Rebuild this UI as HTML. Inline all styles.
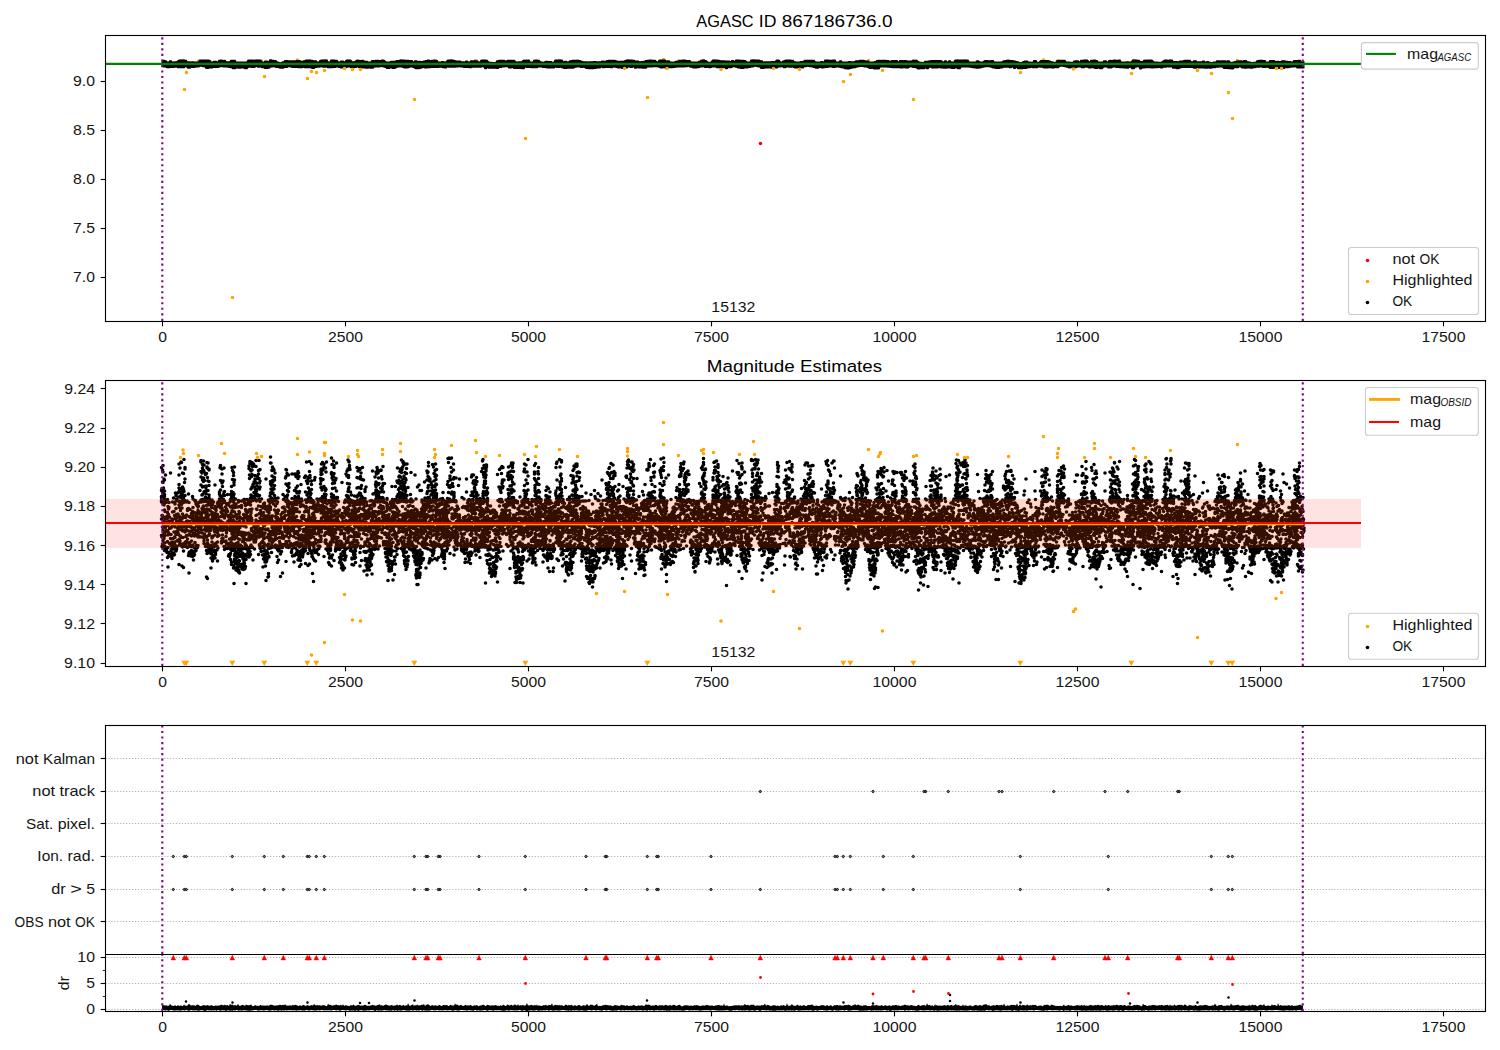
<!DOCTYPE html><html><head><meta charset="utf-8"><style>html,body{margin:0;padding:0;background:#fff;width:1500px;height:1050px;overflow:hidden}svg text{font-family:"Liberation Sans", sans-serif;fill:#151515}svg text.t{fill:#000}</style></head><body><svg width="1500" height="1050" viewBox="0 0 1500 1050" style="position:absolute;left:0;top:0">
<rect width="1500" height="1050" fill="#fff"/>
<defs>
<clipPath id="c1"><rect x="105.5" y="35.5" width="1380" height="286"/></clipPath>
<clipPath id="c2"><rect x="105.5" y="380.5" width="1380" height="286"/></clipPath>
<clipPath id="c3"><rect x="105.5" y="725.5" width="1380" height="229"/></clipPath>
<clipPath id="c4"><rect x="105.5" y="954.5" width="1380" height="57"/></clipPath>
<clipPath id="c34"><rect x="105.5" y="725.5" width="1380" height="286"/></clipPath>
</defs>
<g clip-path="url(#c1)">
<path transform="scale(0.5)" d="M366 121h0m1 1h0m-6 0h0m36 0h0m46-1h0m6 1h0m64 0h0m2 0h0m8 0h0m72-2h0m0 2h0m24 0h0m30-1h0m2 0h0m-2 1h0m0 0h0m48 0h0m18 0h0m0 0h0m2 0h0m48-1h0m0 1h0m36-1h0m0 1h0m68-1h0m2 1h0m-2 0h0m34-1h0m48 0h0m2 1h0m18 0h0m28 0h0m50 0h0m24-1h0m-2 1h0m48-1h0m36 1h0m100-1h0m0 1h0m0 0h0m72-3h0m0 2h0m30 1h0m46 0h0m4-1h0m0 1h0m20 0h0m52 0h0m28-1h0m2 1h0m228-1h0m24 1h0m-4 0h0m3 0h0m67 0h0m6 0h0m82 0h0m14 0h0m6 0h0m82 0h0m70-2h0m30 1h0m-2 1h0m0 0h0m54 0h0m20-1h0m0 0h0m32 1h0m46-1h0m4 1h0m20 0h0m50 0h0m134-1h0" stroke="#ffa500" stroke-width="7.2" stroke-linecap="round" fill="none"/>
<polygon points="161.5,59.76 162.5,59.76 163.5,59.76 164.5,59.76 165.5,60.25 166.5,60.25 167.5,61.47 168.5,61.47 169.5,60.13 170.5,60.13 171.5,60.13 172.5,61.4 173.5,61.4 174.5,61.15 175.5,61.15 176.5,61.13 177.5,60.23 178.5,59.69 179.5,59.58 180.5,59.58 181.5,59.58 182.5,59.45 183.5,59.45 184.5,59.45 185.5,59.86 186.5,59.86 187.5,61.18 188.5,61.18 189.5,61.18 190.5,61.61 191.5,61.31 192.5,61.31 193.5,61.31 194.5,61.45 195.5,61.51 196.5,61.51 197.5,61.61 198.5,61.01 199.5,59.57 200.5,59.51 201.5,59.51 202.5,59.51 203.5,59.54 204.5,59.54 205.5,59.62 206.5,59.62 207.5,59.62 208.5,59.62 209.5,59.64 210.5,59.93 211.5,61.49 212.5,61.49 213.5,60.74 214.5,60.74 215.5,60.74 216.5,60.74 217.5,61.6 218.5,59.85 219.5,59.76 220.5,59.76 221.5,59.76 222.5,59.9 223.5,59.9 224.5,59.9 225.5,59.9 226.5,61.2 227.5,61.2 228.5,61.2 229.5,61.2 230.5,59.87 231.5,59.87 232.5,59.87 233.5,59.85 234.5,59.85 235.5,59.85 236.5,61.44 237.5,61.52 238.5,61.52 239.5,61.52 240.5,61.53 241.5,61.53 242.5,61.46 243.5,61.46 244.5,61.46 245.5,61.46 246.5,61.47 247.5,59.78 248.5,59.57 249.5,59.57 250.5,59.57 251.5,59.57 252.5,59.62 253.5,59.62 254.5,59.7 255.5,59.51 256.5,59.51 257.5,59.51 258.5,59.52 259.5,59.52 260.5,59.52 261.5,59.95 262.5,61.43 263.5,61.65 264.5,60.44 265.5,60.44 266.5,60.44 267.5,60.44 268.5,61.3 269.5,59.35 270.5,59.35 271.5,59.35 272.5,59.64 273.5,59.84 274.5,59.94 275.5,59.99 276.5,60.14 277.5,61.38 278.5,61.38 279.5,61.99 280.5,62.22 281.5,61.87 282.5,61.21 283.5,61.21 284.5,59.97 285.5,59.97 286.5,59.97 287.5,59.97 288.5,60.17 289.5,60.23 290.5,60.18 291.5,60.18 292.5,60.18 293.5,60.19 294.5,60.19 295.5,60.19 296.5,60.07 297.5,60.07 298.5,60.07 299.5,60.07 300.5,60.31 301.5,60.71 302.5,60.71 303.5,60.36 304.5,60.29 305.5,59.58 306.5,59.58 307.5,59.58 308.5,59.55 309.5,59.55 310.5,59.55 311.5,59.68 312.5,59.68 313.5,60.37 314.5,60.37 315.5,60.37 316.5,60.37 317.5,61.45 318.5,61.43 319.5,59.96 320.5,59.69 321.5,59.62 322.5,59.62 323.5,59.62 324.5,59.68 325.5,59.59 326.5,59.59 327.5,59.59 328.5,61.5 329.5,61.5 330.5,59.39 331.5,59.39 332.5,59.39 333.5,59.54 334.5,59.54 335.5,59.64 336.5,59.64 337.5,59.64 338.5,61.36 339.5,61.57 340.5,60.62 341.5,60.62 342.5,60.62 343.5,60.62 344.5,61.48 345.5,60.05 346.5,59.49 347.5,59.49 348.5,59.49 349.5,59.49 350.5,59.59 351.5,59.97 352.5,61.25 353.5,61.28 354.5,61.28 355.5,60.36 356.5,59.87 357.5,59.87 358.5,59.87 359.5,59.92 360.5,59.92 361.5,59.86 362.5,59.86 363.5,59.86 364.5,60.49 365.5,60.83 366.5,60.83 367.5,60.83 368.5,61.53 369.5,61.53 370.5,61.5 371.5,60.04 372.5,60.04 373.5,60.04 374.5,60.08 375.5,59.87 376.5,59.87 377.5,59.87 378.5,59.87 379.5,59.99 380.5,59.99 381.5,59.82 382.5,59.82 383.5,59.82 384.5,59.82 385.5,60.67 386.5,61.41 387.5,61.41 388.5,61.41 389.5,61.59 390.5,60.82 391.5,60.82 392.5,60.82 393.5,60.82 394.5,60.8 395.5,60.54 396.5,59.9 397.5,59.9 398.5,59.9 399.5,59.93 400.5,59.49 401.5,59.49 402.5,59.49 403.5,59.57 404.5,59.57 405.5,59.64 406.5,59.69 407.5,59.69 408.5,59.69 409.5,60.12 410.5,60.12 411.5,60.12 412.5,60.12 413.5,61.54 414.5,60.23 415.5,60.23 416.5,60.23 417.5,60.74 418.5,60.74 419.5,60.74 420.5,61 421.5,61 422.5,61.02 423.5,60.6 424.5,60.6 425.5,60.03 426.5,60.03 427.5,59.62 428.5,59.62 429.5,59.62 430.5,60.36 431.5,59.72 432.5,59.72 433.5,59.72 434.5,59.68 435.5,59.68 436.5,59.68 437.5,59.97 438.5,61.48 439.5,61.44 440.5,61.44 441.5,61.12 442.5,61.12 443.5,61.12 444.5,61.5 445.5,61.5 446.5,60.55 447.5,59.39 448.5,59.39 449.5,59.39 450.5,59.39 451.5,59.39 452.5,59.39 453.5,59.7 454.5,59.7 455.5,60.37 456.5,60.39 457.5,60.39 458.5,60.43 459.5,60.43 460.5,60.43 461.5,61.37 462.5,61.37 463.5,61.37 464.5,61.44 465.5,60.44 466.5,60.44 467.5,60.44 468.5,61.46 469.5,61.46 470.5,60.33 471.5,60.24 472.5,60.24 473.5,60.24 474.5,60.25 475.5,60.36 476.5,60.36 477.5,60.36 478.5,61.24 479.5,61.42 480.5,60.07 481.5,59.47 482.5,59.47 483.5,59.47 484.5,59.47 485.5,59.73 486.5,59.73 487.5,59.73 488.5,60.88 489.5,61.78 490.5,61.78 491.5,61.78 492.5,61.99 493.5,61.99 494.5,61.99 495.5,62 496.5,60.22 497.5,60.22 498.5,59.96 499.5,59.88 500.5,59.82 501.5,59.82 502.5,59.82 503.5,59.82 504.5,59.87 505.5,60.49 506.5,60.15 507.5,59.85 508.5,59.85 509.5,59.77 510.5,59.65 511.5,59.65 512.5,59.64 513.5,59.64 514.5,59.64 515.5,60.69 516.5,61.52 517.5,61.55 518.5,61.34 519.5,61.34 520.5,61.34 521.5,61.34 522.5,60.07 523.5,59.68 524.5,59.68 525.5,59.68 526.5,59.45 527.5,59.45 528.5,59.45 529.5,59.45 530.5,61.46 531.5,61.46 532.5,61.46 533.5,59.75 534.5,59.66 535.5,59.66 536.5,59.66 537.5,59.87 538.5,59.87 539.5,59.87 540.5,61.08 541.5,61.47 542.5,61.47 543.5,61.71 544.5,61.25 545.5,60.84 546.5,60.84 547.5,60.84 548.5,60.92 549.5,60.92 550.5,61.09 551.5,61.09 552.5,61.64 553.5,61.66 554.5,59.86 555.5,59.58 556.5,59.58 557.5,59.58 558.5,59.46 559.5,59.46 560.5,59.46 561.5,59.51 562.5,59.51 563.5,61.3 564.5,60.86 565.5,60.86 566.5,60.86 567.5,61.47 568.5,61.33 569.5,60.25 570.5,60.25 571.5,60.02 572.5,59.78 573.5,59.78 574.5,59.78 575.5,59.68 576.5,59.68 577.5,59.68 578.5,59.7 579.5,60.08 580.5,60.1 581.5,60.79 582.5,60.79 583.5,61.32 584.5,61.13 585.5,61.13 586.5,61.13 587.5,61.13 588.5,61.52 589.5,61.22 590.5,61.22 591.5,61.22 592.5,61.22 593.5,61.02 594.5,61.02 595.5,61.02 596.5,61.18 597.5,61.18 598.5,61.18 599.5,61.18 600.5,61.28 601.5,60.5 602.5,60.5 603.5,60.5 604.5,60.67 605.5,60.67 606.5,60.12 607.5,59.91 608.5,59.86 609.5,59.66 610.5,59.66 611.5,59.66 612.5,59.66 613.5,59.74 614.5,59.74 615.5,60.07 616.5,60.13 617.5,60.72 618.5,60.72 619.5,60.72 620.5,60.72 621.5,60.82 622.5,60.82 623.5,60.82 624.5,60.31 625.5,59.89 626.5,59.56 627.5,59.49 628.5,59.49 629.5,59.49 630.5,59.59 631.5,59.59 632.5,59.59 633.5,59.72 634.5,59.72 635.5,60.42 636.5,60.42 637.5,60.42 638.5,60.42 639.5,61.33 640.5,61.33 641.5,61.06 642.5,61.06 643.5,60.72 644.5,60.72 645.5,59.96 646.5,59.96 647.5,59.66 648.5,59.66 649.5,59.46 650.5,59.46 651.5,59.46 652.5,59.77 653.5,59.69 654.5,59.69 655.5,59.69 656.5,60.81 657.5,61.54 658.5,60.02 659.5,59.44 660.5,59.44 661.5,59.44 662.5,59.39 663.5,59.39 664.5,59.39 665.5,59.62 666.5,60.38 667.5,60.24 668.5,60.24 669.5,60.24 670.5,61.46 671.5,61.46 672.5,61.46 673.5,61.85 674.5,61.37 675.5,60.85 676.5,60.85 677.5,60.85 678.5,60.23 679.5,59.85 680.5,59.65 681.5,59.65 682.5,59.59 683.5,59.59 684.5,59.59 685.5,59.59 686.5,60.03 687.5,60.03 688.5,60.03 689.5,60.03 690.5,60.22 691.5,61.5 692.5,61.5 693.5,61.51 694.5,61.51 695.5,61.53 696.5,61.57 697.5,61.57 698.5,60.68 699.5,60.68 700.5,59.88 701.5,59.82 702.5,59.4 703.5,59.4 704.5,59.4 705.5,59.94 706.5,59.94 707.5,60.89 708.5,61.71 709.5,61.71 710.5,61.71 711.5,60.5 712.5,59.61 713.5,59.59 714.5,59.59 715.5,59.54 716.5,59.54 717.5,59.54 718.5,59.7 719.5,59.7 720.5,60.26 721.5,60.32 722.5,60.32 723.5,60.32 724.5,60.32 725.5,60.62 726.5,60.4 727.5,60.4 728.5,60.4 729.5,60.4 730.5,61.09 731.5,60.03 732.5,60.03 733.5,60.03 734.5,61.06 735.5,59.52 736.5,59.52 737.5,59.52 738.5,59.52 739.5,59.66 740.5,59.63 741.5,59.63 742.5,59.63 743.5,59.63 744.5,60.09 745.5,60.09 746.5,60.63 747.5,61.51 748.5,61.51 749.5,61.56 750.5,59.46 751.5,59.46 752.5,59.46 753.5,59.51 754.5,59.47 755.5,59.47 756.5,59.47 757.5,59.48 758.5,59.48 759.5,59.48 760.5,60.16 761.5,60.16 762.5,60.16 763.5,61.41 764.5,61.31 765.5,61.31 766.5,61.31 767.5,61.16 768.5,61.16 769.5,61.16 770.5,61.16 771.5,61.12 772.5,61.12 773.5,61.12 774.5,61.33 775.5,60.3 776.5,59.61 777.5,59.61 778.5,59.61 779.5,59.78 780.5,60.92 781.5,61.66 782.5,60.62 783.5,60.48 784.5,59.98 785.5,59.61 786.5,59.61 787.5,59.61 788.5,59.57 789.5,59.57 790.5,59.57 791.5,59.72 792.5,59.72 793.5,59.72 794.5,61.34 795.5,61.34 796.5,61.53 797.5,61.53 798.5,61.53 799.5,61.44 800.5,60.91 801.5,60.91 802.5,60.91 803.5,60.51 804.5,59.63 805.5,59.63 806.5,59.63 807.5,59.63 808.5,59.63 809.5,59.78 810.5,59.78 811.5,59.76 812.5,59.76 813.5,59.76 814.5,59.77 815.5,61.14 816.5,61.48 817.5,61.48 818.5,61.48 819.5,61.75 820.5,60.94 821.5,60.94 822.5,60.94 823.5,61.5 824.5,59.57 825.5,59.57 826.5,59.51 827.5,59.51 828.5,59.51 829.5,59.77 830.5,59.64 831.5,59.64 832.5,59.53 833.5,59.53 834.5,59.53 835.5,59.54 836.5,61.53 837.5,61.58 838.5,61.58 839.5,60.28 840.5,60.28 841.5,60.28 842.5,61.44 843.5,61.44 844.5,61.38 845.5,61.38 846.5,61.38 847.5,61.44 848.5,61.12 849.5,61.12 850.5,61.12 851.5,61.37 852.5,61.37 853.5,61.37 854.5,60.89 855.5,60.15 856.5,60.15 857.5,60.15 858.5,60.15 859.5,59.86 860.5,59.85 861.5,59.76 862.5,59.76 863.5,59.76 864.5,60.09 865.5,60.18 866.5,60.38 867.5,60.38 868.5,60.49 869.5,61.51 870.5,61.53 871.5,61.53 872.5,61.61 873.5,61.61 874.5,60.88 875.5,60.88 876.5,60.05 877.5,60.05 878.5,60.05 879.5,60.05 880.5,59.92 881.5,59.92 882.5,59.86 883.5,59.86 884.5,59.86 885.5,59.86 886.5,60.01 887.5,60.01 888.5,60.01 889.5,60.54 890.5,60.69 891.5,60.05 892.5,60.05 893.5,60.05 894.5,60.05 895.5,60.08 896.5,60.08 897.5,60.1 898.5,61.53 899.5,60.12 900.5,60.11 901.5,60.11 902.5,60.11 903.5,60.24 904.5,60.05 905.5,60.05 906.5,60.05 907.5,60.38 908.5,60.54 909.5,60.54 910.5,60.54 911.5,60.54 912.5,59.79 913.5,59.69 914.5,59.69 915.5,59.69 916.5,59.69 917.5,60.32 918.5,60.91 919.5,61.45 920.5,61.69 921.5,61.77 922.5,61.95 923.5,61.93 924.5,60.82 925.5,60.82 926.5,60.82 927.5,60.82 928.5,60.52 929.5,60.26 930.5,60.26 931.5,59.9 932.5,59.9 933.5,59.9 934.5,59.9 935.5,60.03 936.5,60.03 937.5,60.03 938.5,59.94 939.5,59.94 940.5,59.94 941.5,59.94 942.5,60.89 943.5,61.42 944.5,60.3 945.5,60.3 946.5,60.3 947.5,61.84 948.5,60.25 949.5,60.25 950.5,60.25 951.5,61.58 952.5,61.44 953.5,61.44 954.5,59.66 955.5,59.49 956.5,59.49 957.5,59.49 958.5,59.52 959.5,59.52 960.5,59.62 961.5,59.61 962.5,59.61 963.5,59.49 964.5,59.49 965.5,59.49 966.5,59.49 967.5,59.63 968.5,59.77 969.5,61.49 970.5,61.49 971.5,61.49 972.5,61.53 973.5,61.53 974.5,61.53 975.5,61.53 976.5,60.21 977.5,60.21 978.5,60.21 979.5,61.07 980.5,61.41 981.5,61.41 982.5,61.44 983.5,60.73 984.5,60.02 985.5,60.02 986.5,60.02 987.5,60.02 988.5,60.26 989.5,60.21 990.5,60.21 991.5,60.07 992.5,60.07 993.5,60.07 994.5,61.52 995.5,61.46 996.5,61.46 997.5,61.46 998.5,61.46 999.5,61.59 1000.5,61.59 1001.5,61.49 1002.5,60.78 1003.5,60.28 1004.5,60.18 1005.5,60.07 1006.5,59.8 1007.5,59.8 1008.5,59.8 1009.5,59.8 1010.5,60 1011.5,60 1012.5,60 1013.5,60.27 1014.5,60.43 1015.5,60.43 1016.5,61.11 1017.5,61.13 1018.5,61.13 1019.5,62.01 1020.5,62.02 1021.5,62.02 1022.5,61.23 1023.5,61.04 1024.5,60.45 1025.5,60.45 1026.5,60.45 1027.5,60.45 1028.5,61.5 1029.5,61.5 1030.5,61.5 1031.5,61.68 1032.5,61.84 1033.5,60.05 1034.5,60.05 1035.5,60.05 1036.5,60.05 1037.5,61.85 1038.5,61.91 1039.5,61.04 1040.5,59.99 1041.5,59.99 1042.5,59.99 1043.5,59.99 1044.5,59.91 1045.5,59.91 1046.5,59.91 1047.5,59.91 1048.5,59.95 1049.5,60.48 1050.5,60.48 1051.5,61.33 1052.5,61.33 1053.5,61.53 1054.5,61.88 1055.5,61.64 1056.5,60.29 1057.5,60.02 1058.5,60.02 1059.5,60.02 1060.5,59.86 1061.5,59.86 1062.5,59.78 1063.5,59.78 1064.5,59.78 1065.5,59.94 1066.5,61.53 1067.5,61.45 1068.5,61.45 1069.5,61.45 1070.5,61.68 1071.5,61.68 1072.5,62.11 1073.5,60.56 1074.5,60.56 1075.5,60.25 1076.5,60.23 1077.5,60.23 1078.5,60.23 1079.5,61.51 1080.5,59.82 1081.5,59.82 1082.5,59.82 1083.5,59.82 1084.5,59.55 1085.5,59.55 1086.5,59.55 1087.5,59.55 1088.5,60.36 1089.5,61.56 1090.5,59.86 1091.5,59.86 1092.5,59.71 1093.5,59.71 1094.5,59.71 1095.5,59.71 1096.5,60.04 1097.5,60.04 1098.5,61.51 1099.5,61.51 1100.5,61.51 1101.5,61.53 1102.5,61.53 1103.5,60.13 1104.5,60.13 1105.5,60.13 1106.5,60.13 1107.5,61.8 1108.5,60.08 1109.5,60.08 1110.5,60.08 1111.5,59.89 1112.5,59.89 1113.5,59.62 1114.5,59.62 1115.5,59.62 1116.5,59.84 1117.5,59.84 1118.5,59.56 1119.5,59.56 1120.5,59.56 1121.5,61.45 1122.5,61.45 1123.5,61.47 1124.5,61.47 1125.5,61.47 1126.5,61.28 1127.5,61.28 1128.5,61.28 1129.5,61.53 1130.5,61.53 1131.5,60.68 1132.5,59.79 1133.5,59.45 1134.5,59.45 1135.5,59.45 1136.5,59.5 1137.5,59.82 1138.5,59.82 1139.5,59.82 1140.5,60.97 1141.5,60.97 1142.5,60.97 1143.5,59.75 1144.5,59.7 1145.5,59.7 1146.5,59.7 1147.5,59.57 1148.5,59.57 1149.5,59.57 1150.5,59.57 1151.5,59.61 1152.5,59.69 1153.5,60.84 1154.5,61.53 1155.5,61.53 1156.5,61.53 1157.5,61.53 1158.5,61.83 1159.5,61.85 1160.5,61.85 1161.5,61.45 1162.5,60.82 1163.5,60 1164.5,59.44 1165.5,59.41 1166.5,59.41 1167.5,59.41 1168.5,59.69 1169.5,59.42 1170.5,59.42 1171.5,59.42 1172.5,59.42 1173.5,60.98 1174.5,60.98 1175.5,60.98 1176.5,60.98 1177.5,61.32 1178.5,61.32 1179.5,60.54 1180.5,60.54 1181.5,60.54 1182.5,60.54 1183.5,59.88 1184.5,59.64 1185.5,59.64 1186.5,59.64 1187.5,59.65 1188.5,59.65 1189.5,59.67 1190.5,59.77 1191.5,61.3 1192.5,61.22 1193.5,60.29 1194.5,60.29 1195.5,60.29 1196.5,60.29 1197.5,61.42 1198.5,61.3 1199.5,61.3 1200.5,61.3 1201.5,61.15 1202.5,60.62 1203.5,60.62 1204.5,60.62 1205.5,61.68 1206.5,61.03 1207.5,61.03 1208.5,61.03 1209.5,61.79 1210.5,61.79 1211.5,61.9 1212.5,61.9 1213.5,61.57 1214.5,61.47 1215.5,61.44 1216.5,60.23 1217.5,60.23 1218.5,60.23 1219.5,60.23 1220.5,60.45 1221.5,60.27 1222.5,60.2 1223.5,60.2 1224.5,60.2 1225.5,60.2 1226.5,60.86 1227.5,60.36 1228.5,60.36 1229.5,60.36 1230.5,61.64 1231.5,61.64 1232.5,61.64 1233.5,61.51 1234.5,60.99 1235.5,60.95 1236.5,60.62 1237.5,60.62 1238.5,60.62 1239.5,60.13 1240.5,60.13 1241.5,60.13 1242.5,60.68 1243.5,60.03 1244.5,60.03 1245.5,60.03 1246.5,60.03 1247.5,61.2 1248.5,61.2 1249.5,61.53 1250.5,61.53 1251.5,61.89 1252.5,61.98 1253.5,61.65 1254.5,61.65 1255.5,61.65 1256.5,60.17 1257.5,60.17 1258.5,59.66 1259.5,59.66 1260.5,59.66 1261.5,59.66 1262.5,59.76 1263.5,59.96 1264.5,59.96 1265.5,59.96 1266.5,61.69 1267.5,61.44 1268.5,61.44 1269.5,59.99 1270.5,59.99 1271.5,59.99 1272.5,60.01 1273.5,60.05 1274.5,60.05 1275.5,60.96 1276.5,60.75 1277.5,60.75 1278.5,60.75 1279.5,61.04 1280.5,61.04 1281.5,60.18 1282.5,60.18 1283.5,60.18 1284.5,60.18 1285.5,60.61 1286.5,60.68 1287.5,60.68 1288.5,60.88 1289.5,60.88 1290.5,60.88 1291.5,61.57 1292.5,61.5 1293.5,59.99 1294.5,59.99 1295.5,59.99 1296.5,59.96 1297.5,59.95 1298.5,59.63 1299.5,59.63 1300.5,59.63 1301.5,61.32 1302.5,61.36 1303.5,61.36 1304.5,61.36 1304.5,68.48 1303.5,68.59 1302.5,68.59 1301.5,68.59 1300.5,68.41 1299.5,68.55 1298.5,68.55 1297.5,68.55 1296.5,68.26 1295.5,67.35 1294.5,67.38 1293.5,67.38 1292.5,67.38 1291.5,67.69 1290.5,67.74 1289.5,67.97 1288.5,68.25 1287.5,68.25 1286.5,68.25 1285.5,68.35 1284.5,68.98 1283.5,68.98 1282.5,68.98 1281.5,68.79 1280.5,68.79 1279.5,69.08 1278.5,69.08 1277.5,69.08 1276.5,69.08 1275.5,68.79 1274.5,68.64 1273.5,69.08 1272.5,69.08 1271.5,69.08 1270.5,69.08 1269.5,69.01 1268.5,68.05 1267.5,67.84 1266.5,67.84 1265.5,67.97 1264.5,67.97 1263.5,67.97 1262.5,67.97 1261.5,67.44 1260.5,67.52 1259.5,67.63 1258.5,67.63 1257.5,67.65 1256.5,67.65 1255.5,68.19 1254.5,68.19 1253.5,68.23 1252.5,68.67 1251.5,68.67 1250.5,68.67 1249.5,68.62 1248.5,68.62 1247.5,68.62 1246.5,68.82 1245.5,68.82 1244.5,68.82 1243.5,68.4 1242.5,68.4 1241.5,68.4 1240.5,67.57 1239.5,67.27 1238.5,68.14 1237.5,68.14 1236.5,68.14 1235.5,68.14 1234.5,68.31 1233.5,69.43 1232.5,69.43 1231.5,69.43 1230.5,69.27 1229.5,69.27 1228.5,69.27 1227.5,68.98 1226.5,69 1225.5,69 1224.5,69 1223.5,69 1222.5,67.73 1221.5,67.6 1220.5,67.6 1219.5,67.43 1218.5,67.63 1217.5,67.63 1216.5,67.63 1215.5,68.22 1214.5,68.22 1213.5,68.32 1212.5,68.32 1211.5,68.8 1210.5,68.8 1209.5,68.8 1208.5,68.58 1207.5,68.64 1206.5,68.64 1205.5,68.64 1204.5,68.64 1203.5,68.54 1202.5,68.54 1201.5,68.54 1200.5,68.54 1199.5,68.45 1198.5,68.45 1197.5,68.08 1196.5,68.71 1195.5,68.71 1194.5,68.71 1193.5,68.71 1192.5,68.04 1191.5,68.04 1190.5,67.89 1189.5,67.89 1188.5,67.89 1187.5,67.88 1186.5,67.88 1185.5,67.99 1184.5,67.99 1183.5,67.99 1182.5,68.08 1181.5,68.29 1180.5,68.31 1179.5,68.91 1178.5,69.18 1177.5,69.18 1176.5,69.18 1175.5,68.72 1174.5,68.81 1173.5,68.81 1172.5,68.81 1171.5,67.34 1170.5,67.52 1169.5,67.52 1168.5,67.52 1167.5,67.35 1166.5,67.87 1165.5,67.87 1164.5,67.87 1163.5,67.73 1162.5,68.57 1161.5,68.57 1160.5,68.57 1159.5,67.93 1158.5,68.04 1157.5,68.27 1156.5,68.27 1155.5,68.27 1154.5,68.22 1153.5,68.41 1152.5,68.41 1151.5,68.41 1150.5,68.2 1149.5,68.2 1148.5,68.2 1147.5,68.19 1146.5,68.19 1145.5,68.14 1144.5,68.46 1143.5,68.46 1142.5,68.46 1141.5,69.41 1140.5,69.41 1139.5,69.41 1138.5,67.33 1137.5,67.33 1136.5,67.84 1135.5,67.84 1134.5,69.22 1133.5,69.22 1132.5,69.22 1131.5,69.22 1130.5,67.87 1129.5,68.02 1128.5,68.81 1127.5,68.81 1126.5,68.81 1125.5,68.57 1124.5,68.45 1123.5,68.45 1122.5,68.22 1121.5,68.22 1120.5,68.22 1119.5,68.2 1118.5,68.05 1117.5,68.03 1116.5,67.91 1115.5,67.75 1114.5,67.54 1113.5,67.48 1112.5,67.96 1111.5,68.39 1110.5,68.41 1109.5,68.41 1108.5,68.41 1107.5,68.27 1106.5,67.56 1105.5,67.6 1104.5,67.6 1103.5,67.91 1102.5,69.34 1101.5,69.34 1100.5,69.34 1099.5,69.34 1098.5,68.44 1097.5,68.93 1096.5,68.93 1095.5,68.93 1094.5,68.93 1093.5,68.34 1092.5,68.33 1091.5,68.33 1090.5,68.4 1089.5,68.4 1088.5,68.4 1087.5,67.77 1086.5,67.77 1085.5,67.43 1084.5,68.33 1083.5,68.33 1082.5,68.33 1081.5,68.33 1080.5,67.4 1079.5,67.4 1078.5,67.49 1077.5,67.63 1076.5,68.2 1075.5,68.2 1074.5,68.2 1073.5,68.14 1072.5,68.14 1071.5,68.12 1070.5,68.44 1069.5,68.44 1068.5,68.44 1067.5,67.67 1066.5,67.67 1065.5,67.24 1064.5,67.24 1063.5,67.09 1062.5,66.79 1061.5,66.75 1060.5,66.84 1059.5,67.3 1058.5,68.37 1057.5,68.37 1056.5,68.37 1055.5,67.93 1054.5,68.56 1053.5,68.56 1052.5,68.56 1051.5,68.56 1050.5,68.33 1049.5,68.31 1048.5,68.31 1047.5,68.38 1046.5,68.38 1045.5,68.45 1044.5,68.45 1043.5,68.45 1042.5,67.83 1041.5,67.83 1040.5,67.83 1039.5,67.6 1038.5,67.6 1037.5,68.21 1036.5,68.21 1035.5,68.21 1034.5,68.27 1033.5,68.27 1032.5,68.27 1031.5,67.79 1030.5,68.26 1029.5,68.26 1028.5,68.26 1027.5,68.42 1026.5,68.88 1025.5,68.99 1024.5,68.99 1023.5,68.99 1022.5,69.16 1021.5,69.16 1020.5,69.16 1019.5,69.16 1018.5,69.14 1017.5,69.14 1016.5,67.77 1015.5,69.07 1014.5,69.07 1013.5,69.07 1012.5,67.35 1011.5,68.31 1010.5,68.31 1009.5,68.31 1008.5,67.63 1007.5,67.63 1006.5,67.63 1005.5,67.63 1004.5,67.82 1003.5,67.82 1002.5,68.4 1001.5,68.4 1000.5,68.4 999.5,68.96 998.5,68.96 997.5,68.97 996.5,68.97 995.5,68.97 994.5,68.47 993.5,68.47 992.5,68.47 991.5,67.83 990.5,67.83 989.5,67.28 988.5,67.26 987.5,67.32 986.5,67.32 985.5,67.35 984.5,67.52 983.5,67.83 982.5,67.83 981.5,68.31 980.5,68.44 979.5,68.48 978.5,68.63 977.5,68.63 976.5,68.63 975.5,68.55 974.5,68.53 973.5,68.35 972.5,68.35 971.5,68.06 970.5,67.86 969.5,67.86 968.5,67.51 967.5,67.43 966.5,67.4 965.5,67.4 964.5,67.52 963.5,67.52 962.5,67.52 961.5,67.38 960.5,69.13 959.5,69.13 958.5,69.13 957.5,69.13 956.5,68.26 955.5,68.42 954.5,68.95 953.5,68.95 952.5,68.95 951.5,68.95 950.5,68.62 949.5,68.62 948.5,68.62 947.5,68.42 946.5,68.64 945.5,68.64 944.5,68.64 943.5,68.64 942.5,68.51 941.5,68.51 940.5,68.51 939.5,68.1 938.5,68.2 937.5,68.46 936.5,68.46 935.5,68.48 934.5,68.48 933.5,68.48 932.5,68.48 931.5,68.38 930.5,67.59 929.5,67.92 928.5,69.33 927.5,69.33 926.5,69.33 925.5,68.59 924.5,69.24 923.5,69.24 922.5,69.24 921.5,69.14 920.5,69.14 919.5,69.49 918.5,69.49 917.5,69.49 916.5,68.51 915.5,68.19 914.5,68.07 913.5,68.07 912.5,68.07 911.5,67.42 910.5,67.33 909.5,67.85 908.5,68.53 907.5,68.6 906.5,68.6 905.5,68.6 904.5,68.24 903.5,68.24 902.5,68.5 901.5,68.5 900.5,68.5 899.5,68.24 898.5,68.21 897.5,68.33 896.5,68.33 895.5,68.33 894.5,68.23 893.5,68.23 892.5,68.23 891.5,68.11 890.5,67.95 889.5,67.85 888.5,67.82 887.5,67.73 886.5,67.43 885.5,67.42 884.5,67.42 883.5,67.52 882.5,67.52 881.5,67.52 880.5,67.52 879.5,69.38 878.5,69.38 877.5,69.38 876.5,69.38 875.5,69.43 874.5,69.43 873.5,69.43 872.5,68.73 871.5,68.96 870.5,68.96 869.5,68.96 868.5,68.5 867.5,68.02 866.5,67.58 865.5,67.48 864.5,67.46 863.5,67.16 862.5,66.99 861.5,66.98 860.5,66.98 859.5,67.33 858.5,67.33 857.5,67.42 856.5,67.86 855.5,68.21 854.5,68.34 853.5,68.34 852.5,68.65 851.5,68.8 850.5,68.99 849.5,69.43 848.5,69.43 847.5,69.43 846.5,69.43 845.5,69.15 844.5,69.15 843.5,68.42 842.5,68.42 841.5,68.17 840.5,68.03 839.5,67.63 838.5,67.63 837.5,67.24 836.5,67.75 835.5,67.75 834.5,67.96 833.5,67.96 832.5,67.96 831.5,67.59 830.5,67.59 829.5,67.47 828.5,67.75 827.5,67.89 826.5,67.89 825.5,67.89 824.5,68.26 823.5,68.51 822.5,68.51 821.5,68.51 820.5,67.99 819.5,67.93 818.5,68.7 817.5,68.7 816.5,68.7 815.5,68.69 814.5,67.89 813.5,67.89 812.5,67.47 811.5,67.38 810.5,67.23 809.5,67.23 808.5,67.03 807.5,66.85 806.5,67.13 805.5,67.13 804.5,67.29 803.5,68.45 802.5,68.45 801.5,68.45 800.5,67.69 799.5,67.69 798.5,68.28 797.5,68.44 796.5,68.44 795.5,68.44 794.5,68.44 793.5,67.92 792.5,67.51 791.5,67.84 790.5,67.84 789.5,67.84 788.5,67.83 787.5,67.28 786.5,67.8 785.5,68.24 784.5,68.24 783.5,68.24 782.5,67.16 781.5,67.21 780.5,67.38 779.5,67.38 778.5,67.54 777.5,68.47 776.5,68.47 775.5,68.47 774.5,67.7 773.5,68.64 772.5,68.64 771.5,68.64 770.5,68.64 769.5,68.3 768.5,68.38 767.5,68.38 766.5,68.38 765.5,68.38 764.5,68.63 763.5,69 762.5,69 761.5,69 760.5,69 759.5,67.48 758.5,67.48 757.5,67.15 756.5,66.91 755.5,66.74 754.5,66.74 753.5,67.47 752.5,67.47 751.5,67.47 750.5,68.02 749.5,68.02 748.5,68.17 747.5,68.55 746.5,68.55 745.5,68.55 744.5,68.41 743.5,68.92 742.5,68.92 741.5,68.92 740.5,68.92 739.5,68.57 738.5,68.57 737.5,68.57 736.5,67.77 735.5,67.77 734.5,67.27 733.5,67.27 732.5,67.75 731.5,68.25 730.5,68.25 729.5,68.25 728.5,68.12 727.5,69.27 726.5,69.27 725.5,69.27 724.5,68.03 723.5,68.18 722.5,68.18 721.5,68.18 720.5,68.18 719.5,68.18 718.5,68.18 717.5,68.18 716.5,68.18 715.5,67.58 714.5,67.58 713.5,67.58 712.5,67.54 711.5,68.05 710.5,68.14 709.5,68.14 708.5,68.14 707.5,67.81 706.5,68.07 705.5,68.07 704.5,68.07 703.5,67.34 702.5,67.43 701.5,67.56 700.5,67.56 699.5,68 698.5,68.17 697.5,68.3 696.5,68.6 695.5,68.6 694.5,68.6 693.5,68.57 692.5,68.36 691.5,67.75 690.5,67.75 689.5,67.59 688.5,66.69 687.5,67.29 686.5,67.29 685.5,67.29 684.5,67.43 683.5,67.43 682.5,67.43 681.5,67.46 680.5,67.49 679.5,67.49 678.5,67.49 677.5,67.59 676.5,67.82 675.5,67.82 674.5,68.12 673.5,68.12 672.5,68.13 671.5,68.22 670.5,68.22 669.5,68.22 668.5,68.2 667.5,69.07 666.5,69.07 665.5,69.07 664.5,68.34 663.5,68.34 662.5,68.45 661.5,68.45 660.5,68.45 659.5,67.91 658.5,67.45 657.5,67.42 656.5,67.37 655.5,67.37 654.5,67.33 653.5,67.3 652.5,67.5 651.5,67.5 650.5,67.5 649.5,67.53 648.5,67.58 647.5,67.58 646.5,68.75 645.5,68.76 644.5,68.76 643.5,68.76 642.5,68.76 641.5,68.41 640.5,68.45 639.5,68.45 638.5,68.45 637.5,68.19 636.5,68.67 635.5,68.67 634.5,68.67 633.5,67.2 632.5,68.05 631.5,68.05 630.5,68.05 629.5,67.74 628.5,67.28 627.5,68.45 626.5,68.45 625.5,68.45 624.5,68.45 623.5,68.92 622.5,68.92 621.5,68.92 620.5,68.33 619.5,68.41 618.5,68.41 617.5,68.41 616.5,68.08 615.5,67.78 614.5,67.78 613.5,67.52 612.5,68.2 611.5,68.2 610.5,68.2 609.5,67.99 608.5,67.94 607.5,68.07 606.5,68.07 605.5,68.12 604.5,68.13 603.5,68.13 602.5,68.13 601.5,67.5 600.5,68.4 599.5,68.4 598.5,68.4 597.5,68.4 596.5,68.81 595.5,68.92 594.5,69.09 593.5,69.33 592.5,69.33 591.5,69.33 590.5,69.18 589.5,69.18 588.5,69.18 587.5,69.11 586.5,68.92 585.5,68.82 584.5,67.94 583.5,67.81 582.5,68.05 581.5,68.05 580.5,68.05 579.5,67.38 578.5,67.38 577.5,67.37 576.5,67.65 575.5,67.65 574.5,68.13 573.5,68.66 572.5,68.66 571.5,68.66 570.5,68.66 569.5,68.74 568.5,68.74 567.5,68.74 566.5,69.04 565.5,69.04 564.5,69.04 563.5,69.04 562.5,68.29 561.5,68.29 560.5,67.74 559.5,68.02 558.5,68.02 557.5,68.02 556.5,67.94 555.5,67.47 554.5,68.58 553.5,68.58 552.5,68.58 551.5,68.58 550.5,68.56 549.5,68.56 548.5,68.56 547.5,68.39 546.5,68.39 545.5,67.95 544.5,68.1 543.5,68.1 542.5,68.1 541.5,67.53 540.5,67.42 539.5,67.42 538.5,67.53 537.5,68.25 536.5,68.25 535.5,68.25 534.5,68.25 533.5,68.13 532.5,68.13 531.5,68.13 530.5,67.95 529.5,67.95 528.5,68.04 527.5,68.04 526.5,68.04 525.5,67.49 524.5,69.14 523.5,69.14 522.5,69.14 521.5,69.14 520.5,69.12 519.5,69.12 518.5,69.12 517.5,69.11 516.5,69.11 515.5,69.11 514.5,69.11 513.5,69.11 512.5,67.93 511.5,68.43 510.5,68.43 509.5,68.43 508.5,68.43 507.5,67.32 506.5,67.32 505.5,67.21 504.5,67.53 503.5,67.53 502.5,67.53 501.5,67.93 500.5,67.93 499.5,67.93 498.5,69.09 497.5,69.09 496.5,69.09 495.5,68.79 494.5,68.79 493.5,68.79 492.5,68.82 491.5,68.82 490.5,68.82 489.5,68.63 488.5,68.63 487.5,68.25 486.5,69.13 485.5,69.13 484.5,69.13 483.5,67.35 482.5,67.34 481.5,67.87 480.5,67.87 479.5,67.87 478.5,67.87 477.5,67.74 476.5,67.74 475.5,67.74 474.5,67.74 473.5,67.63 472.5,67.77 471.5,68.16 470.5,68.16 469.5,68.16 468.5,68.09 467.5,68.09 466.5,68.11 465.5,68.11 464.5,68.11 463.5,68.11 462.5,67.61 461.5,67.55 460.5,67.55 459.5,67.24 458.5,67.43 457.5,67.43 456.5,67.49 455.5,67.75 454.5,67.75 453.5,67.75 452.5,67.75 451.5,67.66 450.5,67.66 449.5,67.66 448.5,67.66 447.5,67.54 446.5,68.42 445.5,68.42 444.5,68.42 443.5,68.13 442.5,68.13 441.5,67.87 440.5,67.83 439.5,67.87 438.5,67.98 437.5,67.98 436.5,67.98 435.5,67.98 434.5,67.91 433.5,67.91 432.5,67.98 431.5,68 430.5,68.13 429.5,68.13 428.5,68.13 427.5,68.38 426.5,68.38 425.5,68.38 424.5,68.38 423.5,68.03 422.5,68.16 421.5,68.74 420.5,68.87 419.5,69.23 418.5,69.23 417.5,69.23 416.5,69.23 415.5,69.21 414.5,68.76 413.5,68.09 412.5,67.79 411.5,67.5 410.5,67.5 409.5,68.05 408.5,68.34 407.5,68.46 406.5,68.46 405.5,68.46 404.5,68.46 403.5,68.16 402.5,67.77 401.5,67.54 400.5,67.42 399.5,67.42 398.5,67.42 397.5,67.71 396.5,68.18 395.5,68.72 394.5,68.98 393.5,68.98 392.5,68.98 391.5,68.54 390.5,68.54 389.5,69.03 388.5,69.03 387.5,69.03 386.5,69.03 385.5,68.09 384.5,67.84 383.5,67.41 382.5,67.24 381.5,66.89 380.5,67.29 379.5,67.45 378.5,67.45 377.5,67.45 376.5,67.45 375.5,67.47 374.5,67.47 373.5,68.68 372.5,68.68 371.5,68.68 370.5,68.68 369.5,68.5 368.5,68.74 367.5,68.74 366.5,68.74 365.5,68.74 364.5,68.55 363.5,68.55 362.5,68.55 361.5,68.29 360.5,68.29 359.5,68.29 358.5,68.29 357.5,67.35 356.5,68.12 355.5,68.12 354.5,68.23 353.5,68.23 352.5,68.23 351.5,68.23 350.5,68.23 349.5,67.52 348.5,67.4 347.5,67.78 346.5,67.98 345.5,68.39 344.5,68.39 343.5,68.5 342.5,68.5 341.5,68.5 340.5,68.38 339.5,68.12 338.5,68.12 337.5,67.46 336.5,67.55 335.5,68.02 334.5,68.02 333.5,68.02 332.5,68.28 331.5,68.28 330.5,68.28 329.5,68.23 328.5,68.23 327.5,68.14 326.5,67.51 325.5,67.81 324.5,67.81 323.5,67.81 322.5,67.81 321.5,67.32 320.5,67.41 319.5,67.72 318.5,67.72 317.5,67.72 316.5,68.04 315.5,68.04 314.5,69.07 313.5,69.07 312.5,69.07 311.5,68.67 310.5,68.18 309.5,68.27 308.5,68.27 307.5,68.27 306.5,68.27 305.5,68.16 304.5,68.16 303.5,67.84 302.5,68.22 301.5,68.22 300.5,68.33 299.5,68.33 298.5,68.33 297.5,67.98 296.5,67.98 295.5,68.1 294.5,68.1 293.5,68.1 292.5,68.1 291.5,67.79 290.5,67.62 289.5,67.37 288.5,67.37 287.5,68.06 286.5,68.06 285.5,68.06 284.5,68.06 283.5,68.64 282.5,68.64 281.5,68.81 280.5,68.81 279.5,68.81 278.5,68.11 277.5,68.11 276.5,68.11 275.5,67.82 274.5,67.38 273.5,67.35 272.5,67.62 271.5,67.62 270.5,67.83 269.5,68.85 268.5,68.85 267.5,69.03 266.5,69.03 265.5,69.03 264.5,69.03 263.5,68.34 262.5,68.34 261.5,68.34 260.5,67.57 259.5,67.72 258.5,67.72 257.5,67.72 256.5,67.09 255.5,67.43 254.5,67.99 253.5,67.99 252.5,67.99 251.5,67.99 250.5,67.84 249.5,67.84 248.5,67.84 247.5,69.16 246.5,69.16 245.5,69.16 244.5,69.16 243.5,68.47 242.5,68.47 241.5,68.45 240.5,68.63 239.5,68.63 238.5,68.63 237.5,68.6 236.5,68.53 235.5,69.18 234.5,69.18 233.5,69.18 232.5,69.18 231.5,68.21 230.5,68.21 229.5,67.95 228.5,67.81 227.5,67.8 226.5,67.41 225.5,67.47 224.5,67.47 223.5,67.47 222.5,67.33 221.5,67.14 220.5,67.14 219.5,67.39 218.5,68.05 217.5,68.05 216.5,68.05 215.5,67.9 214.5,67.9 213.5,68.03 212.5,68.4 211.5,68.4 210.5,68.4 209.5,68.4 208.5,68.91 207.5,68.91 206.5,68.91 205.5,68.84 204.5,67.31 203.5,67.17 202.5,67.17 201.5,66.84 200.5,66.85 199.5,67.25 198.5,67.38 197.5,67.51 196.5,67.54 195.5,67.76 194.5,67.99 193.5,67.99 192.5,67.99 191.5,67.81 190.5,68.65 189.5,68.65 188.5,68.65 187.5,68.65 186.5,67.38 185.5,67.31 184.5,68.37 183.5,68.37 182.5,68.37 181.5,68.3 180.5,68.3 179.5,68.21 178.5,68.21 177.5,68.21 176.5,67.55 175.5,67.73 174.5,67.73 173.5,67.91 172.5,67.91 171.5,67.91 170.5,67.91 169.5,68.33 168.5,68.33 167.5,68.33 166.5,68.33 165.5,67.53 164.5,67.53 163.5,67.52 162.5,67.33 161.5,67.33" fill="#000"/>
<path transform="scale(0.5)" d="M369 179h0m4-34h0m92 450h0m64-442h0m86 4h0m8-14h0m10 2h0m16-4h0m56-2h0m16 0h0m108 60h0m-140-62h0m362 140h0m244-82h0m392-32h0m14-14h0m64-8h0m62 58h0m-578-62h0m193 2h0m157 0h0m-52-2h0m-213 0h0m707 8h0m106-7h0m116 9h0m132-6h0m28 6h0m34 38h0m8 52h0m88-100h0m10 0h0" stroke="#ffa500" stroke-width="7.2" stroke-linecap="round" fill="none"/>
<path transform="scale(0.5)" d="M1521 287h0" stroke="#ff0000" stroke-width="7.2" stroke-linecap="round" fill="none"/>
<line x1="105.5" y1="63.9" x2="1361" y2="63.9" stroke="#008000" stroke-width="2.08"/>
<line x1="162.3" y1="320.9" x2="162.3" y2="35.5" stroke="#800080" stroke-width="2.08" stroke-dasharray="2.08 3.44"/>
<line x1="1302.77" y1="320.9" x2="1302.77" y2="35.5" stroke="#800080" stroke-width="2.08" stroke-dasharray="2.08 3.44"/>
</g>
<text x="711.38" y="311.9" font-size="14.3" textLength="44" lengthAdjust="spacingAndGlyphs">15132</text>
<rect x="105.5" y="35.5" width="1380" height="286" fill="none" stroke="#000" stroke-width="1.11"/>
<line x1="162.5" y1="321.5" x2="162.5" y2="326.36" stroke="#000" stroke-width="1.11"/>
<text x="162.5" y="342" font-size="14.3" text-anchor="middle" textLength="8.75" lengthAdjust="spacingAndGlyphs">0</text>
<line x1="345.5" y1="321.5" x2="345.5" y2="326.36" stroke="#000" stroke-width="1.11"/>
<text x="345.5" y="342" font-size="14.3" text-anchor="middle" textLength="35" lengthAdjust="spacingAndGlyphs">2500</text>
<line x1="528.5" y1="321.5" x2="528.5" y2="326.36" stroke="#000" stroke-width="1.11"/>
<text x="528.5" y="342" font-size="14.3" text-anchor="middle" textLength="35" lengthAdjust="spacingAndGlyphs">5000</text>
<line x1="711.5" y1="321.5" x2="711.5" y2="326.36" stroke="#000" stroke-width="1.11"/>
<text x="711.5" y="342" font-size="14.3" text-anchor="middle" textLength="35" lengthAdjust="spacingAndGlyphs">7500</text>
<line x1="894.5" y1="321.5" x2="894.5" y2="326.36" stroke="#000" stroke-width="1.11"/>
<text x="894.5" y="342" font-size="14.3" text-anchor="middle" textLength="43.88" lengthAdjust="spacingAndGlyphs">10000</text>
<line x1="1077.5" y1="321.5" x2="1077.5" y2="326.36" stroke="#000" stroke-width="1.11"/>
<text x="1077.5" y="342" font-size="14.3" text-anchor="middle" textLength="43.88" lengthAdjust="spacingAndGlyphs">12500</text>
<line x1="1260.5" y1="321.5" x2="1260.5" y2="326.36" stroke="#000" stroke-width="1.11"/>
<text x="1260.5" y="342" font-size="14.3" text-anchor="middle" textLength="43.88" lengthAdjust="spacingAndGlyphs">15000</text>
<line x1="1443.5" y1="321.5" x2="1443.5" y2="326.36" stroke="#000" stroke-width="1.11"/>
<text x="1443.5" y="342" font-size="14.3" text-anchor="middle" textLength="43.88" lengthAdjust="spacingAndGlyphs">17500</text>
<line x1="100.64" y1="81.5" x2="105.5" y2="81.5" stroke="#000" stroke-width="1.11"/>
<text x="95" y="86" font-size="14.3" text-anchor="end" textLength="22" lengthAdjust="spacingAndGlyphs">9.0</text>
<line x1="100.64" y1="130.5" x2="105.5" y2="130.5" stroke="#000" stroke-width="1.11"/>
<text x="95" y="135" font-size="14.3" text-anchor="end" textLength="22" lengthAdjust="spacingAndGlyphs">8.5</text>
<line x1="100.64" y1="179.5" x2="105.5" y2="179.5" stroke="#000" stroke-width="1.11"/>
<text x="95" y="184" font-size="14.3" text-anchor="end" textLength="22" lengthAdjust="spacingAndGlyphs">8.0</text>
<line x1="100.64" y1="228.5" x2="105.5" y2="228.5" stroke="#000" stroke-width="1.11"/>
<text x="95" y="233" font-size="14.3" text-anchor="end" textLength="21.88" lengthAdjust="spacingAndGlyphs">7.5</text>
<line x1="100.64" y1="277.5" x2="105.5" y2="277.5" stroke="#000" stroke-width="1.11"/>
<text x="95" y="282" font-size="14.3" text-anchor="end" textLength="21.88" lengthAdjust="spacingAndGlyphs">7.0</text>
<text x="696.34" y="27" font-size="17.1" textLength="57.29" lengthAdjust="spacingAndGlyphs" class="t">AGASC</text>
<text x="758.89" y="27" font-size="17.1" textLength="17.64" lengthAdjust="spacingAndGlyphs" class="t">ID</text>
<text x="781.8" y="27" font-size="17.1" textLength="110.66" lengthAdjust="spacingAndGlyphs" class="t">867186736.0</text>
<rect x="1361.4" y="42.65" width="116.9" height="26.45" rx="2.8" fill="#fff" fill-opacity="0.8" stroke="#cccccc" stroke-width="1.11"/>
<line x1="1366" y1="53.9" x2="1395.9" y2="53.9" stroke="#008000" stroke-width="2.08"/>
<text x="1407" y="58.8" font-size="14.3" textLength="31" lengthAdjust="spacingAndGlyphs">mag</text>
<text x="1437.4" y="60.7" font-size="10" textLength="33.75" lengthAdjust="spacingAndGlyphs" font-style="italic">AGASC</text>
<rect x="1348.5" y="247.5" width="130" height="67" rx="2.8" fill="#fff" fill-opacity="0.8" stroke="#cccccc" stroke-width="1.11"/>
<path transform="scale(0.5)" d="M2735 521h0" stroke="#ff0000" stroke-width="7.2" stroke-linecap="round" fill="none"/>
<path transform="scale(0.5)" d="M2735 563h0" stroke="#ffa500" stroke-width="7.2" stroke-linecap="round" fill="none"/>
<path transform="scale(0.5)" d="M2735 605h0" stroke="#000" stroke-width="7.2" stroke-linecap="round" fill="none"/>
<text x="1392.4" y="264" font-size="14.3" textLength="22.65" lengthAdjust="spacingAndGlyphs">not</text>
<text x="1419.45" y="264" font-size="14.3" textLength="19.95" lengthAdjust="spacingAndGlyphs">OK</text>
<text x="1392.4" y="285" font-size="14.3" textLength="80.12" lengthAdjust="spacingAndGlyphs">Highlighted</text>
<text x="1392.4" y="306" font-size="14.3" textLength="19.88" lengthAdjust="spacingAndGlyphs">OK</text>
<g clip-path="url(#c2)">
<path transform="scale(0.5)" d="M323 1038h0m0-34h0m0 67h0m0-78h0m0-58h0m0 46h0m0 15h0m0 5h0m0-5h0m1 97h0m0-19h0m0-43h0m0-54h0m1 18h0m0 36h0m0-91h0m0 24h0m0 28h0m0 62h0m0-55h0m0-14h0m0 103h0m1-28h0m0-26h0m0 47h0m0-10h0m0 23h0m0-90h0m0 3h0m0-76h0m0 0h0m0 13h0m0 21h0m0 19h0m0 2h0m0 15h0m1-25h0m0 8h0m0 25h0m0 38h0m0 46h0m0-94h0m1-16h0m0 94h0m0-67h0m0 57h0m0-109h0m0 84h0m0 32h0m0-65h0m0 27h0m1-16h0m0-27h0m0 93h0m0-104h0m0 88h0m0-4h0m0-73h0m0-33h0m0 141h0m0-112h0m0 46h0m0 58h0m0-94h0m1 47h0m0-8h0m0 63h0m0-30h0m0-48h0m0 72h0m0-2h0m0-41h0m1-49h0m0-53h0m0 105h0m1 47h0m0-40h0m0-57h0m1 94h0m0-38h0m0-24h0m1 26h0m0-31h0m0 52h0m0-36h0m0-4h0m0 61h0m1-1h0m0 11h0m0-53h0m0 21h0m0-58h0m0-26h0m1 35h0m0 36h0m0-19h0m0 54h0m0-40h0m0 30h0m0 39h0m0-121h0m1 34h0m0 65h0m0-83h0m0 76h0m0-87h0m0 17h0m0 30h0m1-50h0m0 27h0m0-37h0m1 52h0m0 52h0m0-22h0m0-53h0m1 9h0m0 44h0m0 25h0m1-67h0m0 32h0m0-131h0m1 123h0m0 32h0m0-10h0m0-35h0m1 36h0m0-38h0m0 45h0m0-14h0m1-47h0m0 68h0m0 6h0m0-28h0m0 5h0m0 28h0m0-24h0m0 16h0m1-85h0m0 0h0m0 28h0m0 43h0m0-54h0m0-37h0m1 73h0m0 19h0m1 2h0m0-102h0m0 110h0m1-42h0m0 29h0m0 2h0m0-72h0m0 87h0m1-36h0m0-43h0m0 58h0m0-2h0m0-3h0m0 25h0m1-59h0m0-42h0m0 46h0m0-17h0m0-33h0m0 27h0m0 44h0m1-89h0m1 83h0m0-31h0m0 64h0m0-66h0m0-45h0m0 26h0m1 82h0m0-101h0m0 45h0m0 20h0m0 33h0m0-67h0m0 1h0m0 62h0m1-91h0m0 92h0m0-11h0m0-39h0m0 50h0m1-12h0m0-95h0m0 70h0m1-22h0m0 22h0m0-28h0m0 37h0m1-17h0m0 5h0m0 16h0m0-10h0m1 11h0m0-94h0m0 18h0m0-44h0m0 60h0m0 119h0m0-146h0m0 49h0m0-30h0m0 40h0m0-73h0m0 34h0m0-75h0m1 75h0m0 82h0m0-107h0m0 100h0m0-63h0m0 33h0m0 42h0m1-48h0m0-1h0m0-7h0m0 3h0m0-101h0m0 106h0m0 40h0m0-40h0m0-48h0m0 44h0m0-30h0m0 41h0m1-28h0m0 67h0m0-16h0m0-79h0m1 10h0m0 45h0m0-56h0m0 62h0m0-67h0m0-63h0m0 71h0m0 8h0m0 72h0m1-97h0m0 31h0m0 83h0m0-167h0m0 135h0m1-44h0m0 116h0m0-139h0m0-9h0m0 1h0m0 53h0m0-35h0m0-18h0m0 69h0m0 1h0m0-68h0m1 49h0m0 52h0m0-26h0m0-71h0m0 37h0m0-54h0m0 26h0m0 4h0m0 41h0m0 49h0m0-148h0m1 30h0m0 99h0m0-91h0m0 18h0m0 91h0m1-61h0m0 103h0m0-188h0m0 50h0m0 38h0m0 67h0m0-119h0m0-3h0m0 16h0m0-17h0m0 25h0m0-3h0m0 4h0m1-1h0m0-85h0m0 64h0m0 79h0m0 30h0m0-89h0m0 49h0m1-51h0m0 59h0m0 0h0m0-95h0m1 26h0m0 94h0m0-147h0m0 20h0m0-23h0m0 118h0m0 11h0m1-19h0m0 43h0m0-53h0m0 58h0m1-44h0m0 24h0m0-13h0m0-2h0m0 25h0m1-28h0m0-12h0m0-13h0m0 41h0m0-67h0m1 57h0m0-19h0m0-40h0m0 82h0m1-6h0m0-25h0m0-11h0m0-24h0m0 76h0m0 1h0m0-74h0m1 73h0m0-45h0m0 0h0m1 13h0m0-45h0m0 53h0m0 41h0m0-123h0m1 118h0m0-101h0m0 141h0m0-113h0m0 19h0m0 36h0m1 23h0m0-68h0m0 26h0m0 35h0m0-14h0m0-41h0m1 58h0m0-22h0m0-66h0m0 90h0m1-46h0m0 28h0m0-56h0m0 19h0m0 39h0m1-61h0m0 80h0m0-41h0m0-18h0m0-6h0m1 25h0m0-39h0m0-6h0m0 55h0m0 11h0m0 8h0m1-31h0m0-10h0m1-37h0m0 6h0m0 26h0m0-15h0m0-6h0m0 59h0m0-61h0m0-39h0m0 120h0m1-9h0m0-14h0m0 17h0m0-109h0m0 35h0m0 5h0m0 65h0m0-88h0m1 105h0m0-54h0m0-21h0m1 66h0m0-52h0m1-13h0m0 50h0m0-58h0m0 28h0m0-26h0m0 69h0m0-37h0m0-47h0m0 31h0m0 47h0m1-32h0m0-4h0m0 18h0m0-83h0m0 37h0m1-36h0m0-2h0m0 101h0m0-60h0m0 5h0m1-16h0m0 70h0m0-30h0m0 29h0m0-92h0m1 34h0m0 10h0m0 39h0m0-57h0m0 2h0m0 25h0m1 30h0m0-80h0m0 15h0m0 4h0m1 16h0m0 47h0m0-24h0m0-28h0m0 0h0m0 2h0m0 19h0m0 33h0m1-89h0m0 68h0m0-37h0m0-16h0m0 70h0m0-77h0m1 21h0m0-23h0m0 45h0m0-14h0m0 2h0m0-4h0m0-1h0m1 11h0m0-46h0m0 40h0m0 27h0m0-14h0m0 7h0m0-15h0m0 7h0m1 17h0m0-30h0m0-20h0m0 0h0m1 3h0m0-46h0m0 22h0m1 26h0m0-25h0m0 46h0m1 9h0m0-135h0m0 46h0m0-47h0m0 31h0m0 94h0m0-8h0m0-11h0m0 25h0m0-54h0m0-57h0m0 131h0m0-153h0m1 108h0m0 31h0m0-60h0m0 4h0m0 0h0m0 30h0m0 1h0m0-31h0m1 13h0m0-71h0m0 99h0m0 21h0m0-65h0m0-11h0m1-49h0m0 79h0m0-84h0m0 24h0m0 14h0m0 25h0m0-10h0m0 54h0m0-114h0m0 96h0m1 13h0m0-24h0m0-14h0m0 22h0m1-66h0m0 7h0m0 86h0m0-37h0m0 29h0m0 7h0m0-107h0m0-19h0m0 127h0m0-46h0m1 69h0m0-88h0m0 66h0m0 32h0m0 5h0m0-114h0m0 104h0m0-59h0m0-75h0m0-13h0m0 90h0m1-37h0m0-22h0m0 107h0m0-70h0m0-12h0m0 57h0m0-19h0m0 12h0m0 24h0m1-12h0m0 10h0m0-33h0m0-22h0m1 51h0m0-52h0m0-8h0m0-45h0m0 144h0m1-106h0m0-12h0m0 61h0m0-55h0m0 17h0m0-26h0m0 57h0m0-27h0m1 30h0m0 41h0m0-11h0m0-51h0m0-64h0m0 207h0m0-152h0m0 1h0m0 71h0m0 27h0m1-76h0m0 3h0m0 61h0m0-164h0m0 77h0m0-68h0m0 159h0m0-36h0m0-121h0m0 115h0m0 56h0m0-55h0m0-34h0m0 24h0m0-12h0m1-10h0m0-19h0m0-46h0m0 90h0m0-6h0m0 3h0m0 38h0m0-82h0m0 93h0m0-4h0m0-1h0m0 17h0m0 54h0m1-122h0m0-73h0m0 130h0m0-95h0m0 12h0m0 37h0m0-5h0m0-115h0m0 78h0m0-23h0m1 90h0m0-52h0m0 32h0m0 42h0m0-31h0m0 37h0m0-58h0m1-103h0m0 25h0m0 40h0m0-6h0m0 5h0m0 28h0m0-59h0m0 85h0m0 34h0m0-100h0m0 56h0m0 47h0m0-98h0m0-55h0m0 70h0m1 58h0m0-28h0m1 66h0m0-102h0m0 93h0m0-5h0m0 11h0m1-94h0m0 33h0m0 14h0m0-2h0m0 50h0m0-43h0m0-39h0m1 94h0m0-25h0m0 45h0m1-85h0m0 46h0m0-58h0m0-24h0m0 93h0m0-61h0m1 29h0m0-29h0m0 26h0m0 32h0m0-65h0m0-40h0m0 94h0m0-66h0m0 56h0m0-10h0m1-64h0m0 24h0m0 59h0m0-63h0m0 92h0m0-71h0m0-43h0m0 65h0m0 46h0m0-73h0m0-21h0m1 29h0m0 47h0m0-56h0m0 27h0m0 1h0m0 40h0m0-11h0m0-67h0m1-31h0m0 45h0m1 40h0m0 22h0m0-78h0m0 61h0m0 22h0m0-57h0m0-4h0m1-1h0m0 47h0m0-84h0m0 99h0m0-23h0m0-30h0m1 7h0m0-40h0m0 22h0m0 18h0m0 22h0m0-44h0m0-78h0m0 64h0m0 6h0m0 50h0m0-27h0m0 53h0m1-7h0m0-96h0m0 74h0m0-60h0m0 79h0m1-88h0m0 38h0m0 1h0m0 29h0m0-65h0m0 13h0m1 21h0m0-27h0m0 18h0m0 0h0m0-18h0m1 72h0m0-60h0m0 20h0m0 32h0m0 0h0m1-85h0m0 77h0m0 38h0m0-49h0m0-44h0m0 36h0m1-61h0m0 92h0m0-51h0m0-1h0m1 27h0m0-31h0m0-27h0m0 0h0m1 35h0m0 23h0m0-64h0m0 63h0m0-36h0m0 11h0m1-47h0m0 59h0m0-54h0m0-15h0m0-4h0m1 7h0m0 13h0m0-69h0m0 67h0m0 9h0m0 34h0m0 15h0m0-7h0m1-51h0m0-2h0m0-39h0m0 99h0m0-124h0m0 76h0m0-32h0m0-49h0m0 85h0m0-36h0m1 62h0m0 3h0m0-49h0m0 64h0m0-64h0m0 16h0m0 21h0m0 12h0m0-21h0m0 29h0m1 30h0m0-24h0m0 27h0m0-35h0m0-42h0m0 46h0m1-58h0m0 59h0m0 21h0m0-111h0m0-18h0m0 68h0m0-78h0m0 115h0m0 1h0m0-61h0m0 34h0m1 43h0m0-68h0m0 77h0m0-18h0m0 17h0m0-21h0m0 3h0m0-40h0m0 38h0m0-94h0m0 91h0m0-10h0m0-72h0m1 104h0m0-56h0m0 12h0m0-71h0m1 95h0m0-53h0m0 17h0m0 25h0m0-47h0m0-10h0m0 58h0m0-42h0m1-21h0m0 109h0m0-10h0m0-147h0m0 117h0m1-70h0m0 53h0m0-45h0m0 60h0m0-21h0m0 69h0m0-77h0m0-20h0m1 47h0m0-2h0m0 47h0m1-64h0m0 30h0m0-46h0m0 38h0m1 9h0m0 12h0m0-20h0m0-29h0m0 58h0m1-74h0m0 22h0m0-12h0m0 70h0m0-27h0m0-10h0m0-5h0m0 20h0m1-11h0m0-48h0m0 40h0m1 50h0m0-49h0m0 39h0m0-64h0m0-34h0m0 67h0m0-34h0m1 20h0m1 70h0m0-78h0m0 22h0m0-25h0m0 56h0m0 6h0m0-83h0m1 99h0m0-13h0m0 15h0m1-65h0m0 67h0m0-82h0m0 59h0m0-12h0m0 31h0m1-48h0m0-57h0m0 35h0m0 71h0m0-19h0m0 0h0m1-89h0m0 48h0m0 69h0m0-12h0m0-93h0m0-25h0m0 61h0m0-51h0m0 48h0m0 14h0m1-34h0m0 73h0m0-16h0m0-41h0m0 1h0m0 10h0m0-14h0m0-5h0m0 55h0m0 3h0m1-36h0m0-63h0m0 62h0m0-83h0m0 72h0m0-62h0m0 146h0m0-37h0m0 32h0m1-130h0m0 29h0m0 22h0m0 56h0m0-166h0m0 77h0m0 63h0m0-11h0m0-66h0m0 66h0m0-43h0m0 47h0m1 29h0m0-19h0m0-137h0m0 150h0m0 4h0m0-80h0m0-56h0m1 63h0m0 50h0m0 23h0m0-49h0m0 48h0m0-32h0m0 26h0m0-56h0m0 17h0m0-64h0m1 82h0m0-26h0m0 11h0m0-48h0m0-8h0m0 38h0m0-43h0m0 99h0m0 46h0m0-135h0m0 99h0m0-38h0m0-20h0m0-97h0m0 6h0m1 59h0m0 122h0m0-144h0m0 68h0m0 111h0m0-112h0m0-22h0m0-33h0m0-30h0m0-5h0m0 158h0m1-22h0m0-47h0m0-120h0m0 163h0m0-137h0m0 118h0m0 33h0m0-10h0m0 17h0m0-94h0m0 28h0m1 55h0m0-96h0m0 98h0m0-94h0m0 77h0m0 35h0m0-129h0m0 138h0m0-78h0m0 60h0m1-44h0m0-1h0m0-75h0m0 74h0m0 50h0m0-111h0m0 63h0m0-14h0m1-29h0m0 23h0m0-10h0m0 60h0m0 11h0m0-107h0m0 101h0m0-80h0m0 111h0m0 0h0m0-53h0m1-73h0m0 108h0m0-93h0m0 46h0m0 64h0m0-90h0m0 45h0m0-30h0m0 44h0m0-35h0m0 49h0m1-7h0m0-20h0m0-37h0m0 83h0m0-74h0m0-19h0m0-11h0m1 89h0m0-59h0m0-21h0m0 45h0m0 38h0m0 6h0m0-81h0m0-6h0m0-3h0m0 90h0m1-9h0m0-91h0m0 97h0m0-118h0m0 86h0m0-56h0m0 87h0m0-37h0m0-31h0m0 4h0m0 18h0m0 3h0m1 34h0m0 18h0m0-18h0m0-118h0m0 140h0m0-66h0m0-77h0m0 106h0m0-29h0m0 15h0m0-34h0m1 84h0m0-74h0m0-34h0m0 10h0m0-17h0m0-5h0m0 98h0m0 12h0m0-88h0m0 68h0m1-60h0m0-28h0m0 121h0m0-92h0m0 25h0m0-12h0m0-25h0m0-29h0m0 88h0m0 21h0m1-67h0m0 42h0m0-47h0m0-15h0m0 66h0m0 8h0m0 24h0m0-4h0m0-95h0m0 77h0m1 20h0m0-29h0m0-12h0m0 0h0m1 42h0m0 2h0m0-70h0m0 28h0m0-23h0m0 23h0m0 39h0m0-80h0m1 62h0m0-19h0m0-45h0m0-34h0m0-13h0m0 65h0m0-52h0m0-4h0m0 3h0m1 32h0m0 26h0m0 21h0m0 45h0m0-25h0m0-76h0m0 73h0m1-12h0m0 34h0m0-84h0m0 80h0m0-45h0m0 23h0m1 12h0m0-45h0m0 63h0m0-87h0m0 28h0m0 30h0m0 27h0m1-105h0m0 41h0m0-29h0m0 41h0m0-13h0m0-17h0m0 87h0m0-74h0m1-21h0m0 71h0m0 22h0m0-62h0m0-76h0m0 131h0m0-56h0m0 49h0m0-75h0m0 49h0m1 14h0m0-105h0m0-7h0m0 128h0m0-122h0m0 30h0m0 103h0m1-19h0m0-32h0m0-35h0m0 85h0m1-118h0m0-8h0m0 81h0m0 41h0m0-122h0m0 55h0m1 53h0m0-24h0m0-1h0m0-4h0m0 19h0m0-74h0m0-12h0m0 144h0m0-113h0m0 25h0m0 14h0m0-24h0m1-38h0m0-2h0m0 5h0m0 58h0m1 3h0m0 4h0m0-61h0m0-29h0m0-10h0m0 81h0m1 28h0m0-13h0m0-54h0m0 72h0m0-80h0m0 62h0m0-70h0m0-18h0m1 72h0m0 27h0m0-3h0m0-67h0m0-31h0m1 92h0m0 8h0m0-39h0m0-26h0m0 28h0m1-34h0m0-102h0m0 88h0m0-20h0m0 95h0m0-158h0m0 177h0m0-40h0m0 23h0m1-17h0m0-130h0m0 158h0m0-32h0m0-119h0m0 116h0m0 40h0m0-77h0m1 6h0m0 26h0m0-145h0m0 76h0m0 20h0m0-80h0m0 157h0m0-171h0m0 2h0m0 106h0m0 62h0m0 8h0m0-94h0m0 59h0m1 25h0m0-97h0m0 113h0m0-64h0m0-41h0m0 27h0m0-21h0m1 83h0m0-91h0m0-12h0m0 51h0m0 49h0m0-92h0m0 95h0m0-151h0m0 81h0m0 3h0m0-48h0m1 15h0m0-40h0m0 104h0m0-13h0m0-8h0m0 25h0m1 13h0m0-149h0m0 121h0m0-72h0m0 44h0m0 75h0m0-153h0m0 100h0m0-64h0m0-48h0m0 21h0m1-16h0m0 138h0m0 7h0m0 17h0m0-48h0m1-54h0m0 8h0m0 76h0m0-108h0m0 151h0m0-120h0m1-1h0m0 65h0m0-65h0m0-71h0m1 156h0m0-21h0m0 3h0m0-81h0m0 68h0m0-59h0m0 71h0m0-101h0m1 100h0m0 7h0m0-97h0m0 73h0m0 51h0m0-166h0m0 131h0m1-97h0m0 95h0m0-99h0m0 84h0m0 34h0m0-89h0m0 73h0m0-106h0m0 99h0m0-106h0m0 47h0m1-9h0m0 65h0m0 19h0m0-94h0m0 98h0m0 7h0m0-4h0m0-80h0m1 31h0m0 9h0m0 39h0m0-95h0m0 69h0m0 7h0m0-127h0m0 58h0m0 40h0m0-110h0m1 137h0m0 8h0m0-84h0m0 68h0m0-3h0m0-45h0m0-36h0m0 23h0m0 29h0m0 38h0m0 0h0m0 10h0m0 8h0m1-44h0m0 28h0m0-58h0m0 56h0m0 9h0m0-93h0m0 47h0m1-67h0m0 5h0m0 32h0m0 3h0m1 60h0m0-3h0m0 23h0m0-95h0m1 88h0m0 9h0m0-13h0m0-18h0m0-102h0m0 168h0m0-46h0m0-51h0m0-64h0m0 99h0m1-90h0m0 104h0m0-17h0m0 2h0m0-125h0m1 125h0m0-68h0m0 20h0m0-58h0m0 51h0m0 83h0m0 15h0m0-29h0m0-94h0m0 125h0m0-64h0m1-24h0m0-64h0m0 35h0m0 97h0m0-70h0m0 87h0m0-52h0m0 60h0m0-134h0m0 41h0m1 94h0m0-40h0m0 4h0m0-40h0m1 46h0m0-8h0m0-46h0m0 26h0m0 56h0m0 8h0m1-72h0m0-33h0m0 43h0m0 44h0m0 9h0m0-96h0m0 74h0m0-46h0m1 69h0m0-1h0m0-67h0m0 2h0m0 35h0m1 46h0m0-71h0m0 44h0m0-26h0m0-12h0m0 21h0m1 68h0m0-42h0m0-76h0m0 42h0m1 20h0m0 24h0m0-77h0m0-17h0m0 43h0m0-43h0m0 110h0m1-83h0m0 51h0m0-72h0m0 81h0m0-59h0m0 11h0m0-4h0m0-28h0m0 94h0m0-39h0m0-39h0m0 78h0m0-34h0m1-69h0m0 39h0m0 6h0m0 62h0m0-75h0m0-29h0m0 110h0m1-43h0m0-10h0m0 58h0m1 8h0m0-17h0m0-102h0m0 77h0m0 29h0m0-60h0m0-41h0m0 83h0m0-43h0m1-10h0m0 113h0m0-102h0m0-27h0m0 92h0m0-11h0m0-6h0m0-92h0m0-57h0m1 165h0m0-4h0m1 0h0m0-79h0m0-8h0m0 2h0m0-13h0m0 24h0m0 58h0m1-80h0m0 51h0m0-55h0m1 16h0m0 58h0m0 61h0m0-79h0m0-17h0m0 2h0m0 47h0m1-95h0m0 57h0m0 78h0m0-145h0m0 95h0m0-97h0m0 88h0m0-12h0m0-44h0m0 121h0m1-134h0m0 7h0m0-2h0m0 18h0m0 72h0m0-1h0m1-32h0m0-10h0m0-33h0m0 57h0m0-58h0m0-25h0m0 4h0m1 24h0m0 39h0m0-39h0m0 24h0m0-72h0m0 14h0m0 66h0m1-72h0m0 96h0m0-82h0m0-28h0m0-23h0m0 5h0m0-54h0m0 88h0m0-3h0m0 43h0m0-23h0m0-93h0m1 122h0m0-70h0m0 90h0m0 8h0m0-13h0m0-65h0m0-13h0m0 18h0m0-77h0m1 45h0m0 120h0m0 14h0m0-109h0m0 41h0m0 58h0m0-94h0m0 31h0m1 23h0m0-14h0m0-100h0m0 152h0m0-153h0m0 62h0m0 90h0m0-127h0m0-13h0m0 116h0m0 17h0m0-117h0m0 94h0m0-98h0m0 122h0m0-87h0m0-19h0m1 62h0m0 27h0m0-65h0m0-17h0m0 16h0m0 41h0m0-110h0m0 27h0m0 88h0m1-46h0m0 80h0m0-120h0m0 69h0m0-46h0m0 70h0m0-118h0m0 141h0m0-23h0m0 11h0m1-59h0m0-54h0m0 96h0m0-52h0m0 10h0m0 51h0m0-121h0m0 39h0m1 117h0m0-42h0m0-112h0m0 141h0m0-103h0m0 74h0m1-54h0m0-43h0m0 115h0m0-79h0m0-31h0m0 11h0m0 49h0m1 24h0m0-98h0m0 119h0m0 27h0m0-40h0m0 4h0m0-12h0m1-32h0m0 78h0m0-27h0m0 11h0m0 5h0m0-7h0m1-75h0m0 5h0m0 67h0m0 26h0m0-59h0m0-3h0m0 44h0m0-13h0m0-38h0m1 1h0m0 65h0m0-25h0m0-6h0m0 30h0m1 22h0m0-91h0m0 34h0m0-15h0m0-34h0m0 70h0m1 20h0m0-60h0m0 0h0m0 0h0m0 88h0m0-73h0m0-17h0m0-8h0m0 72h0m0-95h0m1-8h0m0 26h0m0 27h0m0-29h0m1 1h0m0 29h0m0 52h0m0-2h0m0 20h0m1-53h0m0-6h0m0 32h0m0 3h0m0-46h0m1 42h0m0-32h0m0 15h0m0 26h0m0-50h0m0 32h0m0-30h0m1 34h0m0-1h0m0 3h0m0-47h0m0 3h0m1 63h0m0-52h0m0-18h0m0 115h0m1-124h0m0 47h0m0 18h0m1-49h0m0-3h0m0 61h0m0-53h0m0-15h0m0 29h0m1 26h0m0 4h0m0-27h0m0-21h0m0 49h0m1-69h0m0 120h0m0-77h0m0 2h0m0 22h0m0-78h0m0 80h0m0-70h0m1 12h0m0 12h0m0 40h0m0-100h0m1 10h0m0 0h0m0 76h0m0-50h0m0 52h0m1-62h0m0 35h0m0-36h0m0 36h0m1-17h0m0 22h0m0-31h0m0 66h0m0-53h0m1 23h0m0-13h0m0-54h0m0 70h0m0-63h0m0 19h0m0 35h0m1 34h0m0-16h0m0-116h0m0 75h0m0 41h0m0-21h0m1 32h0m0-115h0m0-29h0m0 64h0m0 61h0m0-13h0m0 72h0m0-170h0m1 98h0m0 34h0m0-82h0m0 91h0m0-154h0m0 132h0m0-25h0m1 12h0m0 6h0m0-118h0m0 52h0m0 58h0m0-15h0m0-49h0m0 51h0m1 46h0m0-109h0m0 85h0m0-76h0m0 18h0m0 40h0m0-7h0m0-70h0m0 121h0m0-33h0m0-110h0m0 64h0m1 44h0m0-6h0m0-49h0m0 21h0m1-73h0m0 99h0m0 45h0m0 1h0m0-5h0m0-107h0m0 55h0m0-28h0m0 19h0m0 26h0m0 38h0m0-120h0m0 57h0m0-27h0m0 44h0m1 35h0m0-34h0m0-9h0m0 7h0m0-31h0m0 25h0m0-65h0m0 100h0m0-108h0m0 59h0m0 40h0m0-2h0m1-20h0m0 4h0m0 19h0m0 26h0m0-59h0m1-14h0m0-15h0m0 0h0m1 32h0m0 34h0m0-26h0m1-37h0m0 37h0m0 42h0m0-25h0m0-3h0m0-23h0m0-17h0m1 84h0m0-48h0m0 50h0m0-99h0m0 22h0m1-80h0m0 59h0m0 83h0m0-93h0m0 101h0m0-73h0m0 2h0m1 85h0m0-61h0m0-1h0m0-10h0m0-27h0m0 7h0m0 21h0m0 50h0m0-57h0m0 12h0m0 10h0m1-25h0m0-22h0m0 22h0m0 13h0m0-3h0m1-5h0m0 59h0m0-37h0m0 3h0m0 12h0m0-45h0m0 28h0m1-39h0m0 37h0m0 70h0m0-33h0m0-87h0m0 43h0m0 16h0m0-38h0m1-21h0m0 106h0m0-162h0m0 98h0m0-37h0m0 10h0m0 68h0m0-106h0m0 130h0m0-44h0m1-74h0m0 8h0m0 38h0m0 10h0m0-14h0m0-37h0m0 6h0m1-56h0m0 119h0m0 19h0m0-69h0m0 0h0m0 48h0m0-23h0m0 54h0m0-76h0m1-44h0m0 24h0m0-4h0m0-43h0m0 123h0m0-76h0m0 64h0m0-111h0m0 97h0m1-1h0m0 57h0m0-43h0m0-30h0m0-34h0m0 90h0m0-85h0m0-21h0m1 40h0m0 62h0m0 24h0m0-100h0m0 43h0m0-34h0m0 82h0m0-114h0m0 19h0m1 36h0m0 5h0m0-74h0m0 27h0m0-49h0m0 154h0m0-36h0m1 42h0m0-19h0m0-22h0m0 41h0m0 10h0m0-33h0m0-141h0m0 59h0m0 99h0m0-161h0m0 14h0m0 106h0m1-15h0m0-1h0m0-54h0m0 51h0m0-98h0m0 58h0m0-2h0m0 50h0m0 24h0m1-21h0m0 24h0m0-37h0m0 29h0m0 38h0m0-156h0m0 163h0m0 4h0m0-134h0m1 14h0m0 57h0m0-33h0m0 79h0m0-103h0m0 133h0m0-150h0m0 15h0m0 96h0m0-21h0m0 7h0m0-20h0m0-59h0m1 57h0m0 57h0m1-5h0m0-106h0m0 117h0m0-110h0m0 80h0m0-48h0m0-30h0m0 34h0m0-42h0m0 82h0m1 25h0m0-35h0m0-73h0m0 99h0m0-93h0m0 33h0m0-74h0m0 160h0m1-59h0m0 34h0m0-106h0m0 110h0m0-74h0m0 71h0m0 6h0m0-60h0m0 50h0m0-57h0m0 2h0m0 34h0m1 10h0m0-53h0m0-35h0m0 86h0m1 26h0m0-34h0m0 32h0m0-76h0m0-5h0m0 45h0m0-4h0m1-39h0m0 60h0m0 16h0m0-12h0m0-87h0m1 63h0m0 3h0m0-64h0m0 70h0m0-5h0m0 15h0m0-29h0m0 38h0m0-66h0m0 14h0m0-16h0m0 30h0m0-4h0m1 45h0m0-72h0m0 64h0m1-17h0m0-124h0m0 93h0m0 28h0m0-52h0m1 15h0m0-26h0m0 57h0m0-12h0m0-10h0m1 37h0m0 16h0m0-101h0m0 22h0m0-70h0m0 175h0m0-143h0m0 92h0m1-60h0m0 78h0m0 1h0m0-26h0m0 19h0m0-24h0m0-51h0m0 63h0m0-61h0m1 37h0m0-90h0m0 78h0m0-25h0m0 28h0m0-38h0m0 51h0m0-15h0m0-117h0m1 136h0m0-14h0m0 13h0m0-36h0m0-33h0m0 90h0m1-113h0m0 99h0m1-3h0m0 44h0m0 24h0m0-174h0m0 119h0m0-10h0m0-103h0m0 109h0m0-73h0m0-1h0m1 43h0m0-56h0m0 40h0m0 60h0m0-24h0m0-11h0m0 17h0m0-1h0m0-69h0m0 6h0m0 0h0m0 18h0m0-18h0m0-27h0m0-22h0m0 83h0m0-40h0m1 5h0m0 38h0m0-6h0m0-3h0m0 14h0m0-50h0m0 81h0m0 7h0m0 7h0m1 2h0m0-110h0m0-39h0m0 117h0m0 36h0m0-20h0m0-26h0m0-127h0m0 131h0m0 74h0m0-140h0m0 11h0m0 67h0m0 31h0m1-61h0m0 53h0m0-85h0m0 97h0m0-86h0m0-33h0m0 61h0m0-88h0m0 26h0m0-30h0m0 112h0m0 22h0m1-9h0m0 0h0m0-79h0m0-8h0m0 74h0m0-67h0m0 6h0m1 63h0m0-78h0m0 82h0m0-28h0m0-79h0m1 144h0m0-106h0m0-21h0m0 61h0m0 10h0m0-88h0m0 110h0m0-73h0m0-30h0m0 133h0m0-174h0m0 126h0m1 13h0m0-51h0m0 97h0m0-4h0m0-104h0m0 56h0m1 53h0m0-63h0m0-6h0m0-11h0m0 15h0m0-1h0m0 6h0m0-7h0m0-46h0m0 146h0m0-101h0m0 20h0m0-38h0m1 38h0m0 25h0m0-78h0m0 47h0m0-59h0m0 85h0m1 32h0m0-63h0m0-23h0m0 42h0m0 89h0m0-112h0m0-25h0m0 65h0m1-47h0m0-35h0m0 22h0m0 36h0m0-2h0m0-21h0m0-40h0m0 94h0m0-85h0m0 82h0m0-52h0m0-25h0m0 24h0m1 9h0m0-42h0m0 112h0m0-62h0m0 43h0m0-17h0m0-125h0m0 80h0m0 24h0m1 41h0m0-150h0m0 81h0m0 13h0m0-2h0m0 58h0m0-17h0m1-2h0m0-63h0m0 99h0m0-72h0m0 29h0m1-61h0m0 26h0m0 7h0m0 35h0m0-68h0m0 29h0m0 55h0m1-56h0m0-31h0m0 90h0m0-3h0m0-34h0m0-12h0m0-11h0m0 4h0m1-39h0m0 42h0m0-54h0m0 14h0m0 0h0m0 0h0m1 34h0m0-3h0m0 12h0m0-32h0m0 76h0m1-93h0m0-5h0m0 54h0m0-3h0m0 40h0m1 17h0m0-42h0m0 17h0m0-3h0m0-18h0m0-5h0m0-4h0m1-36h0m0 79h0m1-33h0m0-65h0m0 93h0m0-81h0m0 32h0m0 1h0m0 10h0m1-34h0m0 52h0m0-74h0m0 95h0m1-125h0m0-11h0m0 97h0m0-55h0m1 84h0m0-31h0m0 20h0m0-110h0m0 115h0m0-128h0m0 129h0m0-134h0m0 57h0m0-62h0m0 36h0m0 87h0m0-2h0m0-37h0m0-8h0m0 11h0m1-98h0m0 108h0m0 22h0m0-57h0m0 38h0m0-81h0m0-20h0m0 126h0m1-65h0m0-19h0m0-32h0m0 55h0m0 43h0m0-50h0m1-20h0m0 34h0m0-17h0m0 26h0m0 29h0m0-49h0m0-74h0m1 128h0m0-19h0m0-94h0m0 63h0m0-29h0m0 72h0m0 2h0m0-49h0m0-40h0m0 84h0m0-25h0m1-4h0m0-17h0m0 46h0m0-27h0m0 11h0m0-26h0m0 0h0m0 31h0m0-19h0m1-40h0m0 140h0m0-92h0m0-8h0m0-8h0m0 9h0m0-86h0m0 6h0m1 137h0m0-83h0m0 15h0m0-3h0m0 28h0m1 41h0m0-12h0m0 27h0m1-46h0m0-102h0m0 90h0m0-28h0m0-6h0m0 39h0m0 49h0m0-29h0m0 15h0m0 18h0m0-92h0m0 64h0m0-79h0m0 4h0m0 56h0m0 17h0m1 1h0m0 10h0m0-76h0m0 26h0m0 39h0m0 44h0m0-11h0m0-59h0m0-49h0m0 101h0m0-136h0m0 82h0m0-24h0m1 42h0m0-2h0m0 6h0m0-47h0m0-77h0m0 141h0m0-40h0m0 62h0m1-44h0m0-7h0m0-19h0m0 17h0m0 0h0m0 7h0m0-33h0m1 26h0m0 54h0m0-56h0m0 69h0m0-69h0m0-7h0m0 42h0m1-21h0m0 48h0m0-59h0m0 57h0m0-72h0m0 39h0m0-33h0m0 13h0m1 18h0m0-31h0m0 12h0m0 62h0m0-45h0m0-30h0m0 74h0m0-66h0m0 74h0m0-48h0m0 66h0m1-25h0m0-99h0m0 107h0m0-59h0m0 10h0m0 5h0m0 62h0m1-106h0m0 3h0m0-4h0m0 97h0m0 13h0m0-31h0m0-93h0m0 64h0m0-14h0m0 38h0m1-51h0m0 49h0m0-47h0m0 50h0m0-35h0m0 5h0m0 24h0m0 25h0m0-75h0m0 29h0m1 17h0m0-50h0m0 12h0m0-4h0m0 57h0m0-78h0m0 26h0m0 50h0m0-49h0m0-4h0m0 57h0m1-75h0m0-15h0m0 9h0m0 70h0m0 25h0m0-96h0m1-71h0m0 81h0m0 87h0m0-109h0m0 64h0m0-19h0m0-64h0m0 67h0m0-139h0m0 216h0m0-93h0m0-45h0m0 73h0m0-121h0m0-1h0m0 73h0m0 11h0m1 1h0m0-8h0m0 11h0m0-31h0m0 77h0m0-70h0m0 73h0m0-133h0m0 51h0m0-71h0m0 128h0m0-101h0m0 118h0m0-31h0m0-40h0m1 59h0m0-32h0m0 23h0m0-124h0m0 48h0m0 82h0m0-3h0m0-10h0m0 64h0m0-28h0m0-115h0m0 32h0m0 41h0m0 24h0m0-110h0m1 48h0m0 82h0m0-85h0m0 64h0m0-23h0m0 3h0m0-40h0m0 65h0m0-64h0m0 67h0m0-24h0m0 30h0m0-117h0m0 34h0m1 2h0m0 54h0m0-59h0m0-38h0m0 116h0m0 4h0m0-4h0m0-57h0m0 46h0m0 8h0m0-144h0m0 153h0m1 3h0m0-77h0m0 72h0m0-142h0m0 4h0m0 80h0m0-68h0m0 85h0m0 89h0m0-76h0m1 17h0m0-58h0m0-4h0m0 24h0m0 38h0m0-15h0m0-81h0m0 83h0m1-18h0m0-26h0m0 54h0m0-9h0m0-74h0m1 75h0m0 15h0m0-106h0m0 118h0m0-34h0m0 58h0m0-28h0m0-52h0m0 77h0m1-52h0m0 38h0m0-58h0m0-2h0m0 24h0m0-11h0m0-15h0m0 37h0m0 36h0m0-86h0m0-53h0m0 137h0m0-52h0m0 7h0m1 50h0m0-103h0m0-70h0m0 69h0m0 46h0m0-1h0m0-1h0m0 51h0m0-47h0m0-61h0m0 18h0m0 79h0m0-42h0m0 38h0m0-35h0m1 15h0m0-30h0m0-26h0m0 46h0m1 50h0m0-61h0m0 5h0m0-44h0m1 47h0m0-20h0m0 11h0m0-10h0m0 4h0m0 48h0m0 8h0m1-40h0m0-40h0m0 48h0m0 7h0m0 31h0m1-67h0m0 34h0m0 1h0m0 1h0m0 33h0m1 34h0m0-26h0m0-3h0m0-14h0m0 15h0m0-77h0m0 95h0m1-62h0m0 71h0m1-6h0m0-86h0m0 88h0m0-52h0m0 27h0m1-41h0m0 54h0m0 10h0m0-4h0m0-83h0m0 32h0m0 47h0m0-64h0m0 37h0m1 12h0m0 35h0m0-69h0m0 5h0m0 24h0m0 36h0m0 10h0m0-48h0m0-1h0m0 8h0m0-34h0m1-15h0m0-13h0m0 53h0m0-50h0m0-9h0m0 84h0m0-146h0m1 67h0m0 62h0m0 36h0m0-76h0m1 86h0m0-98h0m0 25h0m0 36h0m0 29h0m0-80h0m1-17h0m0-20h0m0 79h0m0-4h0m0-44h0m0 45h0m1-44h0m0 44h0m0-56h0m0 84h0m0-26h0m1 43h0m0-79h0m0 34h0m0-14h0m0-10h0m0-62h0m0 67h0m0 34h0m0-80h0m0 78h0m1 9h0m0-64h0m0-1h0m0-26h0m0 76h0m0 13h0m0 9h0m0-62h0m0 18h0m0-74h0m1 16h0m0 26h0m0 71h0m0-115h0m0 3h0m0 96h0m1-58h0m0-22h0m0 41h0m0 26h0m0 12h0m0-68h0m0-3h0m0 69h0m0 0h0m0 16h0m0-164h0m1 53h0m0 81h0m0-36h0m0 13h0m0-3h0m0-65h0m1 1h0m0-40h0m0-1h0m0 65h0m0-15h0m0-59h0m0 113h0m1-51h0m0 0h0m0 92h0m0-34h0m0 0h0m0-33h0m0 53h0m0-28h0m0-102h0m0 63h0m0-48h0m0 27h0m1-11h0m0 9h0m0 67h0m0-34h0m0-21h0m0 0h0m0-66h0m0-18h0m0 160h0m0-14h0m1-111h0m0-4h0m0 80h0m0 22h0m0 12h0m0-7h0m0-55h0m0-25h0m0 20h0m0-3h0m0 80h0m0-57h0m0 67h0m1-162h0m0 123h0m0-122h0m0 105h0m0-9h0m0-18h0m0 44h0m0-71h0m0 67h0m0-37h0m1 36h0m0 32h0m0-62h0m0-80h0m0 70h0m0 33h0m0-30h0m0 82h0m0-151h0m0 111h0m0-78h0m1 88h0m0-117h0m0 60h0m0 94h0m0-2h0m1-107h0m0 117h0m0-5h0m0-36h0m0-13h0m0 25h0m0-15h0m0-8h0m1-13h0m0-30h0m0 22h0m0 71h0m0-4h0m0-38h0m1-10h0m0-46h0m0-11h0m0 50h0m0-6h0m0-7h0m0 67h0m0-21h0m1 45h0m0-85h0m0-8h0m0 91h0m0 13h0m0-67h0m1-39h0m0 9h0m0 30h0m0-37h0m0-1h0m0 63h0m0 16h0m0-83h0m0 64h0m1-20h0m0-58h0m0-4h0m0 33h0m0-3h0m0 27h0m0-18h0m0-29h0m1 118h0m0-37h0m0 16h0m0-78h0m0 62h0m1-57h0m0 37h0m0-70h0m0 76h0m0-55h0m0 34h0m0-11h0m0-7h0m0 53h0m0-84h0m0 2h0m1 33h0m0 24h0m0-17h0m0-28h0m0 94h0m0-92h0m0-4h0m0 14h0m0 79h0m0-65h0m0-26h0m0 84h0m0-63h0m0-16h0m0-36h0m1 48h0m0 4h0m0 57h0m0-78h0m0 60h0m0-18h0m0-58h0m0 102h0m0-42h0m0-51h0m0-13h0m0 97h0m0-1h0m1 3h0m0-71h0m0 7h0m0 15h0m0 37h0m0 35h0m0-10h0m0-83h0m0 60h0m0-52h0m0 11h0m0-23h0m1 4h0m0 1h0m0 32h0m0 28h0m1-48h0m0 49h0m0-21h0m0-41h0m0-12h0m1-65h0m0 39h0m0 43h0m0-61h0m0 27h0m0 78h0m0-72h0m0 23h0m0 11h0m0-108h0m1 66h0m0 2h0m0 20h0m0 31h0m0 14h0m0 23h0m0-69h0m0-30h0m1 74h0m0-19h0m0-57h0m0 96h0m0-130h0m0-14h0m0 92h0m0-33h0m0 55h0m1 16h0m0-50h0m0-31h0m0-16h0m0 82h0m0-55h0m1-62h0m0 119h0m0 14h0m0-56h0m0 19h0m1-32h0m0 39h0m0 17h0m0-72h0m0-2h0m0 82h0m0-37h0m0 17h0m0-14h0m1-30h0m0 54h0m0 74h0m0-27h0m0-60h0m0-69h0m0 34h0m0 42h0m0-113h0m0 97h0m0-19h0m0-11h0m0-69h0m0 94h0m1-44h0m0 16h0m0 1h0m0-46h0m0 44h0m0-12h0m0 102h0m0-139h0m0 106h0m0-61h0m0 98h0m1-150h0m0 85h0m0 15h0m0-4h0m0-13h0m0 3h0m0-55h0m1 15h0m0 86h0m0 43h0m0-118h0m0 2h0m0 42h0m0-76h0m1 89h0m0-3h0m0-58h0m0-40h0m1 36h0m0 55h0m0-3h0m0-5h0m0 8h0m0-115h0m1 69h0m0 15h0m1-59h0m0 73h0m0 60h0m0-77h0m0 13h0m0-20h0m0 58h0m0-23h0m1 59h0m0-53h0m0 92h0m0-104h0m0-2h0m0-16h0m1-20h0m0 104h0m0-105h0m0 62h0m0-5h0m1-28h0m0 19h0m0-24h0m0-44h0m0 107h0m0 35h0m0-124h0m0-14h0m0 101h0m0 5h0m0-77h0m0-14h0m1 105h0m0-99h0m0 86h0m0-21h0m0 48h0m0-63h0m0-3h0m1 54h0m0-57h0m0-11h0m0 85h0m0 0h0m0-62h0m0-38h0m0-48h0m0 70h0m0 86h0m1 0h0m0-84h0m0-14h0m0-28h0m1 130h0m0-110h0m0 116h0m0-129h0m0 46h0m0 13h0m0 80h0m0-140h0m0 27h0m0 85h0m1-99h0m0 33h0m0 68h0m0 14h0m0-60h0m0 3h0m0-46h0m0 57h0m0 26h0m0-57h0m0 70h0m1-47h0m0-28h0m0-23h0m0 28h0m0 76h0m0-35h0m1-9h0m0-57h0m0 27h0m0-35h0m0 3h0m0 28h0m0-29h0m0 2h0m1-13h0m0 97h0m0 7h0m0-30h0m0-40h0m0 41h0m0-71h0m1 33h0m0-25h0m0 102h0m0 7h0m0-16h0m0-37h0m0-40h0m1 44h0m0 33h0m0-10h0m0-100h0m0 96h0m0-32h0m0 21h0m0 27h0m0 6h0m0-83h0m0-47h0m0 120h0m0 3h0m0-67h0m0 60h0m1-107h0m0 66h0m0-16h0m0-31h0m0 73h0m0-74h0m0 70h0m1 0h0m0 2h0m0-52h0m0 64h0m0-81h0m0 96h0m0-38h0m0-62h0m0 40h0m0 63h0m0-85h0m1 71h0m0-12h0m0-73h0m0 98h0m0-129h0m0 71h0m0-55h0m0 24h0m1 14h0m0 53h0m0 5h0m0 35h0m0-39h0m0-83h0m1 10h0m0-94h0m0 109h0m0-5h0m1 63h0m0-38h0m0-61h0m0 24h0m0-11h0m0 54h0m0-36h0m0-15h0m0-19h0m0-19h0m0 58h0m0 48h0m1-38h0m0-26h0m0 34h0m0 32h0m1 2h0m0-50h0m0-18h0m0 47h0m0-48h0m0-17h0m1-9h0m0 67h0m0 21h0m0-82h0m0 90h0m0-112h0m0 24h0m0 32h0m0 39h0m0-2h0m0-27h0m0 45h0m1 0h0m0-30h0m0-67h0m0-47h0m0 69h0m1 11h0m0 35h0m0-100h0m0 16h0m0 57h0m1 51h0m0-149h0m0 88h0m0-29h0m0-14h0m0-25h0m0 16h0m0 63h0m0 42h0m0-87h0m0 3h0m0 46h0m0-74h0m0 7h0m1 108h0m0-96h0m0 82h0m0-103h0m0-23h0m0 116h0m0-19h0m0-6h0m0-59h0m0 102h0m0-25h0m0-10h0m0-44h0m0 21h0m0 35h0m1-73h0m0 71h0m0-74h0m0-48h0m0 119h0m0 18h0m0 2h0m0-11h0m0-13h0m1 26h0m0-32h0m0-58h0m0 66h0m0-113h0m0 122h0m0 4h0m0-10h0m0-51h0m1 37h0m0 32h0m0-90h0m0 78h0m0-60h0m0 39h0m0-94h0m0 103h0m0-66h0m0 115h0m1-108h0m0-34h0m0 72h0m0-59h0m0-26h0m0 116h0m0-67h0m1 6h0m0 25h0m0-27h0m0 7h0m0 12h0m0 35h0m0-83h0m0 70h0m0-37h0m0 75h0m0-33h0m1-39h0m0 50h0m0-2h0m0-6h0m0-41h0m0 21h0m0 67h0m1-33h0m0-64h0m1-19h0m0 27h0m0-19h0m0 91h0m0-64h0m1 15h0m0-23h0m0-2h0m0 41h0m0-101h0m0-1h0m0 108h0m1 11h0m0-106h0m0 72h0m0 51h0m0-29h0m0-30h0m0 1h0m1 47h0m0-88h0m0-19h0m0 66h0m0-26h0m0-19h0m1 65h0m0 1h0m0-29h0m0 43h0m0-25h0m0 16h0m0-78h0m0 23h0m1 61h0m0-52h0m0-8h0m0 35h0m0-18h0m0-80h0m0 70h0m0-36h0m1 119h0m0-3h0m0 7h0m0-35h0m0-71h0m0 45h0m0-29h0m0 17h0m0 21h0m0-22h0m1 30h0m0-12h0m0 0h0m1-10h0m0 23h0m0 21h0m0-23h0m0 38h0m0-116h0m1 73h0m0 29h0m0-3h0m0 31h0m0-50h0m0 0h0m0-42h0m1 100h0m0-39h0m0 24h0m0-24h0m0 41h0m1-76h0m0 59h0m0-35h0m0 59h0m0-74h0m1-18h0m0 66h0m0-82h0m0 31h0m0 86h0m0-25h0m0-15h0m0-52h0m0 22h0m1-43h0m0-11h0m0 71h0m0 5h0m0 49h0m0-18h0m0-109h0m0 16h0m0 28h0m1 74h0m0-81h0m0 62h0m0-87h0m0 80h0m0-32h0m0-40h0m0 24h0m0 13h0m1 77h0m0 30h0m0-121h0m0 69h0m0-3h0m0 14h0m0-17h0m0-89h0m0 25h0m1 91h0m0-38h0m0-1h0m0-38h0m0 44h0m0 27h0m0-32h0m1-48h0m0 76h0m0-91h0m0 113h0m0-107h0m0 34h0m0-3h0m0 72h0m0-44h0m0-4h0m1 12h0m0-15h0m0-12h0m0 12h0m0 36h0m0 12h0m0-9h0m0 1h0m0-43h0m0-4h0m1 16h0m0-78h0m0 79h0m0 45h0m0-38h0m0-44h0m0-40h0m1 81h0m0-97h0m0 75h0m0-72h0m0 79h0m1 22h0m0-46h0m0 44h0m0-100h0m0 42h0m0 63h0m0-98h0m0 82h0m0 3h0m0-60h0m0 52h0m1 51h0m0-18h0m0-70h0m0 81h0m0-42h0m0-51h0m0 37h0m0-67h0m0 29h0m0 10h0m0 7h0m0 79h0m1-163h0m0 83h0m0-2h0m0 72h0m1-117h0m0-6h0m0 21h0m0 19h0m0 27h0m0 59h0m0-96h0m0-34h0m0 103h0m0 24h0m0-127h0m1 86h0m0-70h0m0 87h0m0-52h0m0 9h0m0 101h0m1-102h0m0-34h0m0 15h0m0 5h0m0 25h0m0-29h0m0-11h0m1-17h0m0 36h0m0-40h0m1 39h0m0 16h0m0 58h0m0-119h0m0 112h0m0 35h0m0-99h0m1 64h0m0-75h0m0-25h0m0 32h0m0 29h0m0-41h0m0 18h0m0-53h0m1 129h0m0-155h0m0 121h0m0-81h0m0 12h0m0 5h0m1 72h0m0-53h0m0 21h0m0-41h0m0 5h0m0 44h0m0-26h0m1 38h0m0-88h0m0-3h0m0 68h0m0-51h0m1 93h0m0-147h0m0 111h0m0-21h0m0 38h0m0-97h0m0 36h0m0-28h0m0 1h0m1-1h0m0 18h0m0-54h0m0 65h0m0-3h0m0-91h0m0 67h0m0 40h0m0 54h0m0-49h0m0-44h0m0 1h0m0 28h0m0 50h0m0-2h0m1-35h0m0-57h0m0 13h0m0 40h0m0-38h0m0 80h0m1-19h0m0-61h0m0-38h0m0 122h0m0-109h0m1 44h0m0 38h0m0-4h0m0-18h0m0-85h0m0 47h0m0-12h0m0-36h0m0 8h0m0 100h0m1-85h0m0 28h0m0-52h0m0 33h0m0 4h0m0-22h0m0 32h0m1 53h0m0-58h0m0 46h0m0-97h0m0 87h0m0-28h0m1-64h0m0 63h0m0-15h0m0 65h0m0-54h0m0 6h0m0 78h0m0-104h0m0 69h0m0-46h0m0-13h0m0-33h0m0 109h0m1-14h0m0 14h0m0-77h0m0 111h0m0-42h0m0-83h0m0 1h0m0 90h0m0-64h0m0-5h0m0 83h0m1-112h0m0 23h0m0-68h0m0 25h0m0 109h0m1-15h0m0-100h0m0 146h0m0-36h0m0-87h0m0 87h0m0-77h0m0 68h0m0 11h0m1-20h0m0 43h0m0-140h0m0 153h0m0-100h0m0 26h0m0 44h0m1-80h0m0 65h0m0 0h0m0 51h0m0-135h0m0 70h0m0-26h0m0 46h0m0 54h0m0-179h0m0 169h0m0 8h0m0-98h0m0 35h0m0 11h0m0-12h0m0-56h0m0-2h0m0 55h0m0-108h0m1 112h0m0 3h0m0-49h0m0 63h0m0 10h0m0 47h0m0-184h0m0 71h0m0 34h0m0 73h0m0-102h0m1 59h0m0-94h0m0 75h0m0-117h0m0 26h0m0 88h0m0 42h0m0-152h0m0 112h0m0 45h0m1-114h0m0 56h0m0-32h0m0 48h0m0 76h0m0-125h0m0 0h0m0 80h0m0-29h0m0 50h0m0 16h0m0 14h0m0-66h0m0-59h0m0 120h0m0-91h0m0 27h0m1 46h0m0-139h0m0-20h0m0 91h0m0-33h0m0 59h0m0-73h0m0 102h0m0-114h0m1 67h0m0 0h0m0-61h0m0 67h0m0-1h0m0-22h0m0-9h0m0-25h0m0 58h0m0 54h0m0-105h0m0 34h0m0 9h0m0-86h0m0 23h0m0 152h0m0-138h0m1 10h0m0 29h0m0 10h0m0 3h0m0 93h0m0-108h0m0 88h0m0-120h0m0-9h0m0-30h0m0 68h0m0 35h0m0 57h0m0-70h0m0 20h0m0-33h0m0-4h0m0-36h0m0 96h0m0-103h0m1 77h0m0 25h0m0-3h0m0-142h0m0 157h0m0 18h0m0-56h0m0-129h0m0 125h0m1-71h0m0 12h0m0 131h0m0-16h0m0-85h0m0-105h0m0 76h0m1 54h0m0-13h0m0 84h0m0-37h0m1 21h0m0-101h0m0 71h0m0 11h0m0-17h0m0 10h0m0-54h0m0-11h0m0 1h0m0 67h0m0-115h0m0 147h0m0-1h0m0-65h0m1-43h0m0 100h0m0-111h0m0 26h0m1 19h0m0 35h0m0-11h0m0-21h0m0-24h0m0 7h0m0 10h0m0 50h0m0-60h0m0 1h0m1 55h0m0-1h0m0-47h0m0 35h0m0-52h0m0 24h0m0-5h0m0 17h0m0-36h0m0 70h0m0 4h0m0-45h0m1 29h0m0-10h0m0-39h0m0-2h0m0 0h0m0 55h0m0-75h0m0 81h0m1-92h0m0 4h0m0 68h0m0-83h0m0 86h0m0-41h0m0 32h0m0-4h0m0 14h0m0-28h0m1-19h0m0 25h0m0 37h0m0-25h0m0-16h0m0-105h0m0 55h0m0 36h0m0 1h0m0-10h0m0 28h0m0-3h0m0-54h0m0 52h0m1 4h0m0 11h0m0-21h0m0 46h0m0-90h0m0 100h0m0-35h0m0-44h0m0 28h0m0 40h0m1-5h0m0 14h0m0-12h0m0-32h0m0 35h0m0-57h0m0 18h0m0-46h0m0 64h0m0-31h0m1-1h0m0-9h0m0 19h0m0 45h0m0-66h0m0 19h0m1-18h0m0 64h0m0-88h0m0 90h0m0-79h0m0 30h0m1 57h0m0-43h0m0 55h0m0-7h0m0-53h0m0-21h0m0 13h0m1 31h0m0-54h0m0 71h0m0-59h0m0 61h0m0-48h0m0 0h0m0 59h0m1-60h0m0-6h0m0 64h0m0-24h0m0-35h0m0 8h0m0 14h0m0-39h0m0 88h0m1-59h0m0-37h0m0 102h0m0 3h0m0-50h0m0 26h0m0 2h0m0-152h0m0 121h0m1-29h0m0-24h0m0 34h0m1 30h0m0 26h0m0-68h0m0 111h0m0-153h0m0 50h0m0 12h0m0-25h0m0 114h0m0-38h0m0-17h0m0-61h0m0 117h0m0-21h0m1-9h0m0-43h0m0 16h0m0 63h0m0-13h0m0-78h0m0 48h0m0 1h0m0 12h0m0 13h0m0-97h0m0-8h0m1-8h0m0 14h0m0 71h0m0 58h0m0-67h0m0-55h0m0-27h0m0 32h0m0 16h0m0-41h0m0 42h0m1 60h0m0-2h0m0 24h0m0-44h0m0-63h0m0 36h0m0-106h0m0 149h0m0-73h0m0 20h0m0 75h0m0-78h0m0 76h0m0-84h0m0-35h0m1 116h0m0 29h0m0-138h0m0 39h0m0 60h0m0-100h0m1 17h0m0 79h0m0 12h0m0-36h0m0 46h0m0-120h0m0 48h0m0 10h0m1-116h0m0 146h0m0-65h0m0 25h0m0 45h0m1-93h0m0 12h0m0 115h0m0-91h0m0-2h0m0 49h0m0 18h0m0-54h0m1-41h0m0-53h0m0 165h0m0-103h0m0 76h0m0-19h0m0 8h0m0 42h0m1-90h0m0-35h0m0 24h0m0 77h0m0 9h0m1-77h0m0 30h0m0-46h0m0 31h0m0-9h0m0-38h0m0 28h0m0 73h0m0-12h0m0-59h0m0 3h0m0 2h0m1-80h0m0 37h0m0 37h0m0 14h0m0-15h0m1-54h0m0 68h0m0 37h0m0-84h0m0 101h0m0-78h0m0-4h0m0 24h0m0-33h0m0 78h0m0-105h0m0 103h0m1-15h0m0 26h0m0-76h0m0-25h0m0 67h0m0-51h0m0-7h0m0 62h0m0-42h0m1 74h0m0-66h0m0-2h0m0 24h0m0-62h0m1 53h0m0-5h0m0 27h0m0-64h0m0 62h0m0-59h0m0-19h0m0 4h0m0 104h0m0-75h0m1 12h0m0 27h0m0-42h0m0 56h0m0-75h0m0 72h0m0-63h0m1 1h0m0-7h0m0 12h0m0-4h0m0-22h0m0 38h0m0 12h0m0-95h0m0 51h0m0-13h0m1 34h0m0-40h0m1 47h0m0 37h0m0-47h0m0 53h0m0 10h0m0-59h0m0-27h0m0 32h0m0 48h0m0-61h0m0 58h0m0-58h0m1-12h0m0 60h0m0-58h0m0-7h0m0 51h0m0 73h0m1-100h0m0 20h0m0 16h0m0-59h0m0 64h0m0 10h0m0-87h0m0 53h0m1-111h0m0 62h0m0-7h0m0 57h0m0-67h0m0 15h0m0 27h0m0-69h0m0 87h0m1 4h0m0 46h0m0-8h0m0-143h0m0 68h0m0-31h0m0 86h0m1 29h0m0-145h0m0 120h0m0-26h0m0-103h0m0 124h0m0-73h0m0-20h0m0 123h0m0-46h0m1-45h0m0-36h0m0 29h0m0-75h0m0 57h0m0 27h0m0-77h0m0 100h0m1 94h0m0-69h0m0-6h0m0-96h0m0 41h0m0-38h0m0 86h0m0-31h0m0 10h0m0-28h0m1 129h0m0-102h0m0-24h0m0 57h0m0 9h0m0-49h0m0-53h0m0 160h0m1-90h0m0 85h0m0-105h0m0 108h0m0-117h0m0 62h0m0-31h0m0-31h0m0-4h0m0 42h0m0-83h0m1 59h0m0 23h0m0 43h0m0-25h0m0-57h0m0 32h0m0 31h0m0 36h0m0-24h0m0 14h0m1-52h0m0-74h0m0 53h0m0 51h0m0-78h0m0 15h0m0-4h0m0 52h0m0 10h0m1 38h0m0-119h0m0 108h0m0-101h0m0-20h0m0 69h0m0 49h0m0-86h0m0 20h0m1 14h0m0 85h0m0-139h0m0-6h0m0 128h0m0-103h0m1 111h0m0-182h0m0 122h0m0 49h0m0-62h0m0 33h0m0 21h0m1-80h0m0-8h0m0 48h0m0-71h0m0 5h0m0 74h0m0-30h0m0 78h0m0-86h0m0-20h0m1 92h0m0-99h0m0 109h0m0 3h0m0-173h0m0 128h0m1 32h0m0-10h0m0 17h0m0-154h0m0 108h0m0-56h0m0 5h0m0 16h0m0-47h0m0-1h0m0-10h0m1 128h0m0-48h0m0-50h0m0 77h0m0 26h0m0-113h0m0 112h0m1-24h0m0-97h0m0 114h0m0 30h0m0-76h0m0-93h0m0 144h0m0-139h0m0 41h0m0 100h0m0-153h0m1 121h0m0-60h0m0-8h0m0 62h0m0-25h0m0-103h0m0 52h0m0 54h0m0 59h0m0-7h0m0 7h0m0-31h0m0-109h0m1 15h0m0 47h0m0 54h0m0-71h0m0 9h0m0-18h0m0 8h0m0 4h0m0-42h0m0-7h0m1-1h0m0 126h0m0-83h0m0-25h0m0 62h0m0-30h0m0 37h0m0-99h0m0 87h0m0-10h0m0 31h0m0-57h0m0-3h0m0 35h0m0-1h0m0 9h0m0-1h0m1-20h0m0 11h0m0 54h0m0-9h0m0 6h0m0 4h0m0 13h0m0 32h0m0-77h0m0-29h0m1 39h0m0-1h0m0 5h0m0-13h0m0 16h0m0-21h0m0 10h0m0-9h0m0-26h0m0 55h0m0-19h0m1 7h0m0 7h0m0-1h0m0-63h0m0 21h0m0 45h0m1-22h0m0 71h0m0-23h0m0-50h0m0 27h0m0-26h0m0-15h0m1-16h0m0 69h0m0-36h0m0 47h0m0-53h0m0-39h0m0 88h0m0-28h0m0-38h0m1 68h0m0-49h0m0-11h0m0-23h0m0 86h0m0-63h0m1 22h0m0 1h0m0-32h0m0 14h0m0 24h0m0-9h0m0-10h0m0-14h0m0 21h0m0 2h0m1-5h0m0 32h0m0 2h0m0-80h0m1 51h0m0-4h0m0 5h0m0 6h0m1 12h0m0 27h0m0-86h0m0 17h0m0 35h0m0 50h0m0 1h0m0-64h0m0-40h0m0 15h0m0 69h0m1-68h0m0 25h0m0-2h0m0 66h0m0-92h0m0 86h0m0-70h0m0-33h0m0 55h0m0 14h0m0 26h0m1-102h0m0 22h0m0 35h0m0 55h0m0-69h0m0 25h0m0 25h0m0 13h0m1-118h0m0 83h0m0 0h0m0-37h0m0 84h0m0-75h0m0 31h0m0 18h0m0-19h0m0-16h0m1-19h0m0 23h0m0 16h0m0-51h0m0 80h0m0 14h0m0-66h0m0-18h0m0 29h0m1 28h0m0-61h0m0 63h0m0-38h0m0-23h0m0-30h0m0 52h0m0 72h0m0-99h0m1 50h0m0-22h0m0-2h0m0-37h0m0 11h0m0-17h0m0 104h0m0-61h0m0-4h0m0 70h0m0-98h0m0 82h0m0-50h0m0 14h0m0-26h0m0 68h0m1-23h0m0-39h0m0 12h0m0-39h0m0 25h0m0 93h0m1-78h0m0 42h0m0-88h0m0 25h0m0-7h0m0 4h0m0-29h0m0 43h0m0-12h0m0 35h0m0 0h0m0-55h0m0-7h0m0 23h0m1 27h0m0-34h0m1 44h0m0-39h0m0-28h0m0 99h0m0-42h0m0-26h0m0-26h0m0-4h0m0 46h0m0-9h0m1-14h0m0 33h0m0-54h0m0 14h0m0 72h0m0-6h0m0-11h0m0-37h0m0 43h0m0-41h0m1 57h0m0-46h0m0-39h0m0 31h0m0 8h0m0 39h0m0-121h0m0 70h0m0 29h0m0-2h0m0-69h0m1-34h0m0 93h0m0-14h0m0-125h0m1 85h0m0 45h0m0 6h0m0-128h0m0 145h0m0-58h0m0-27h0m0 40h0m0 30h0m1 27h0m0-27h0m0 28h0m0-167h0m0 174h0m0-27h0m0-89h0m1 24h0m0-25h0m0 31h0m0-2h0m0 67h0m0-1h0m1 7h0m0-118h0m0 44h0m0 106h0m0-106h0m0 18h0m0-44h0m0 69h0m0-92h0m1-35h0m0 161h0m0-30h0m0-76h0m0 46h0m0-58h0m0 11h0m0 109h0m1-77h0m0-68h0m0 68h0m0 0h0m1 0h0m0-59h0m0 132h0m0-160h0m0 85h0m0-13h0m0 15h0m0 54h0m0-55h0m0 69h0m0-4h0m1-33h0m0 32h0m0-38h0m0 9h0m0-21h0m0-32h0m1-17h0m1 95h0m0 13h0m0-102h0m0 65h0m1 10h0m0-48h0m0 72h0m0-114h0m0 75h0m0 21h0m0-126h0m0 120h0m0-108h0m0 59h0m0 35h0m1 30h0m0-61h0m0-9h0m0 100h0m0-109h0m0 17h0m0 1h0m0-11h0m0-37h0m0 155h0m0-122h0m1 15h0m0 68h0m0-5h0m0-31h0m0-15h0m1 61h0m0-48h0m0-7h0m0 74h0m0-52h0m0 15h0m1-62h0m0 31h0m0 54h0m0-10h0m0-30h0m0-16h0m1-28h0m0 18h0m0-16h0m0 15h0m0 41h0m0-104h0m1 72h0m0 15h0m0 0h0m0-22h0m0 31h0m0 32h0m0 5h0m0-34h0m1 1h0m0 21h0m0-34h0m0 22h0m0 2h0m0 31h0m0-86h0m0 71h0m1 7h0m0-76h0m0 77h0m0-22h0m0 1h0m0 6h0m0-21h0m1 18h0m0-39h0m0 3h0m1 19h0m0 2h0m0-87h0m0 47h0m0 69h0m1-32h0m0 34h0m0-47h0m0-12h0m0 27h0m0-24h0m1-75h0m0 100h0m0-28h0m0 28h0m0-23h0m0 10h0m0 0h0m0 45h0m0-30h0m1-10h0m0 10h0m1-14h0m1-5h0m0 10h0m0 9h0m0-4h0m0 11h0m0 20h0m0-34h0m0-1h0m1 48h0m0-47h0m0 27h0m0 13h0m0-11h0m0 14h0m0-48h0m1 26h0m0-5h0m0 33h0m0-107h0m1 106h0m0-57h0m0-29h0m0 30h0m0 2h0m1 45h0m0-44h0m1-35h0m0 23h0m0-1h0m0 41h0m0-24h0m0 31h0m1-39h0m0 24h0m0-10h0m0-7h0m0 54h0m0-107h0m0 47h0m0-47h0m0 37h0m1 32h0m0 40h0m0-39h0m0 30h0m0-9h0m0-49h0m1 17h0m0 68h0m0-67h0m0 41h0m1-5h0m0-78h0m0 17h0m0 85h0m1-58h0m0 28h0m0-45h0m0-30h0m1 86h0m0-115h0m0 106h0m0-49h0m0-83h0m0 94h0m0 54h0m0-66h0m1 54h0m0-12h0m0-20h0m0 22h0m0-5h0m1 9h0m0 2h0m0-74h0m0 37h0m0-33h0m0 40h0m0 1h0m0-55h0m0 48h0m0-1h0m0 4h0m0 35h0m0 14h0m1 18h0m0-72h0m0-51h0m0 106h0m0-57h0m0 62h0m1-74h0m0-17h0m0 34h0m0-25h0m0 62h0m0-41h0m0 9h0m1 52h0m0-102h0m0 104h0m0-93h0m0 92h0m0-76h0m0 6h0m0-44h0m1 2h0m0 39h0m0 79h0m0-10h0m0-4h0m1-14h0m0-79h0m0 57h0m1-57h0m0 98h0m0-2h0m0-53h0m0 31h0m0 41h0m1-111h0m0 3h0m0-12h0m0 0h0m0 97h0m0 7h0m0-40h0m0-38h0m0-42h0m0 46h0m0-29h0m1 81h0m0-39h0m0-96h0m0 127h0m0-45h0m0-36h0m0 23h0m0 41h0m0-28h0m0 24h0m0-26h0m0 73h0m1-53h0m0-34h0m0 48h0m0-68h0m0 106h0m0-13h0m0-36h0m0-12h0m0-61h0m0-34h0m1 39h0m0 27h0m0 11h0m0 64h0m0-54h0m0-26h0m1-27h0m0 15h0m0-33h0m0 35h0m1-51h0m0 126h0m0-114h0m0 84h0m0 14h0m0 19h0m0-23h0m1-49h0m0-39h0m0 71h0m0-46h0m0 17h0m1-35h0m0 2h0m0 46h0m0-62h0m0 131h0m0-1h0m0-33h0m0-40h0m1 16h0m0 63h0m0-15h0m0-102h0m0 122h0m0-75h0m1 25h0m0 35h0m0-26h0m0-45h0m0 77h0m0-132h0m0 58h0m0 40h0m0-32h0m0-64h0m1 102h0m0 11h0m0-17h0m0-9h0m0 60h0m0-124h0m0-17h0m0 99h0m0-77h0m0 88h0m0-115h0m0 78h0m1 15h0m0-59h0m0 49h0m0 5h0m0-12h0m0 15h0m0-70h0m0 57h0m0-1h0m0 12h0m0-51h0m0 56h0m0 42h0m0-145h0m1 102h0m0-94h0m0 126h0m0-38h0m0-1h0m0-11h0m0-33h0m0 30h0m0-32h0m0 11h0m0-15h0m0-8h0m0 63h0m1-36h0m0 40h0m0-60h0m1-9h0m0 50h0m0 61h0m0-48h0m0 1h0m0 16h0m0-65h0m0 31h0m0 7h0m0 15h0m1 0h0m0 37h0m0-1h0m0-40h0m0-9h0m0 58h0m1-102h0m0 41h0m0 19h0m0-13h0m0 54h0m0-15h0m1-66h0m0 8h0m0 22h0m0-43h0m0 44h0m0 43h0m1-82h0m0-16h0m0 118h0m0-67h0m0-36h0m0-9h0m0 54h0m0 18h0m0 9h0m1 4h0m0-39h0m0-23h0m0-28h0m0 92h0m0-19h0m0-62h0m0 12h0m1 13h0m0 49h0m0-29h0m0-38h0m0 0h0m0 15h0m1-14h0m0-74h0m0 108h0m0-28h0m0-20h0m0 75h0m1-11h0m0 2h0m0 25h0m0-8h0m0-10h0m0-2h0m0-33h0m1 20h0m0-139h0m0 163h0m0-39h0m0-109h0m1 82h0m0-20h0m0 32h0m0-44h0m0-68h0m0 88h0m0 55h0m0-15h0m0-55h0m1 98h0m0-65h0m0-80h0m0 52h0m0 66h0m0-23h0m0-104h0m0 149h0m0-35h0m0-101h0m0 120h0m0-86h0m1 70h0m0 22h0m0 5h0m0-29h0m0-77h0m0 71h0m0 1h0m0-21h0m0-71h0m0 16h0m0 57h0m0 65h0m0-13h0m0-148h0m1 146h0m0-21h0m0 28h0m0-16h0m0-106h0m0 73h0m0-61h0m0 1h0m0-13h0m0 87h0m0 45h0m0-42h0m0-86h0m0 38h0m1 75h0m0-76h0m0 59h0m0 28h0m0-28h0m0-4h0m0-8h0m0-104h0m0 128h0m1 17h0m0 1h0m0-105h0m0 75h0m0 2h0m0 19h0m0-128h0m0 12h0m0 115h0m0 12h0m0-72h0m0 24h0m0-7h0m0-77h0m0 204h0m0-125h0m0-4h0m1-87h0m0-8h0m0-12h0m0 109h0m0 52h0m0-101h0m0 120h0m0-52h0m0-119h0m1 85h0m0-8h0m0-34h0m0-52h0m0 73h0m0-13h0m0 56h0m0-112h0m0 115h0m0 45h0m0-94h0m0 21h0m0-91h0m1 119h0m0-7h0m0 8h0m0-1h0m0 72h0m0-66h0m0-56h0m1 68h0m0-5h0m0-2h0m0-84h0m0 9h0m0 2h0m0 58h0m0 24h0m0 9h0m0-80h0m0 34h0m0-32h0m0 83h0m0-2h0m0-22h0m0 68h0m0-130h0m0 6h0m0 6h0m0-12h0m1 96h0m0-74h0m0 90h0m0-86h0m0 47h0m0-58h0m0 11h0m0 88h0m0-11h0m0-42h0m1-9h0m0-1h0m1 60h0m0 22h0m0-93h0m0 29h0m0 26h0m0-26h0m0-15h0m1-10h0m0-2h0m0 34h0m0 73h0m0-9h0m0-38h0m0-34h0m1-12h0m0 66h0m0 9h0m0 8h0m0-45h0m0 0h0m0 52h0m1-116h0m0-15h0m0 85h0m0 42h0m0-11h0m1-82h0m0 37h0m0-61h0m0 64h0m0-48h0m0 20h0m0 54h0m1 29h0m0-95h0m0-1h0m0 37h0m0 71h0m0-113h0m1-2h0m0 113h0m0-108h0m0 97h0m0-87h0m0 1h0m0-17h0m1 110h0m0 1h0m0 2h0m0-35h0m0-78h0m0 113h0m1-50h0m0-48h0m0-26h0m0 18h0m0-24h0m0 95h0m1 11h0m0 24h0m0-10h0m0-104h0m0 89h0m0-36h0m0-56h0m0 99h0m0-71h0m0 72h0m0-52h0m0-39h0m1 99h0m0-41h0m0-75h0m0 107h0m0-99h0m0 15h0m1-27h0m0 69h0m0-66h0m0 25h0m0 1h0m0-7h0m0 6h0m0-2h0m1 105h0m0-61h0m0 40h0m0-70h0m0 6h0m0-32h0m1 88h0m0-99h0m0 35h0m0 2h0m0 32h0m0-13h0m0-4h0m0 71h0m0-99h0m0 96h0m0-31h0m0-85h0m0 106h0m1-35h0m0-33h0m0 30h0m0-27h0m0 30h0m0-16h0m0 54h0m1-105h0m0 87h0m0-85h0m0-8h0m0 16h0m0 65h0m0 7h0m0-20h0m0-48h0m0 37h0m0-53h0m0 104h0m1-65h0m0 21h0m0 4h0m0 28h0m1-173h0m0 215h0m0-116h0m0-3h0m0 49h0m0-32h0m0-9h0m0 9h0m1 32h0m0-93h0m0 113h0m0-19h0m0 18h0m1-8h0m0-45h0m0 40h0m0-66h0m1 9h0m0-3h0m0 27h0m0-93h0m0 82h0m0-9h0m0 3h0m0 24h0m0-26h0m1 43h0m0-79h0m0-13h0m0 105h0m0-165h0m0 151h0m0-91h0m0 4h0m1 35h0m0 39h0m0-99h0m0 81h0m0 26h0m1-42h0m0-62h0m0 51h0m0 29h0m0-20h0m0 14h0m0 63h0m0-119h0m0 5h0m0 39h0m0-2h0m0-40h0m1 92h0m0-35h0m0-26h0m0-1h0m0-30h0m0-16h0m0-49h0m1 103h0m0-104h0m0 12h0m0 80h0m0-28h0m0 1h0m1 47h0m0-114h0m0 40h0m0 53h0m0-23h0m0 48h0m0-84h0m0 53h0m1 18h0m0-75h0m0 105h0m0-30h0m0 3h0m0-65h0m0-16h0m0 93h0m0-49h0m0-42h0m0 94h0m0-30h0m1-53h0m0 129h0m0-167h0m0 101h0m0 27h0m1-42h0m0-10h0m0 18h0m1-4h0m0 21h0m0-86h0m0 68h0m0 13h0m1 9h0m0-22h0m0 31h0m0-23h0m0 6h0m0-7h0m1 31h0m0-25h0m0 1h0m1-2h0m0 8h0m0-33h0m0 11h0m0-17h0m1 32h0m0-27h0m0 26h0m0-40h0m1 46h0m0-25h0m0 48h0m0-48h0m0 46h0m0-30h0m0 52h0m0-75h0m0 17h0m1 12h0m0 5h0m1-96h0m0 54h0m0 6h0m0 37h0m0 18h0m0-18h0m0-46h0m0 53h0m1-77h0m0 74h0m0-44h0m0-59h0m0 86h0m0-90h0m0 147h0m1-54h0m0-105h0m0 97h0m0-44h0m0 105h0m0-25h0m0-108h0m0 38h0m0 64h0m0-29h0m0-32h0m0 52h0m0-9h0m1-52h0m0-36h0m0 99h0m0-17h0m0-34h0m0-3h0m0 0h0m0 7h0m1 25h0m0-11h0m0-77h0m0 107h0m1-79h0m0 38h0m0 17h0m0 11h0m0-28h0m0 32h0m0 32h0m0 63h0m0-58h0m0-99h0m0 21h0m1 42h0m0 23h0m0-86h0m0 84h0m0 0h0m0 6h0m1 32h0m0-96h0m0 65h0m0-5h0m0-62h0m0 80h0m0-40h0m0 18h0m0 12h0m0-73h0m0-1h0m0-69h0m0 67h0m0-47h0m0 53h0m1-18h0m0 18h0m0-33h0m0 93h0m0-138h0m0 16h0m0 148h0m0-32h0m0-51h0m0-49h0m1 108h0m0-71h0m0 91h0m0-87h0m0-68h0m0 23h0m0 130h0m0-106h0m0 20h0m0 4h0m1-67h0m0 19h0m0 136h0m0-83h0m0-77h0m0 127h0m0-93h0m0 72h0m0-32h0m0-22h0m1 69h0m0-11h0m0 58h0m0-84h0m0 38h0m0-3h0m0 38h0m0-45h0m0-62h0m0-54h0m0 88h0m0 52h0m1-55h0m0-16h0m0 99h0m0 20h0m0-110h0m0 2h0m0 100h0m0-76h0m0 88h0m0-175h0m0 132h0m0-33h0m1 4h0m0-46h0m0 0h0m0 42h0m0-60h0m0 74h0m0-88h0m0 142h0m0-31h0m0-43h0m1-33h0m0 12h0m0 79h0m0-31h0m0 52h0m0 0h0m0 11h0m0-72h0m0 77h0m0 4h0m1-98h0m0 41h0m0-3h0m0-72h0m0 131h0m0-13h0m0 44h0m0-160h0m0 74h0m0-45h0m0 81h0m1-85h0m0 22h0m0-51h0m0 43h0m0 79h0m1 8h0m0-94h0m0 106h0m0-48h0m0 51h0m0 8h0m0-113h0m1 83h0m0 33h0m0-1h0m0-27h0m0 36h0m0-102h0m0 9h0m0 87h0m1-28h0m0-33h0m0-71h0m1 94h0m0-24h0m0-91h0m0-3h0m0 113h0m0-1h0m0-75h0m1 52h0m0-64h0m0 125h0m0-53h0m0-39h0m0 73h0m0-80h0m0 82h0m0-118h0m0 74h0m0 31h0m0-10h0m0-96h0m0 70h0m0 5h0m0 25h0m1 19h0m0 2h0m0-78h0m0-32h0m0 22h0m0 74h0m0-85h0m0 22h0m0 83h0m0 13h0m0-53h0m1 12h0m0-51h0m0 75h0m0-16h0m0-88h0m0-20h0m0 119h0m0-67h0m0 89h0m1-20h0m0-115h0m0 17h0m0 12h0m1 14h0m0-14h0m0-39h0m0 45h0m0 27h0m0 3h0m0 56h0m0 6h0m0 16h0m0-76h0m0-95h0m0 98h0m1 33h0m0-78h0m0 109h0m0-120h0m0 82h0m0-91h0m0 37h0m0 89h0m0-63h0m0-30h0m1 91h0m0-112h0m0-2h0m0 4h0m0 74h0m1-46h0m0-57h0m0 117h0m0-9h0m0-74h0m0 47h0m0-82h0m1 34h0m0-6h0m0 52h0m0 49h0m0-138h0m0 53h0m0-30h0m0 0h0m0-20h0m1 132h0m0-99h0m0 50h0m0-86h0m0 124h0m0-63h0m0-41h0m0 81h0m0-39h0m0-22h0m0 17h0m1-50h0m0 108h0m0-23h0m0 72h0m0-88h0m0 19h0m0-6h0m0-43h0m0 65h0m0-19h0m0-66h0m1 87h0m0-43h0m0 47h0m0-74h0m0 21h0m0-64h0m1 37h0m0 35h0m0-131h0m0 129h0m0-67h0m0 70h0m0-94h0m0 79h0m0 40h0m0-36h0m0-66h0m0 25h0m0-20h0m0 7h0m1 90h0m0-61h0m0-111h0m0 116h0m0-106h0m0 155h0m0-122h0m0 123h0m0-37h0m1-1h0m0 36h0m0 5h0m0-40h0m0-13h0m0 20h0m0-77h0m0 5h0m0 23h0m0 13h0m0 7h0m0-43h0m0 51h0m1 49h0m0-1h0m0-93h0m0-54h0m0 55h0m0 25h0m0-20h0m0-8h0m0-5h0m1-3h0m0-28h0m0 41h0m0-71h0m0 133h0m0-72h0m0 13h0m0 31h0m0-32h0m0 37h0m0 53h0m1-111h0m0 114h0m0-81h0m0 49h0m0-64h0m0-12h0m1 105h0m0 1h0m0-127h0m0 72h0m0 14h0m0 6h0m0 34h0m0-64h0m0 25h0m0-10h0m0-100h0m0 178h0m1-94h0m0-27h0m0 70h0m0-30h0m0-74h0m0 86h0m0 13h0m1-86h0m0 19h0m0 61h0m0-22h0m0-23h0m0 56h0m0 23h0m0-21h0m0-68h0m0-86h0m0 33h0m0 114h0m1-39h0m0 61h0m0-36h0m0 17h0m0 33h0m1-97h0m0 1h0m0 18h0m0 18h0m0 7h0m0-19h0m0 88h0m1-109h0m0 36h0m0 11h0m0 15h0m0-38h0m0 6h0m0 1h0m0 27h0m1 2h0m0-30h0m0 6h0m0 65h0m0-7h0m1-50h0m0 39h0m0 14h0m0-100h0m0 93h0m0-59h0m1 53h0m0-24h0m0-21h0m0 6h0m0-1h0m0-46h0m0 41h0m0-13h0m0 60h0m1-15h0m0-22h0m0 6h0m0-21h0m0 48h0m0-8h0m0-17h0m0 31h0m0-2h0m0-2h0m0-73h0m0 1h0m0 82h0m1-47h0m0-53h0m0 33h0m0 73h0m0-51h0m0-47h0m0-12h0m0 43h0m0-30h0m1 114h0m0-27h0m0-39h0m0-10h0m0-22h0m0-8h0m0 87h0m0-11h0m0-72h0m1 81h0m0 18h0m0-5h0m0-39h0m0-29h0m0 67h0m0-71h0m0 64h0m0 4h0m1-74h0m0 63h0m0-65h0m0 38h0m1 21h0m0-4h0m0-16h0m0 6h0m0-53h0m0 25h0m1-98h0m0 73h0m0 20h0m0 8h0m0-110h0m0 52h0m0-69h0m0 13h0m1 140h0m0-17h0m0-108h0m0 22h0m0 136h0m0-27h0m0-99h0m0 87h0m0-107h0m0 33h0m0 76h0m0-79h0m0 123h0m0-19h0m0-55h0m0-74h0m1 119h0m0-23h0m0-37h0m0-31h0m0-5h0m0 0h0m0 3h0m0 73h0m0-92h0m0 1h0m0 15h0m0 3h0m0-75h0m1 61h0m0 30h0m0 70h0m0 3h0m0-82h0m0 29h0m0 92h0m0-168h0m0 122h0m0-56h0m0 66h0m0-50h0m0-53h0m1 13h0m0 85h0m0-32h0m0-28h0m0 20h0m0 12h0m0-58h0m1 87h0m0-84h0m0 28h0m0 22h0m0-90h0m0 52h0m0-50h0m0 53h0m0 6h0m0 27h0m0 16h0m0-30h0m1 15h0m0-59h0m0 28h0m0-23h0m0 22h0m0 78h0m0-41h0m0-15h0m0 2h0m0 45h0m1-50h0m0-99h0m0 83h0m0-26h0m0-16h0m0 97h0m0-134h0m1 104h0m0-103h0m0 111h0m0-5h0m0-19h0m0-12h0m0-66h0m0-22h0m0 46h0m0 49h0m0-17h0m0 28h0m1-72h0m0 78h0m0-20h0m0-33h0m0 10h0m0 77h0m0-55h0m0 60h0m1-102h0m0 48h0m0 10h0m0 30h0m0 13h0m0-17h0m0-50h0m0-16h0m1-4h0m0 74h0m0 25h0m0-63h0m0 54h0m0-53h0m0 58h0m1-86h0m0 53h0m0 31h0m0-50h0m0 3h0m0 4h0m1-46h0m0 52h0m0-39h0m0-16h0m0 25h0m0 7h0m0-4h0m0 39h0m0 20h0m1 4h0m1-38h0m0 35h0m0-32h0m0 26h0m0-9h0m0-7h0m0-51h0m0-2h0m1 87h0m0-66h0m0 30h0m0-2h0m0-44h0m1 15h0m0 44h0m0-44h0m0-16h0m0 34h0m0-37h0m0 17h0m0 71h0m0-70h0m0 93h0m1-115h0m0 8h0m0 27h0m0 66h0m0-22h0m0 11h0m1-27h0m0-29h0m0-14h0m0 22h0m0 40h0m0-76h0m0 80h0m0-36h0m0 11h0m0 1h0m0 39h0m0-57h0m0-34h0m1 43h0m0 5h0m0 7h0m0 6h0m0-51h0m0 53h0m1 32h0m0-21h0m0-16h0m0-58h0m0 7h0m0 33h0m0 38h0m1-24h0m0-48h0m0 47h0m0-30h0m0 42h0m0-48h0m0 56h0m0-87h0m0 8h0m0-13h0m1-8h0m0 78h0m0-46h0m0 24h0m0-57h0m0 24h0m0 21h0m0-55h0m0 41h0m1 41h0m0-22h0m0 1h0m0 48h0m0-12h0m0 13h0m1-117h0m0 138h0m0-109h0m0-5h0m0 39h0m0-13h0m0-32h0m0 16h0m0 84h0m0 26h0m1-55h0m0 29h0m0-32h0m0-28h0m0 75h0m0-16h0m0 30h0m0-28h0m0-44h0m0 51h0m0-98h0m0 59h0m0-37h0m1 9h0m0-30h0m0 133h0m0-140h0m1 121h0m0-27h0m0-24h0m0 50h0m0-80h0m0 17h0m0-13h0m0 12h0m0 11h0m0-86h0m0 25h0m0 90h0m0-84h0m0 52h0m1 39h0m0-82h0m0 40h0m0-8h0m0 8h0m0 33h0m0-68h0m0 41h0m0-59h0m1-10h0m0 121h0m0-88h0m0 116h0m0-95h0m0-1h0m0-39h0m0 39h0m0-17h0m0 79h0m0-65h0m0 5h0m0-22h0m1 66h0m0-90h0m0 1h0m0 31h0m0-1h0m0 48h0m0-98h0m0 129h0m0-61h0m0 4h0m0 44h0m0-99h0m0 90h0m0-10h0m1 28h0m0-84h0m0 29h0m0 53h0m0-67h0m0-13h0m0 81h0m0-52h0m0-38h0m1 2h0m0 20h0m0-25h0m0 27h0m0 56h0m0-50h0m0 4h0m1-23h0m0 88h0m0-111h0m0 46h0m0-4h0m0-5h0m1 50h0m0-43h0m0 12h0m0-27h0m0-18h0m0 99h0m0-17h0m0-4h0m0-25h0m0 42h0m0 2h0m0-22h0m1-66h0m0 22h0m0 14h0m0-33h0m0 61h0m0-45h0m1-11h0m0 26h0m0 37h0m0 46h0m0-97h0m1 42h0m0-40h0m0-12h0m0 56h0m0-54h0m0 27h0m0 38h0m0 33h0m0-123h0m1 31h0m0-10h0m0 15h0m0-1h0m0 13h0m0-26h0m1-13h0m0 76h0m0-38h0m0-25h0m0 64h0m0-41h0m0-26h0m0 13h0m0 52h0m1-50h0m0 0h0m0 13h0m0-30h0m0-16h0m0-7h0m0 49h0m0 0h0m0 10h0m0-41h0m0 23h0m1 9h0m0-3h0m0-15h0m0-32h0m0 17h0m0 18h0m0-55h0m1 77h0m0-129h0m0 56h0m0 94h0m0-1h0m0-80h0m0-22h0m0 85h0m1-58h0m0 27h0m0-33h0m0 51h0m0-23h0m0-34h0m0-70h0m0 120h0m0-25h0m0 13h0m0 41h0m0-22h0m1-29h0m0 59h0m0-8h0m0-116h0m0 126h0m0-162h0m0 69h0m0 125h0m1-78h0m0-64h0m0 19h0m0 79h0m0-23h0m0 23h0m0-3h0m0-68h0m0-4h0m0 58h0m0 23h0m1-15h0m0-1h0m0-42h0m0 39h0m0-36h0m1 37h0m0-27h0m0-2h0m0 88h0m0-55h0m0-70h0m0-2h0m0 44h0m0-29h0m0-11h0m0 20h0m0-12h0m1 15h0m0 56h0m0-74h0m0-11h0m0 99h0m0-20h0m0-67h0m0 44h0m0-16h0m0 23h0m1-22h0m0 53h0m0-3h0m0-164h0m0 133h0m1 16h0m0-89h0m0 10h0m0 36h0m0-91h0m0 41h0m0 103h0m0-114h0m0 112h0m1-43h0m0 44h0m0-31h0m0-95h0m0 18h0m0 77h0m0 45h0m0-67h0m1 86h0m0-110h0m0-6h0m0-46h0m0 79h0m0 58h0m0 8h0m0 5h0m0-31h0m1-110h0m0 108h0m0-18h0m0-46h0m0-22h0m0 24h0m0 53h0m0-94h0m0-41h0m0 94h0m0 25h0m0-55h0m0-61h0m1 181h0m0-106h0m0 56h0m0-4h0m0 22h0m0-81h0m0 77h0m1-34h0m0 97h0m0-44h0m0-82h0m0 55h0m0 48h0m0-83h0m0 82h0m0-13h0m0-51h0m0 47h0m1-25h0m0-61h0m0-6h0m0 109h0m0-103h0m1 96h0m0-46h0m0-51h0m0 86h0m0 28h0m0-55h0m0-50h0m0 42h0m1 28h0m0-51h0m0 31h0m0-11h0m0 10h0m0-19h0m1 2h0m0-38h0m1 42h0m0-19h0m0 34h0m0 64h0m0 34h0m0-111h0m0-36h0m0 29h0m1 81h0m0-24h0m0 0h0m0-86h0m0 0h0m0 77h0m0-117h0m0 67h0m1 36h0m0 13h0m0-31h0m0-8h0m1 40h0m0 45h0m0-6h0m0-114h0m0 12h0m0 84h0m0-67h0m0 79h0m0-95h0m0 19h0m0-15h0m0 109h0m0-3h0m1-51h0m0-31h0m0-9h0m0-10h0m0-4h0m0 44h0m0 18h0m0 29h0m0 6h0m0-86h0m0 42h0m0 39h0m0 7h0m1-33h0m0-88h0m0 79h0m0-39h0m0-19h0m0 97h0m0-90h0m0 97h0m0-99h0m0-40h0m0 61h0m0 79h0m1-73h0m0-30h0m0 112h0m0-105h0m0 49h0m0 3h0m0-61h0m0 4h0m1 35h0m0 60h0m0 4h0m0-116h0m0-10h0m0 139h0m0-103h0m1-16h0m1-14h0m0 92h0m0-111h0m0 77h0m0 53h0m0-1h0m0-127h0m0 66h0m0-60h0m0 120h0m0-132h0m1 4h0m0 16h0m0 95h0m0-86h0m0-7h0m0 75h0m0 48h0m0-95h0m0 17h0m0 2h0m0 36h0m0-14h0m0 33h0m0 13h0m0-110h0m1 119h0m0-126h0m0 80h0m0-82h0m0 78h0m0 16h0m0-14h0m0-44h0m0 3h0m1 9h0m0-30h0m0 93h0m0-41h0m0-63h0m0 5h0m0 75h0m0-148h0m0 77h0m0 37h0m0 65h0m0-57h0m1 63h0m0-5h0m0-5h0m0-14h0m1-20h0m0 55h0m0-116h0m0 23h0m0-14h0m0-19h0m0-31h0m0-24h0m1 38h0m0 35h0m0-35h0m0 26h0m0 83h0m0-60h0m0 52h0m1-152h0m0 38h0m0-50h0m0 171h0m0-108h0m0 14h0m0-20h0m0 32h0m0-77h0m0 28h0m0-29h0m0 7h0m0 87h0m0 79h0m1-16h0m0-146h0m0 114h0m0-77h0m0 61h0m0 7h0m0-86h0m0 47h0m0 29h0m0-35h0m0-43h0m0 23h0m0-38h0m0 61h0m0-71h0m0 25h0m1 2h0m0 74h0m0-36h0m0-82h0m0 62h0m0-68h0m0 171h0m0-7h0m0-5h0m0-41h0m0-46h0m0 9h0m0 82h0m1-50h0m0-10h0m0 40h0m0-13h0m0-38h0m0 73h0m1 9h0m0-128h0m0 11h0m0-9h0m0 126h0m0-40h0m0-35h0m0 21h0m0 26h0m0-45h0m0 55h0m1-35h0m0-21h0m0-39h0m0 8h0m0-31h0m0 14h0m0 21h0m0 94h0m0-55h0m0 3h0m0-67h0m0 18h0m0 46h0m1-69h0m0 26h0m0 57h0m0-33h0m0-48h0m0 76h0m0-44h0m0 62h0m0-51h0m0-92h0m1 3h0m0 109h0m0 22h0m0-129h0m0 30h0m0 34h0m1 14h0m0-79h0m0 163h0m0-64h0m0-86h0m0 91h0m0-84h0m0 39h0m0-63h0m0 99h0m0-48h0m1 15h0m0 61h0m0 25h0m0-79h0m0 43h0m0-39h0m0 58h0m1 1h0m0-57h0m0 26h0m0-32h0m1 69h0m0-71h0m0-55h0m0 132h0m0-73h0m0 1h0m0 87h0m1-39h0m0 18h0m0-76h0m0-33h0m0 121h0m0-5h0m0-11h0m0-58h0m0 0h0m0-7h0m1 68h0m0-76h0m0 103h0m0-94h0m0 0h0m0-57h0m0 96h0m0-86h0m1 139h0m0-100h0m0 10h0m0 35h0m0 6h0m0 15h0m0-5h0m0 36h0m0-4h0m0-15h0m1 16h0m0-9h0m0-25h0m0-9h0m0-27h0m0 73h0m0-14h0m0-20h0m0-40h0m0 37h0m1 38h0m0 2h0m0-21h0m0-9h0m0-8h0m1 42h0m0-63h0m0 20h0m0 7h0m0-33h0m0 9h0m0-4h0m0 33h0m0-29h0m0-12h0m0-54h0m0 85h0m0 65h0m1-129h0m0 94h0m0-33h0m0 54h0m0-53h0m0-21h0m0 79h0m1-9h0m0-62h0m0 33h0m0-50h0m0 70h0m0-77h0m0-1h0m0-15h0m1 91h0m0 14h0m0 6h0m0-20h0m0-75h0m0 2h0m0-7h0m0 88h0m1-99h0m0 0h0m1 48h0m0 48h0m0-67h0m1 5h0m0-34h0m0 78h0m0-25h0m2-39h0m0 9h0m0-7h0m0 57h0m0 21h0m0-62h0m0 24h0m0 60h0m0-78h0m1-11h0m0 11h0m0 58h0m0 5h0m0-60h0m0 27h0m0-84h0m0 117h0m0 4h0m0-105h0m0 99h0m1 15h0m0-78h0m0 87h0m0 7h0m0 21h0m0-89h0m1 29h0m0-64h0m0 45h0m0 62h0m0-53h0m0 54h0m0 2h0m0-67h0m0-12h0m0 16h0m1-54h0m0 135h0m0-23h0m0-42h0m0-30h0m0 2h0m0 0h0m1 2h0m0-34h0m0 106h0m0 2h0m0-16h0m0-3h0m1-99h0m0 22h0m0 43h0m0 68h0m0-82h0m0-31h0m0 55h0m0-68h0m0 20h0m0 50h0m1-28h0m0-45h0m0-25h0m0 78h0m0 27h0m0-46h0m0 60h0m0 6h0m0 39h0m0-129h0m1 131h0m0-30h0m0-70h0m0-7h0m0 72h0m0-90h0m0 9h0m0 12h0m0 70h0m0-105h0m0 114h0m1-91h0m0-4h0m0 37h0m0 17h0m0-17h0m0-47h0m0 89h0m0 17h0m0-29h0m0-49h0m0 100h0m0-136h0m0 130h0m1-8h0m0 7h0m1-47h0m0-82h0m0 23h0m0-3h0m0 38h0m0 76h0m0-84h0m0-90h0m0 116h0m1-68h0m0 7h0m0 22h0m0 71h0m0-27h0m0 31h0m1-41h0m0 26h0m0-5h0m0-20h0m0 31h0m0-69h0m0 1h0m0 3h0m0 25h0m0 10h0m1 32h0m0-94h0m0 34h0m0 83h0m0-56h0m0 6h0m0-99h0m0 69h0m0 97h0m1-84h0m0 41h0m0 13h0m0 20h0m0-54h0m0-33h0m0 65h0m0-101h0m1-17h0m0 40h0m0 47h0m0 20h0m0-9h0m0 36h0m0-133h0m0 38h0m0 44h0m0-41h0m1 69h0m0-94h0m0 24h0m0 45h0m0-7h0m0-50h0m0 66h0m1-8h0m0 46h0m0-176h0m0 70h0m0 10h0m0 4h0m0 46h0m1-36h0m0 76h0m0-76h0m0 28h0m0 50h0m0-15h0m0-145h0m1 70h0m0-30h0m0 69h0m0-63h0m0-42h0m0 110h0m1-56h0m0-9h0m0 31h0m0 22h0m0 18h0m1-84h0m0 93h0m0-100h0m0 26h0m0-11h0m0-15h0m0 114h0m0-89h0m0 84h0m0-18h0m0-89h0m0 14h0m0 64h0m1-55h0m0 80h0m0-31h0m0-8h0m0-33h0m1-21h0m0 92h0m1-66h0m0-13h0m0-47h0m0 92h0m0-105h0m0 47h0m0-3h0m0 65h0m0-95h0m0 29h0m0 48h0m0-9h0m0-22h0m1-5h0m0 48h0m0-46h0m0-21h0m0 72h0m0 26h0m0-87h0m0 54h0m0-46h0m0 16h0m0 33h0m0-64h0m0 20h0m1-46h0m0 44h0m0 72h0m0-63h0m0-9h0m0-10h0m1 50h0m0-27h0m0 8h0m0 2h0m0-7h0m0-14h0m0-9h0m0 62h0m0 4h0m1 32h0m0-120h0m0 27h0m0 38h0m0-27h0m0 34h0m0 11h0m0-67h0m0 40h0m0 4h0m0-21h0m0 2h0m0 23h0m1-10h0m0 29h0m0-38h0m0-69h0m0 59h0m0-8h0m0 0h0m1 49h0m0-50h0m0 53h0m0-74h0m0 64h0m0-60h0m0 15h0m0 22h0m0-54h0m1 12h0m0-6h0m0 70h0m0-45h0m0-17h0m0-13h0m0 56h0m0 36h0m0-58h0m1-31h0m0 86h0m0-49h0m0-23h0m0 56h0m0-33h0m0-17h0m0 30h0m0-54h0m0-48h0m1 104h0m0 0h0m0 14h0m0-52h0m0 4h0m0 17h0m0 49h0m1-95h0m0 69h0m0-55h0m0 77h0m0-62h0m0-7h0m0 6h0m0 19h0m1 43h0m0 35h0m0-25h0m0-20h0m0-23h0m0 36h0m0-29h0m1 26h0m0-69h0m1 34h0m0-18h0m0 62h0m0 15h0m0-98h0m0 98h0m0-28h0m0-50h0m0 2h0m0 21h0m0 65h0m1-108h0m0 60h0m0-27h0m1-29h0m0 54h0m0 21h0m0-41h0m0-55h0m1 65h0m0 48h0m0-68h0m0 28h0m0 26h0m0-6h0m0-126h0m0 83h0m0-49h0m0 122h0m1-144h0m0 103h0m0-112h0m0 124h0m0-53h0m0 35h0m0 17h0m0 26h0m0-99h0m0-43h0m0 32h0m1-11h0m0 40h0m0 69h0m0-35h0m0-48h0m0 31h0m0-6h0m0 6h0m0 18h0m0-44h0m0 27h0m0 31h0m1-110h0m0-32h0m0 169h0m0-126h0m0-8h0m0 76h0m0-70h0m0 44h0m0 28h0m0 60h0m0-73h0m0-75h0m0 134h0m0-103h0m1 77h0m0 38h0m0-96h0m0 58h0m0-81h0m0-1h0m0 105h0m0-69h0m0-85h0m0 103h0m0-63h0m0 108h0m0-44h0m0-48h0m1 39h0m0-40h0m0 31h0m0 60h0m0 13h0m0 0h0m0-118h0m0 106h0m0-126h0m0 36h0m0 80h0m0-53h0m0 28h0m1-94h0m0 31h0m0 96h0m0-92h0m0 98h0m0-19h0m0 22h0m0-55h0m0 54h0m0-112h0m0 77h0m0-128h0m0 114h0m0 8h0m0 35h0m1-114h0m0 85h0m0-14h0m0-11h0m0 47h0m0-94h0m0 91h0m0 7h0m0-25h0m0-115h0m0-16h0m1 109h0m0-42h0m0 80h0m0-94h0m0 0h0m0 52h0m0-67h0m0 119h0m0-60h0m0-21h0m0 32h0m0-6h0m1-38h0m0-42h0m0 96h0m0 1h0m0-16h0m0 37h0m0 21h0m0-83h0m0 80h0m1-51h0m0-32h0m0 45h0m0-109h0m0 174h0m0-32h0m0-66h0m0-3h0m0-92h0m0 120h0m1-102h0m0 183h0m0-38h0m0-26h0m1 20h0m0-51h0m0 9h0m0-52h0m0 63h0m0-49h0m0-2h0m0 16h0m0 44h0m0-35h0m0 51h0m0-75h0m0-14h0m1 97h0m0-83h0m0 13h0m0 35h0m0-71h0m0 21h0m0-18h0m0 83h0m0-90h0m0 68h0m0-12h0m0-47h0m0-28h0m0 65h0m1 79h0m0-41h0m0-19h0m0-111h0m0 50h0m0 12h0m0 47h0m0-40h0m0-42h0m0 53h0m0-64h0m0 123h0m1-78h0m0 13h0m0-25h0m0-26h0m0 23h0m0 12h0m0-13h0m0 77h0m1 3h0m0-23h0m0-9h0m0 34h0m0-44h0m0 84h0m0-154h0m0 124h0m0 31h0m0-65h0m0 6h0m0-32h0m1 59h0m0-10h0m0-60h0m0 10h0m0 49h0m0-57h0m1 96h0m0-121h0m0 64h0m0-91h0m0 5h0m0 0h0m0 130h0m0-34h0m1-4h0m0 53h0m0-47h0m0 62h0m0-98h0m0 81h0m0-25h0m1-5h0m0-56h0m0 28h0m0-10h0m0-14h0m1 34h0m0 23h0m0 3h0m0-42h0m0 28h0m0 15h0m0 8h0m0 2h0m0 17h0m0 1h0m0-83h0m0 71h0m0-32h0m1 15h0m0-21h0m0 44h0m0-40h0m0 8h0m0 43h0m1-106h0m0 121h0m0-139h0m0 75h0m0-23h0m0-28h0m0 69h0m0 48h0m0-94h0m0 93h0m0-7h0m0-96h0m0 88h0m0-6h0m1-29h0m0-4h0m0-21h0m0-24h0m0 38h0m0 16h0m0-60h0m0 46h0m0 59h0m1 15h0m0-80h0m0 3h0m0 56h0m0-80h0m0-4h0m0 50h0m0-87h0m0-15h0m0 80h0m0 36h0m0-38h0m1 49h0m0-91h0m0 48h0m0-50h0m0 22h0m0 95h0m0-73h0m0 72h0m0-161h0m0 69h0m0 89h0m0-75h0m0 33h0m0 2h0m0 6h0m0-58h0m0-20h0m0-14h0m1 56h0m0 69h0m0-48h0m0 17h0m0-94h0m0 4h0m0 38h0m0 90h0m0-41h0m1 19h0m0-81h0m0-38h0m0 123h0m0-48h0m0-9h0m0-21h0m0 37h0m1 29h0m0 26h0m0-116h0m0 98h0m0 8h0m0-101h0m0 80h0m1-53h0m0-13h0m0-15h0m0 42h0m1-40h0m0 48h0m0 61h0m0-18h0m0-43h0m0 65h0m0-115h0m0 72h0m0 38h0m0-111h0m0 1h0m0 80h0m1-50h0m0-28h0m0 41h0m0-46h0m0 31h0m0 0h0m0-8h0m0 11h0m0-15h0m0-11h0m1 16h0m0-25h0m0 144h0m0-65h0m0 24h0m0 7h0m0-44h0m1 35h0m0-22h0m0-26h0m0-2h0m0-91h0m0 129h0m0-53h0m0-5h0m0 62h0m1-77h0m0 68h0m0-34h0m0 20h0m0-45h0m0 8h0m0 43h0m0-76h0m0 98h0m1-26h0m0-87h0m0 56h0m0 75h0m0-113h0m0 77h0m1-11h0m0 13h0m0-50h0m0 67h0m0-74h0m0-14h0m0 76h0m0-5h0m1-54h0m0-4h0m0-1h0m0 57h0m0-30h0m0 1h0m0-28h0m0 57h0m1-20h0m0-25h0m0 1h0m0-5h0m0 45h0m0-87h0m0 20h0m1 20h0m0 26h0m0 2h0m0-23h0m0-17h0m0 108h0m0-84h0m0-36h0m0 25h0m0-28h0m0-62h0m0 76h0m1-74h0m0 45h0m0-48h0m0 111h0m0-86h0m0 28h0m0 26h0m0 60h0m0-33h0m1-35h0m0 31h0m0-118h0m0 121h0m0 35h0m0-40h0m1-123h0m0 137h0m0-33h0m0-41h0m0-7h0m0-62h0m0 67h0m0 52h0m0-16h0m1 53h0m0-13h0m0-48h0m0 48h0m0-7h0m1-129h0m0 123h0m0-130h0m0 58h0m0 83h0m0-5h0m0-83h0m0 56h0m0-38h0m0 78h0m0-71h0m0-70h0m0-11h0m1 103h0m0 13h0m0 19h0m0 11h0m0 6h0m0-82h0m0 9h0m1 67h0m0-107h0m0 115h0m0-56h0m0 35h0m0-75h0m1 29h0m0 57h0m0-58h0m0 42h0m0 8h0m0-119h0m0 104h0m0-43h0m0 4h0m0 108h0m1-82h0m0-6h0m0 19h0m0-60h0m0 41h0m0-17h0m0 57h0m0-26h0m0-60h0m0 68h0m0-42h0m0 48h0m0-102h0m0 52h0m1 4h0m0 46h0m0-85h0m0 36h0m0 67h0m0-114h0m1 143h0m0-93h0m0 51h0m0-90h0m0 157h0m0-159h0m0-28h0m0 83h0m0-55h0m0 99h0m0-138h0m1 0h0m0 11h0m0 61h0m0 39h0m0 11h0m0-105h0m0 123h0m1-65h0m0 3h0m0 29h0m0-32h0m1 6h0m0-35h0m0 30h0m0 46h0m0-103h0m0 57h0m0-3h0m0 67h0m0-40h0m0-91h0m1-4h0m0 60h0m0 8h0m0-25h0m0 104h0m0-74h0m0-45h0m0 108h0m0-83h0m0 29h0m0 32h0m0-23h0m1-80h0m0 108h0m0-10h0m0-7h0m0 32h0m1 25h0m0-37h0m0-49h0m0 18h0m0 24h0m0 42h0m0-11h0m1 1h0m0-76h0m0 69h0m0-18h0m0-25h0m0 23h0m0-29h0m0 61h0m0-39h0m0 5h0m1-17h0m0 33h0m0 21h0m0-52h0m0-3h0m0 35h0m0 83h0m1-85h0m0-10h0m1-38h0m0 42h0m0-10h0m0-46h0m0 66h0m0 26h0m0 1h0m0-83h0m1 56h0m0 25h0m0-60h0m0-74h0m0 79h0m0 84h0m1-83h0m0 74h0m0-84h0m0-8h0m1 43h0m0 43h0m0-85h0m0 46h0m0 22h0m0-36h0m0 54h0m0-21h0m1 11h0m0-75h0m0 31h0m0-1h0m0 8h0m0-43h0m0 22h0m0 66h0m0-65h0m0 10h0m1-56h0m0 96h0m0 31h0m0-59h0m0 53h0m0 14h0m0-70h0m0 80h0m1-42h0m0-59h0m0 84h0m0-18h0m0-15h0m0 10h0m0-6h0m0-4h0m1-34h0m0 62h0m0 7h0m0-77h0m0 88h0m0-67h0m0 18h0m0 35h0m0-61h0m1-32h0m0 57h0m0 28h0m0-18h0m0-2h0m0 21h0m0-54h0m0-29h0m1-13h0m0 120h0m0-84h0m1 65h0m0 12h0m0-84h0m0 11h0m0-44h0m0-6h0m0 111h0m0-30h0m1-38h0m0 86h0m0-22h0m0-36h0m0 32h0m0 12h0m0-81h0m0 13h0m1 67h0m0-73h0m0 74h0m0-106h0m0-33h0m0 78h0m0-51h0m0 50h0m0-44h0m1 105h0m0-48h0m0-69h0m0 35h0m0 79h0m1-27h0m0-70h0m0 13h0m0-44h0m0 133h0m0-36h0m1 17h0m0-89h0m0-5h0m0 102h0m0-46h0m0 70h0m0-5h0m0-34h0m0-48h0m0 102h0m1-135h0m0 26h0m0 7h0m0 43h0m0-16h0m0 19h0m0-88h0m0 60h0m0-56h0m0-10h0m0 20h0m0 119h0m1-171h0m0 45h0m0-13h0m0 149h0m1-78h0m0 21h0m0-48h0m0 1h0m0 79h0m0 4h0m0-36h0m1-33h0m0-26h0m0-25h0m1 58h0m0-66h0m0 68h0m1-19h0m0 3h0m0-35h0m0 53h0m0-59h0m0 34h0m0-107h0m0 164h0m0-82h0m0-81h0m1 63h0m0-5h0m0 44h0m0-40h0m0 49h0m0-52h0m0-1h0m0 43h0m0 39h0m1-31h0m0-33h0m0 20h0m0-28h0m0-9h0m0 97h0m0-60h0m0-96h0m0 50h0m0 93h0m0 18h0m1-63h0m0-18h0m0-16h0m0 77h0m0-51h0m0-15h0m1-81h0m0 56h0m0 57h0m0 37h0m0 9h0m0-166h0m0 116h0m0-41h0m0 65h0m0-137h0m0 56h0m0 65h0m1 15h0m0-12h0m0 18h0m0-20h0m0-47h0m0-72h0m0 159h0m0-17h0m0 2h0m0 13h0m0-87h0m0 41h0m1-19h0m0 22h0m0-41h0m0-10h0m0 85h0m0-88h0m0 29h0m0 17h0m0 20h0m0-27h0m1 28h0m0-59h0m0 52h0m0-49h0m0-17h0m0 98h0m0-166h0m0 76h0m0-9h0m0 65h0m1 8h0m0-104h0m0 132h0m0-47h0m0 8h0m0-87h0m0 113h0m0-62h0m0 23h0m0-5h0m0 47h0m0-12h0m1 16h0m0-18h0m0 6h0m0-13h0m0 44h0m0-21h0m0-88h0m0 56h0m1-20h0m0-58h0m0 68h0m0 33h0m0-3h0m1-72h0m0 76h0m0-14h0m0-56h0m0-2h0m0 2h0m0-17h0m0 14h0m0 79h0m0-84h0m1 46h0m1 23h0m0-62h0m0-55h0m0 55h0m0 11h0m0 32h0m0-11h0m0-101h0m1 23h0m0-1h0m0 30h0m0-38h0m0 54h0m0-53h0m0 137h0m1-19h0m0-25h0m0-55h0m0 49h0m0 15h0m0-104h0m0 139h0m0-72h0m0-83h0m1 68h0m0 37h0m0 45h0m0 15h0m0-68h0m0 37h0m0-89h0m0 36h0m0-7h0m1 91h0m0 1h0m0-27h0m0-45h0m0 21h0m0-2h0m1-2h0m0-1h0m0 13h0m0 17h0m0-31h0m1 0h0m0 29h0m0-58h0m0 21h0m1 2h0m0 64h0m0-86h0m1 28h0m1-26h0m0-9h0m0 8h0m0 6h0m0 54h0m1-37h0m0 39h0m0-4h0m0-65h0m0 68h0m1-2h0m0-15h0m0 11h0m0-54h0m0 56h0m0-19h0m0 49h0m0-56h0m0 29h0m0 12h0m1 16h0m0-8h0m0-53h0m0 39h0m0-71h0m0 35h0m0 32h0m1-92h0m0 35h0m0-25h0m0 13h0m0-62h0m0 63h0m0 17h0m0 26h0m0-80h0m0 95h0m0-69h0m0 73h0m1-21h0m0 49h0m0-100h0m0 29h0m0 73h0m0-45h0m0 7h0m0-7h0m0-15h0m0-35h0m0 1h0m0 69h0m0-24h0m0-102h0m0 137h0m0-96h0m1 131h0m0-50h0m0-42h0m0-75h0m0 87h0m0-119h0m0 21h0m0 59h0m0 116h0m0-122h0m0 86h0m1-2h0m0-48h0m0 13h0m0 60h0m0-47h0m0-15h0m0-84h0m0-19h0m0 126h0m0 76h0m0-89h0m0 30h0m0-56h0m1 27h0m0 17h0m0-126h0m0 129h0m0-130h0m0 169h0m1-34h0m0-16h0m0-57h0m0 3h0m0 15h0m0-39h0m0-10h0m0 26h0m0 56h0m1-21h0m0 95h0m0-82h0m0-49h0m0 7h0m0 2h0m0 55h0m0-25h0m0-3h0m0 48h0m0-34h0m1-130h0m0 204h0m0-124h0m0 118h0m0-94h0m0-17h0m0 7h0m0-13h0m0 119h0m0-183h0m0 8h0m0 77h0m1-20h0m0 43h0m0 20h0m0-13h0m0-40h0m0-39h0m0 74h0m0 10h0m0-128h0m0 145h0m0-59h0m0-48h0m0 72h0m0-37h0m0 26h0m0-28h0m0 120h0m0-18h0m0-67h0m1 98h0m0-43h0m0-30h0m0 14h0m0 3h0m0 20h0m0-58h0m0-27h0m1 69h0m0-23h0m0 80h0m0-19h0m0-11h0m1-85h0m0 74h0m0 37h0m0-92h0m0 56h0m0-4h0m0 25h0m0-110h0m0 8h0m0 14h0m0 20h0m0 68h0m0-106h0m1 3h0m0 106h0m0-115h0m0 59h0m0-106h0m0 118h0m0 49h0m0-67h0m0 54h0m1-76h0m0 129h0m0-156h0m0 142h0m0-45h0m0-88h0m0 6h0m0-18h0m0 59h0m0-5h0m0-5h0m0 58h0m0-35h0m0 37h0m0-63h0m1 6h0m0-9h0m0 81h0m0-69h0m0 69h0m0-83h0m0 19h0m0-62h0m1 68h0m0-1h0m0 50h0m0-83h0m0 4h0m0 78h0m0-79h0m0 17h0m0 59h0m1-75h0m0 5h0m0-6h0m0 38h0m0 5h0m0-15h0m1 60h0m0-64h0m0 40h0m0-49h0m0-4h0m0 26h0m0 26h0m0-152h0m1 87h0m0-3h0m0 12h0m0 25h0m0-41h0m0 20h0m0 57h0m1 12h0m0-79h0m0 88h0m0-98h0m1 43h0m0-1h0m1 21h0m0-27h0m0-34h0m0 97h0m0-92h0m0 37h0m0-33h0m1 70h0m0-68h0m0-44h0m0 74h0m0 25h0m0-43h0m0 70h0m0-45h0m0-43h0m0 63h0m1-39h0m0-33h0m0 66h0m0-34h0m1-22h0m0 52h0m0 21h0m0-86h0m0 19h0m0 51h0m1 17h0m0-33h0m0-24h0m0 68h0m0-46h0m0 16h0m0-20h0m0-4h0m0 54h0m0-10h0m1-91h0m0 23h0m0 65h0m0-73h0m0 50h0m0-56h0m0-15h0m0 85h0m0-62h0m1-5h0m0 69h0m0-77h0m0 99h0m0-34h0m0-44h0m1-33h0m0 29h0m0 34h0m0-18h0m0 2h0m0-31h0m1 21h0m0-11h0m0 52h0m0-68h0m0 75h0m1 0h0m0-67h0m1-15h0m0 3h0m0 17h0m0 76h0m0-61h0m0 31h0m0 8h0m1-96h0m0 109h0m0-96h0m0 69h0m0 11h0m0-22h0m0 4h0m0-33h0m1 20h0m0-8h0m0 18h0m0-86h0m1 37h0m0 54h0m0-97h0m0 68h0m1 50h0m0-60h0m0 32h0m0-64h0m0 62h0m1 27h0m0-14h0m0 16h0m0-46h0m0 22h0m1-37h0m0 61h0m0-45h0m0 15h0m0-53h0m1 91h0m0-7h0m0-15h0m0-19h0m0 4h0m0-65h0m1-46h0m0 32h0m0 6h0m0 45h0m0-56h0m0-10h0m0 75h0m0-49h0m0-5h0m0-37h0m0 61h0m1-64h0m0 91h0m0 3h0m0-6h0m0 4h0m0 49h0m0-89h0m1 48h0m0-56h0m0-55h0m0-5h0m0 157h0m0-88h0m0 96h0m0-9h0m0-61h0m1-42h0m0 56h0m0-51h0m0 27h0m0 52h0m0-119h0m0-5h0m0 109h0m0-30h0m0-99h0m1 125h0m0-124h0m0 14h0m0 0h0m0 57h0m1 12h0m0-26h0m0 65h0m0-43h0m0 2h0m0 48h0m0-13h0m0 39h0m1-67h0m0 65h0m0-78h0m0-62h0m0 123h0m0-15h0m0-1h0m1 15h0m0-51h0m0-33h0m0 0h0m1-42h0m0 51h0m0 35h0m0-95h0m0 72h0m0 97h0m0-94h0m0-17h0m0 67h0m0 7h0m1-32h0m0 24h0m0-33h0m0-95h0m0 79h0m0 38h0m1-50h0m0-29h0m0 61h0m0 17h0m0 42h0m0-126h0m0 102h0m0-35h0m0 25h0m0-84h0m0 107h0m1-21h0m0 25h0m0-106h0m0 17h0m0-33h0m0 33h0m0-36h0m0 122h0m1-69h0m0 6h0m0-25h0m0-24h0m0-13h0m0 88h0m0 37h0m0-18h0m1-14h0m0-85h0m0 32h0m0-2h0m0 0h0m0 59h0m0-65h0m0 72h0m0-39h0m0 34h0m0-68h0m0 67h0m1-13h0m0-11h0m0-76h0m0 25h0m0 97h0m0-95h0m0 92h0m0 28h0m0-122h0m1 91h0m0-21h0m0-40h0m0 5h0m0 8h0m1 17h0m0 37h0m0-6h0m1-46h0m0-73h0m0 41h0m0 20h0m0 37h0m0-60h0m1-31h0m0 20h0m0 80h0m0 8h0m0-108h0m0 84h0m0-20h0m0 45h0m1-6h0m0-103h0m0 70h0m0 49h0m0-69h0m1 41h0m0 8h0m0-11h0m0 9h0m1 4h0m0 9h0m1 24h0m0 2h0m0-80h0m0 40h0m0-25h0m0 78h0m0 6h0m0 0h0m1-22h0m0-19h0m0-36h0m0 53h0m0-79h0m0 95h0m1-46h0m0-23h0m0 83h0m0-14h0m0-43h0m1-6h0m0 43h0m0-80h0m0 37h0m1 44h0m0-82h0m0 94h0m0-15h0m0-28h0m0-30h0m0 23h0m0 41h0m0-84h0m0 49h0m0-22h0m1 70h0m0-23h0m0-63h0m1 73h0m0-40h0m0 73h0m0-93h0m0-33h0m0 126h0m0 8h0m1-87h0m0-46h0m0 114h0m0-42h0m0 49h0m0 5h0m0-98h0m1 59h0m0-66h0m0 1h0m0 69h0m0 30h0m0-105h0m0-12h0m1 112h0m0 25h0m0-25h0m0-103h0m0 27h0m0 102h0m1-83h0m0-33h0m0 88h0m0-78h0m1 61h0m0-19h0m0-30h0m0 82h0m0-15h0m0-94h0m0 96h0m0-25h0m0 15h0m0-67h0m0-33h0m1 17h0m0 37h0m0 10h0m0 9h0m0 10h0m0-48h0m0 10h0m1-51h0m0 88h0m0-19h0m0-62h0m0 83h0m0-12h0m0 24h0m1 12h0m0-7h0m0 12h0m0-6h0m0-11h0m0-68h0m1 90h0m0-110h0m0 104h0m0-34h0m0 3h0m0-44h0m0 47h0m0 27h0m0-88h0m0 68h0m0 7h0m0-82h0m1 70h0m0-87h0m0 30h0m0 72h0m0-18h0m1-71h0m0 7h0m0 60h0m0-74h0m0 17h0m0 37h0m0-41h0m0 72h0m0-3h0m1-46h0m0-83h0m0 60h0m0 67h0m0-18h0m0-74h0m0 89h0m1-19h0m0 31h0m0-77h0m1 21h0m0 55h0m1-36h0m0 18h0m0-32h0m0 39h0m0-55h0m0 6h0m0 34h0m0-57h0m0-46h0m1 13h0m0 2h0m0 13h0m0 96h0m0-100h0m0 83h0m0-144h0m1 66h0m0-18h0m0 75h0m0-29h0m0-28h0m1-46h0m0-23h0m0 136h0m0-71h0m0 26h0m0-85h0m0 96h0m1-82h0m0 6h0m0 75h0m0-41h0m1 89h0m0-121h0m0 90h0m0-126h0m0 97h0m0-93h0m0 113h0m0-40h0m0-85h0m1 61h0m0 23h0m0 79h0m0-128h0m0 83h0m0-86h0m0 19h0m0 91h0m0-14h0m0-81h0m1 42h0m0-17h0m0 7h0m0-50h0m0 145h0m0-56h0m0 49h0m0-36h0m0-45h0m0 91h0m1-32h0m0-123h0m0 85h0m0 49h0m0-94h0m1 40h0m0-15h0m0-66h0m0 131h0m0-54h0m0 79h0m0-61h0m0-94h0m0 65h0m0-33h0m1 152h0m0-159h0m0 12h0m0 118h0m0-54h0m0 6h0m0-15h0m0 20h0m0 12h0m0 15h0m0-24h0m0-26h0m1 29h0m0 11h0m0-38h0m0 59h0m0-58h0m0 25h0m0 37h0m0-79h0m1 28h0m0 66h0m0-29h0m0-9h0m0-31h0m0 53h0m0-20h0m0-53h0m0 62h0m0-53h0m0 42h0m1 29h0m0-64h0m0 13h0m0 29h0m0-67h0m0 87h0m1-6h0m0-38h0m0 38h0m0 22h0m0-64h0m1 16h0m0 39h0m0-64h0m0-29h0m0 1h0m0 49h0m1 31h0m0-61h0m0-14h0m0 33h0m0-34h0m0 45h0m0-52h0m1 86h0m0-47h0m0-30h0m0-5h0m0 113h0m0-22h0m0 21h0m0-10h0m1-102h0m0 104h0m0-18h0m0 23h0m0-61h0m0-36h0m0 91h0m1-99h0m0 24h0m0-14h0m0-8h0m0 86h0m0-37h0m0 51h0m0-66h0m1 1h0m0-24h0m0-6h0m0 38h0m1 29h0m0-33h0m0 38h0m0-48h0m0-34h0m0 50h0m0 28h0m0-1h0m1-61h0m0-10h0m0 77h0m0 5h0m0-67h0m0-15h0m1 9h0m0 61h0m0-82h0m0 81h0m0 0h0m0-2h0m0-80h0m1-26h0m0 109h0m0-100h0m0 45h0m0-75h0m0 133h0m0-42h0m0-48h0m0 51h0m0-53h0m0-6h0m0-40h0m1 119h0m0-17h0m0-59h0m0 47h0m0-25h0m0 36h0m0-59h0m0-6h0m0 79h0m1-72h0m0 90h0m0-142h0m0 33h0m0-54h0m0 117h0m0-12h0m0 27h0m0-56h0m1-55h0m0 137h0m0-26h0m0-51h0m0-9h0m0 34h0m0-90h0m0 133h0m0-150h0m0 76h0m0 42h0m1 16h0m0 46h0m0-130h0m0-40h0m0 97h0m0-34h0m0 69h0m0-16h0m0-7h0m0-43h0m0-23h0m1-36h0m0 42h0m0 73h0m0-4h0m0 27h0m0-88h0m0 13h0m1 6h0m0 27h0m0-33h0m0 37h0m0-69h0m0 17h0m0-9h0m0 21h0m0 88h0m0-68h0m1 18h0m0-42h0m0 7h0m0-13h0m0-69h0m0 170h0m0-41h0m0 11h0m0-74h0m1-35h0m0 134h0m0-30h0m0-97h0m0 80h0m0-3h0m0 15h0m0-71h0m0 10h0m0 31h0m1-65h0m0 59h0m0 35h0m0 67h0m0-92h0m0-64h0m1 66h0m0-47h0m0-46h0m0 111h0m0-101h0m0-16h0m0 110h0m0-107h0m0 196h0m0-143h0m0 42h0m0 23h0m0 43h0m1 7h0m0-106h0m0 6h0m0 59h0m0-20h0m0-70h0m0 99h0m0 16h0m0-121h0m0 124h0m0-127h0m1 43h0m0 47h0m0-3h0m0-55h0m0 79h0m0-120h0m0 89h0m1 25h0m0-16h0m0-30h0m0 44h0m0-88h0m0 58h0m0 5h0m0 66h0m0-15h0m0-28h0m1 45h0m0-57h0m0-3h0m0 9h0m0-36h0m0 0h0m0 8h0m1-25h0m0 43h0m0 26h0m0 28h0m0-34h0m0-102h0m0 80h0m0 12h0m0-66h0m0 34h0m0 89h0m1-48h0m0 47h0m0-93h0m0 57h0m0-50h0m0-1h0m0 48h0m0 44h0m0-83h0m0 72h0m1-75h0m0 68h0m0-53h0m0-16h0m0 31h0m0 20h0m0-80h0m0 102h0m0 21h0m0-117h0m0 31h0m0-24h0m1 4h0m0 93h0m0-95h0m0 94h0m0-91h0m0-14h0m0 76h0m0-67h0m0 37h0m0 17h0m0 47h0m0-83h0m0-59h0m0 155h0m0-21h0m0-10h0m0-68h0m0 66h0m1 19h0m0-38h0m0-48h0m0-18h0m0 18h0m0 58h0m0 24h0m0 14h0m1-86h0m0-84h0m0 44h0m0 9h0m0 72h0m0 14h0m0 26h0m0-98h0m1 51h0m0 7h0m0-26h0m0-83h0m0 72h0m1-19h0m0 99h0m0-53h0m0 6h0m0 45h0m0-68h0m0-12h0m0 15h0m0 64h0m0-46h0m0-66h0m0 35h0m0-54h0m1 13h0m0 4h0m0-26h0m0 15h0m0 62h0m0-69h0m0 2h0m0 28h0m0-46h0m0 34h0m0 63h0m0-1h0m1-56h0m0 59h0m0-6h0m0-48h0m0-11h0m0 19h0m0 70h0m0-94h0m0 38h0m0 21h0m1 3h0m0-25h0m0 55h0m0-15h0m0-13h0m0 51h0m1-77h0m0-31h0m0 32h0m0-33h0m1 44h0m0 122h0m0-48h0m0-48h0m0-109h0m0 70h0m1-17h0m0-22h0m0-32h0m0 10h0m0 147h0m0-43h0m0 14h0m0-92h0m0 97h0m0-98h0m0 41h0m0 67h0m0-110h0m1 73h0m0 49h0m0-1h0m0-29h0m0-75h0m0-18h0m0 106h0m0-108h0m0 130h0m1-97h0m0-37h0m0-12h0m0 68h0m0 76h0m0-62h0m0-13h0m0-77h0m0-15h0m0 101h0m0-65h0m0 65h0m0 44h0m0-91h0m1 38h0m0-72h0m0 102h0m0 29h0m0-68h0m0 39h0m0-18h0m0-35h0m0 80h0m0-40h0m0 32h0m1-95h0m0 19h0m0-23h0m0 125h0m0-121h0m0-2h0m0-16h0m0 110h0m0-78h0m1 79h0m0-47h0m0 14h0m0-17h0m0 2h0m0-35h0m1 66h0m0-17h0m0 26h0m0-83h0m0 11h0m0-21h0m1 100h0m0 8h0m0-52h0m0 60h0m0-47h0m0-2h0m0 32h0m0 2h0m0 35h0m0-103h0m1 83h0m0-13h0m0 6h0m0-79h0m0-16h0m0 84h0m0 16h0m0-35h0m1-10h0m0-9h0m0-33h0m0-9h0m0 36h0m1 54h0m0-45h0m0 12h0m0-30h0m0 50h0m0 1h0m1-87h0m0 59h0m0 13h0m0-31h0m0 4h0m0-106h0m0 80h0m1 45h0m0 22h0m0-17h0m0-2h0m0-39h0m0 48h0m0-2h0m0-21h0m0 1h0m1-50h0m0 31h0m0-17h0m0 30h0m0 21h0m0-6h0m0-31h0m0 35h0m1-38h0m0 46h0m0-20h0m0-29h0m0 17h0m0-7h0m0 47h0m1-33h0m0 1h0m0 22h0m1-21h0m0-48h0m0 84h0m0-29h0m0 24h0m1-75h0m0 47h0m0 5h0m0-13h0m1-48h0m0 1h0m0-20h0m0 78h0m0 21h0m1-58h0m0-39h0m0 81h0m0-93h0m0 91h0m0-1h0m0-65h0m0 51h0m0-45h0m1 25h0m0 15h0m0-40h0m0 42h0m0-20h0m0-81h0m0 106h0m0-25h0m0-47h0m0 20h0m0 27h0m0 25h0m0 60h0m0-74h0m0-116h0m0 53h0m1 58h0m0 31h0m0-62h0m1-12h0m0-40h0m0 95h0m0-50h0m0-3h0m0 83h0m1-87h0m0 67h0m0 24h0m0-17h0m0-30h0m0-49h0m0 103h0m0-84h0m0-56h0m0 93h0m0 6h0m1-46h0m0-71h0m0 108h0m0-51h0m0 39h0m0 38h0m0 5h0m0-18h0m0 95h0m0-132h0m0 24h0m1 11h0m0-36h0m0 46h0m0-74h0m0 12h0m0 47h0m0 24h0m0-29h0m0-69h0m0 126h0m0-137h0m0 48h0m1 49h0m0-57h0m0 36h0m0-16h0m0-47h0m1-17h0m0 95h0m0 38h0m0-85h0m0 24h0m0-58h0m0 73h0m0 3h0m0-42h0m0 44h0m0-64h0m0 36h0m0 75h0m0-92h0m1 89h0m0-85h0m0 105h0m0 5h0m0-31h0m0-19h0m0 36h0m0-32h0m0-13h0m0-1h0m1 19h0m0 5h0m0 17h0m0-81h0m0 1h0m0 17h0m0 61h0m0-86h0m0-38h0m0-35h0m1 16h0m0 105h0m0-28h0m0 82h0m0-182h0m0 185h0m0 46h0m0-131h0m0-41h0m0-50h0m0 184h0m0-70h0m0-111h0m0 83h0m1 6h0m0 4h0m0-2h0m0 63h0m0-5h0m1 37h0m0-1h0m0-3h0m0-56h0m0 30h0m0-68h0m0-8h0m0-3h0m0 106h0m0-117h0m0 95h0m0 6h0m1-43h0m0 64h0m0-26h0m0-57h0m0 74h0m0-32h0m0-45h0m1-7h0m0-22h0m0 27h0m1-13h0m0-81h0m0 87h0m0 22h0m0-47h0m0 21h0m0-16h0m0 123h0m0-31h0m0-6h0m0-52h0m1-46h0m0 33h0m0 30h0m0 0h0m0 75h0m1-62h0m0-28h0m0-1h0m0 2h0m0-14h0m0 39h0m0-39h0m0 101h0m0-13h0m0-98h0m0-9h0m0 61h0m0-61h0m0 117h0m0-24h0m0-79h0m0-63h0m1 119h0m0-39h0m0-17h0m0 39h0m0 45h0m0-71h0m0-2h0m0-13h0m1 92h0m0 4h0m0-116h0m0 18h0m0 55h0m0-53h0m0 63h0m0-53h0m0 39h0m0-56h0m0 1h0m0 121h0m1-63h0m0-37h0m0-5h0m0 19h0m0 44h0m0-78h0m0 30h0m0 36h0m1 2h0m0-33h0m0 12h0m0-30h0m0 84h0m0-105h0m0 60h0m0-58h0m0-19h0m0 126h0m0-80h0m1 24h0m0-31h0m1 34h0m0 30h0m0-8h0m0-3h0m0 14h0m0-39h0m0 23h0m0 16h0m1-63h0m0 44h0m0-5h0m0 38h0m0-43h0m1-47h0m0 27h0m0 33h0m0 21h0m0-23h0m0 8h0m0-48h0m0 43h0m0-51h0m0 17h0m0 32h0m1-44h0m0 17h0m0-32h0m0 65h0m0-63h0m1-30h0m0 78h0m0-35h0m0 10h0m1 35h0m0-26h0m0-48h0m0 26h0m0 1h0m1-123h0m0 68h0m0 89h0m0-65h0m0-94h0m0 77h0m1 62h0m0-39h0m0 11h0m0-31h0m0 5h0m0 41h0m0-2h0m0 6h0m0-109h0m0 36h0m1-23h0m0 81h0m0-19h0m0 32h0m0-83h0m0 36h0m0-53h0m1 152h0m0-58h0m0-14h0m0-31h0m0-16h0m0 83h0m0-17h0m0-66h0m0-42h0m0 103h0m0-59h0m0 13h0m0 34h0m0-108h0m0 146h0m1-44h0m0 13h0m0-12h0m1 8h0m0-22h0m0 46h0m0-48h0m1-48h0m0-31h0m0 47h0m0 72h0m0 22h0m0-29h0m0-46h0m0-22h0m1-37h0m0-8h0m0 57h0m0 31h0m0-78h0m0 39h0m1 46h0m0 16h0m0 2h0m0-51h0m0 60h0m0-131h0m0 132h0m0-8h0m0 6h0m0-71h0m1-10h0m0 72h0m0-8h0m0-39h0m1 31h0m0-43h0m0-9h0m0 44h0m0-65h0m0 9h0m0 85h0m0 18h0m0-133h0m0 73h0m0-23h0m0 46h0m0-25h0m0 34h0m0-47h0m0 8h0m0 9h0m1 50h0m0-132h0m0 78h0m0-74h0m0 98h0m0-46h0m0 8h0m1 60h0m0 30h0m0-151h0m0 55h0m0-33h0m0-2h0m0 35h0m1-6h0m0-10h0m0 31h0m0 44h0m0-45h0m0 63h0m0-138h0m0 99h0m0 7h0m0 47h0m1-80h0m0-55h0m0 120h0m0-22h0m1-34h0m0-18h0m0-25h0m0 119h0m0 8h0m0-25h0m0-98h0m0 74h0m0-37h0m0-1h0m0-4h0m0 46h0m0-37h0m1-50h0m0 146h0m0-67h0m0-32h0m0 52h0m0 17h0m0-116h0m0 95h0m0 21h0m0-37h0m0-68h0m0-3h0m1 24h0m0 56h0m0 6h0m0 41h0m0 1h0m0-131h0m0 39h0m0 35h0m0-61h0m1 111h0m0 8h0m0-27h0m0-30h0m0-31h0m0-1h0m0 2h0m0 3h0m1 25h0m0 59h0m0-21h0m0-55h0m0 76h0m0-3h0m1 9h0m0-150h0m0 143h0m0-69h0m0-25h0m0 93h0m0-125h0m0 40h0m0-6h0m1 162h0m0-79h0m0-80h0m0 110h0m1-114h0m0 22h0m0 67h0m0-46h0m1-14h0m0 51h0m0-19h0m0 88h0m1-74h0m0 22h0m0 8h0m0-30h0m1-5h0m0-15h0m0 57h0m0-56h0m0 38h0m1-3h0m0 7h0m0-79h0m0 87h0m0-72h0m0-15h0m0 76h0m1 41h0m0-136h0m0 4h0m0 8h0m1-16h0m0 103h0m0-5h0m0-77h0m0 22h0m0 49h0m1-88h0m0 52h0m0 47h0m0-38h0m1 7h0m0 13h0m0-26h0m0 44h0m1 30h0m0-38h0m0 47h0m0-40h0m0-7h0m1-56h0m1 22h0m0 38h0m0-57h0m0 85h0m0-30h0m0-22h0m0-10h0m0 36h0m0-7h0m0 35h0m1-50h0m0 19h0m0 9h0m0 28h0m0-116h0m0 20h0m0 85h0m0-76h0m0 36h0m0-27h0m1 14h0m0 54h0m0-131h0m0 141h0m0 4h0m0-98h0m1-22h0m0 93h0m0-10h0m0-26h0m0 27h0m0-16h0m0 4h0m1-6h0m0 50h0m0-24h0m0-53h0m0 40h0m0-46h0m1-3h0m0 52h0m0-30h0m0-7h0m0 35h0m0-57h0m0 59h0m1 0h0m0-53h0m0 89h0m0-12h0m0 9h0m1-27h0m0-23h0m0-20h0m0 0h0m0 11h0m1-5h0m0 83h0m0-43h0m0-65h0m0 17h0m0 30h0m0-29h0m1 72h0m0-143h0m0 98h0m0 19h0m0-48h0m0 62h0m0-26h0m0 15h0m0-12h0m0-15h0m1-44h0m0 64h0m0-39h0m0-6h0m0 55h0m0-59h0m0-1h0m0 42h0m1 19h0m0-56h0m0 15h0m0-23h0m0-4h0m1-3h0m0 50h0m0-31h0m0-8h0m0 55h0m1-50h0m0-16h0m0 40h0m0-35h0m0-9h0m0-15h0m0 36h0m1-47h0m0 96h0m0-50h0m0-60h0m0 31h0m0 31h0m0-4h0m1-4h0m0 38h0m0 17h0m0-38h0m0 25h0m0 4h0m0-93h0m1 100h0m0-72h0m0 63h0m0-37h0m0-45h0m0 52h0m0-21h0m0-56h0m1 54h0m0-9h0m0 109h0m0-135h0m0 42h0m1-27h0m0-37h0m0 14h0m0-43h0m0 16h0m0 4h0m0 18h0m0 73h0m1-139h0m0 177h0m0-101h0m0 49h0m0-49h0m0 66h0m0-137h0m0 165h0m0-36h0m0 37h0m1-160h0m0 160h0m0-52h0m0-48h0m0 62h0m0-21h0m0 8h0m0-71h0m0 60h0m0 56h0m0-153h0m0 106h0m0 16h0m0-116h0m1 110h0m0-99h0m0 67h0m0-20h0m0-69h0m0 72h0m0-18h0m0-6h0m1 67h0m0-70h0m0 22h0m0 30h0m0-6h0m0 4h0m1 69h0m0-4h0m0-50h0m0-10h0m0 36h0m1-11h0m0-1h0m0 14h0m0-30h0m0 49h0m0-12h0m0-56h0m1-7h0m0 38h0m0-27h0m0-7h0m0 28h0m0-2h0m1 27h0m0-5h0m1-26h0m0-33h0m0 52h0m0 4h0m0-28h0m0 11h0m1-13h0m1 3h0m1 51h0m1-23h0m0-57h0m0 35h0m1 24h0m0-101h0m0 100h0m0-48h0m1 0h0m0-2h0m0 115h0m1-44h0m0 26h0m0-152h0m1 91h0m0 4h0m0-33h0m0-19h0m0 30h0m0-55h0m0-38h0m0 123h0m1-100h0m0 76h0m0 10h0m0 42h0m0-44h0m0-45h0m0 77h0m0-76h0m1 10h0m0-55h0m0 10h0m0-16h0m1-27h0m0 83h0m0 40h0m0-80h0m0 63h0m0-18h0m0 15h0m0 10h0m1-53h0m0 5h0m0 11h0m0-8h0m0 22h0m0-58h0m0 42h0m0 59h0m0 0h0m0-20h0m0-24h0m1 40h0m0-53h0m0-25h0m0 56h0m0 28h0m0-62h0m1-40h0m0 74h0m0 54h0m0-92h0m0 18h0m0-18h0m0-6h0m0 8h0m1-40h0m0 77h0m0-42h0m0 7h0m0 40h0m0 0h0m0 48h0m0-33h0m0-67h0m0-49h0m1 64h0m0 58h0m0-89h0m0-32h0m0 34h0m0 3h0m0 107h0m0-159h0m0 107h0m1 42h0m0-7h0m0 48h0m0-45h0m0-80h0m0 36h0m0-16h0m0 56h0m1-64h0m0 114h0m1-173h0m0 57h0m0 5h0m0-64h0m1 97h0m0-18h0m0 72h0m1-17h0m0-90h0m0 16h0m0-55h0m0 93h0m0-34h0m0-74h0m0 98h0m0 18h0m0-44h0m0 2h0m0-69h0m1 25h0m0 78h0m0-22h0m0 9h0m0-44h0m0 24h0m0 81h0m1-80h0m0 1h0m0 74h0m1 14h0m0-28h0m0 3h0m0-35h0m0 67h0m0-74h0m0-3h0m1-3h0m0 62h0m0-52h0m0-29h0m0 30h0m0 37h0m0 42h0m1-115h0m0 34h0m0-9h0m0 61h0m0 35h0m0-96h0m0 13h0m0-40h0m0 81h0m1-19h0m0-51h0m0 66h0m0-22h0m0-27h0m0 50h0m1 32h0m0-72h0m0 56h0m0 40h0m0-16h0m0-8h0m1-9h0m0-70h0m0 69h0m0-63h0m0 107h0m0-12h0m0-23h0m0-13h0m1-39h0m0-33h0m0 81h0m0-43h0m0-4h0m0 37h0m0 12h0m1-94h0m0 26h0m0-19h0m0 104h0m0-67h0m1 47h0m0 7h0m0 26h0m0-127h0m0 44h0m0 19h0m0 5h0m0-8h0m1-37h0m0 39h0m0 28h0m0-92h0m0 4h0m1 16h0m0 69h0m0-21h0m0 22h0m0-65h0m0 23h0m1 32h0m0 6h0m0-72h0m0 38h0m0 54h0m1-65h0m0 49h0m0-61h0m0 47h0m0 2h0m0-24h0m0-25h0m0 68h0m0-73h0m1-14h0m0 56h0m0 32h0m0-62h0m1 40h0m0 0h0m0 9h0m0 0h0m0-35h0m0-7h0m0 25h0m0-41h0m0 38h0m1-56h0m0 88h0m0-15h0m0-46h0m0 30h0m0-50h0m0 12h0m0 7h0m0-39h0m1 107h0m0-57h0m0-40h0m0 37h0m0-68h0m0 61h0m0 26h0m0 32h0m0-79h0m0 76h0m0 10h0m1-50h0m0 33h0m0-84h0m1 136h0m0-118h0m0 73h0m0-28h0m0-51h0m0 36h0m1-41h0m0 59h0m0 7h0m0-45h0m0 47h0m1-70h0m0-5h0m0 80h0m0-90h0m0 100h0m1-94h0m0 65h0m0-70h0m0 40h0m0-32h0m1-7h0m0 71h0m0-77h0m0-27h0m0 13h0m0 91h0m0 10h0m0-11h0m1-18h0m0 40h0m0-86h0m0 3h0m0 18h0m0 30h0m0-49h0m0-72h0m1 38h0m0 10h0m0 25h0m0 14h0m0-33h0m0 53h0m0-30h0m0 43h0m0 8h0m0-16h0m1 0h0m0-116h0m0 148h0m0-32h0m0-3h0m0-35h0m0 26h0m0 10h0m1-7h0m0-49h0m0 14h0m0 50h0m0-40h0m0-8h0m0 0h0m0-35h0m0 90h0m1-67h0m0 44h0m0-54h0m0 80h0m0-10h0m0-7h0m1-61h0m0 12h0m0-15h0m0 72h0m0-123h0m1 77h0m0-55h0m0 54h0m0 57h0m0-20h0m1-62h0m0-45h0m0 26h0m0 43h0m0 2h0m0 31h0m0-34h0m0 69h0m0 2h0m0-20h0m0 12h0m0-76h0m1 1h0m0 80h0m0-97h0m0 4h0m0 88h0m0-58h0m0-1h0m0 14h0m0 47h0m0-117h0m1 26h0m0 54h0m0-40h0m0 88h0m0 5h0m0-66h0m1-11h0m0-57h0m0 58h0m0 70h0m0-101h0m0-19h0m0 68h0m0 15h0m0 50h0m1-32h0m0 23h0m0-75h0m0-10h0m0-54h0m0 60h0m0-1h0m0 62h0m0-62h0m0-17h0m0 101h0m1-61h0m0-41h0m0 109h0m0-158h0m0 59h0m0 63h0m1-85h0m0 82h0m0-62h0m1-22h0m0 89h0m0-61h0m0 62h0m0-28h0m0 49h0m0-8h0m0 0h0m1-25h0m0 18h0m0-37h0m0-95h0m0 71h0m0 73h0m1-73h0m0 0h0m0 16h0m0 62h0m0 16h0m0-123h0m0 80h0m0-122h0m0 70h0m0 53h0m0-91h0m0 120h0m0-83h0m0 11h0m1 60h0m0-70h0m0-33h0m0 128h0m0-111h0m0 114h0m0-95h0m1 71h0m0 10h0m0-33h0m0 17h0m0 17h0m1 18h0m0-14h0m0 26h0m0-130h0m0 76h0m0-36h0m0-6h0m0 7h0m0 55h0m1 10h0m0 4h0m0-3h0m1-40h0m0 9h0m0 47h0m0-53h0m1 7h0m0-20h0m0 41h0m0-5h0m0 36h0m0-42h0m0-12h0m0-28h0m0 40h0m0-36h0m0 61h0m0 34h0m1-35h0m0-89h0m0 42h0m0-42h0m0 53h0m0-13h0m0-32h0m0 8h0m0 124h0m1-48h0m0 10h0m0-59h0m0 7h0m0 10h0m0 3h0m1 41h0m0 36h0m0-88h0m0-56h0m0 105h0m0-66h0m0 52h0m0-95h0m0 124h0m1-85h0m0 23h0m0-6h0m0-11h0m0-14h0m0-6h0m0 5h0m1 60h0m0-80h0m0 11h0m0 11h0m0 7h0m0 77h0m0 2h0m0-90h0m0 10h0m1-15h0m0 64h0m0-68h0m0 1h0m0 65h0m0 20h0m0 2h0m1-88h0m0 15h0m0 66h0m0-43h0m1-4h0m0 48h0m0-46h0m0-4h0m0-26h0m0 89h0m1-35h0m0-8h0m0 36h0m0-83h0m0 63h0m0 27h0m1-74h0m0 61h0m0-14h0m0-27h0m0 6h0m0 39h0m0-6h0m0-85h0m0 35h0m1 42h0m0-65h0m0 4h0m0-52h0m0 42h0m0 57h0m0 26h0m0-49h0m1-11h0m0 15h0m0 62h0m0-74h0m0-42h0m1 91h0m0 46h0m0-113h0m1 64h0m0-89h0m0 33h0m0 16h0m0 41h0m1-46h0m0 46h0m0-62h0m0 100h0m0-120h0m0 94h0m1-1h0m0-14h0m0 4h0m0-21h0m0-56h0m0 13h0m1 10h0m0-40h0m0 34h0m0 12h0m0-42h0m0 26h0m0 3h0m0 65h0m1-7h0m0-43h0m0-43h0m0 21h0m0 88h0m1-83h0m0 31h0m0-46h0m0 17h0m0 25h0m0 15h0m0-3h0m0-79h0m0 51h0m0-39h0m0 52h0m1-12h0m0 10h0m0-52h0m0 29h0m0-107h0m0 169h0m1 0h0m0-167h0m0 131h0m0-23h0m0-26h0m0-23h0m0-14h0m0-42h0m0 188h0m0-30h0m1-78h0m0 46h0m0-33h0m0-1h0m0 23h0m0-43h0m0 46h0m0 64h0m0-112h0m0 1h0m0 79h0m1-157h0m0 81h0m0-1h0m0 15h0m0 60h0m0-22h0m0-79h0m0 48h0m1 20h0m0-46h0m0-66h0m0 78h0m0-41h0m0-6h0m0 110h0m0-26h0m0 30h0m0-111h0m1 106h0m0-76h0m0-17h0m0-38h0m0 110h0m0-60h0m1 8h0m0 3h0m0 48h0m0-9h0m0 31h0m0-44h0m0-9h0m0 27h0m1-15h0m0 3h0m0-35h0m0 71h0m0-92h0m0-34h0m0 54h0m0 3h0m0 2h0m1 71h0m0-68h0m0-8h0m0 7h0m0 38h0m1 11h0m0 46h0m0-98h0m0-50h0m0 121h0m0-123h0m0 34h0m0 11h0m0 1h0m0-8h0m1 70h0m1-4h0m0-21h0m0 72h0m0-103h0m0-7h0m0 5h0m0 10h0m1 38h0m0-121h0m0 131h0m0-33h0m0-25h0m0 11h0m1 39h0m0-49h0m0 1h0m0-24h0m0 74h0m0-51h0m1 51h0m0-2h0m0-46h0m0 35h0m0-2h0m1-52h0m0-9h0m0 47h0m0-35h0m0-21h0m0 153h0m0-69h0m0 0h0m0-128h0m0 112h0m1-112h0m0 61h0m0 18h0m0 3h0m0 35h0m0-36h0m0 34h0m0 20h0m0-17h0m1-60h0m0 98h0m0-142h0m0 137h0m0-68h0m0 40h0m0 29h0m1-45h0m0 81h0m0-73h0m1-6h0m0 6h0m0 7h0m0 46h0m0-88h0m1 51h0m0 20h0m0-48h0m0 22h0m0-22h0m0 48h0m0 9h0m1-6h0m0-1h0m2-22h0m0 12h0m0-49h0m0-12h0m1 7h0m0-7h0m0 14h0m0 45h0m0-57h0m0 68h0m1 2h0m0 14h0m1-60h0m0 26h0m1-36h0m0-11h0m0 65h0m0-61h0m0 70h0m1-40h0m0-7h0m0 70h0m0-24h0m0-72h0m0 27h0m0-14h0m1-28h0m0 106h0m0-50h0m0-22h0m0 7h0m0-3h0m0-81h0m0 104h0m1 21h0m0-79h0m0 58h0m0 0h0m0 45h0m0-25h0m0-7h0m1-31h0m0-5h0m0 84h0m0-60h0m0 26h0m0-47h0m0 27h0m0 59h0m1-97h0m0 88h0m0-95h0m0 75h0m1-44h0m0-24h0m0 43h0m0-28h0m0-14h0m0 25h0m0 9h0m1-6h0m0 38h0m0-21h0m0 42h0m0 6h0m0-92h0m0 44h0m0-70h0m0 126h0m0-36h0m1-61h0m0-32h0m0 87h0m0 32h0m0 20h0m0-87h0m0 70h0m0-76h0m0-28h0m0 8h0m1 37h0m0-19h0m0 18h0m0-34h0m0 20h0m0 55h0m0-59h0m0-12h0m1-20h0m0 33h0m0-3h0m0 68h0m0-76h0m1 55h0m0 12h0m0 36h0m0-89h0m0-45h0m0 28h0m0 9h0m0 40h0m0-15h0m1 27h0m0-44h0m0 107h0m0-119h0m0 17h0m0 90h0m0-145h0m0 70h0m0 24h0m0 55h0m0-100h0m0 80h0m0-82h0m1-5h0m0 30h0m0 43h0m0-12h0m0-61h0m0 73h0m0 50h0m0 5h0m0-123h0m0 32h0m1-10h0m0 51h0m0-74h0m0 26h0m0 35h0m0-28h0m0 25h0m0-47h0m1 67h0m0-38h0m0-45h0m0 1h0m0 103h0m0-12h0m0 5h0m0-55h0m0-48h0m0 103h0m1-22h0m0 27h0m0-17h0m0-10h0m0-13h0m0-39h0m0-44h0m0 121h0m0 12h0m0-91h0m1 103h0m0 17h0m0-145h0m0 27h0m0 52h0m0-91h0m0 77h0m1-32h0m0-16h0m0 57h0m0-57h0m0 45h0m1-52h0m0 29h0m0-58h0m0 19h0m0 35h0m0 44h0m0-114h0m0 62h0m0 100h0m1-90h0m0 2h0m0-41h0m0 47h0m0-40h0m0-53h0m1 106h0m0 41h0m0-66h0m0 76h0m0-82h0m0 92h0m0-122h0m0 10h0m0-11h0m1 66h0m0-64h0m0-29h0m0 37h0m0 28h0m0-12h0m0-51h0m0 37h0m0 6h0m1 6h0m0-34h0m0 124h0m0-49h0m0 52h0m0-34h0m0-70h0m0 20h0m0 56h0m0 24h0m1-93h0m0-7h0m0-19h0m0 48h0m0 25h0m0-7h0m0 47h0m0 5h0m0-94h0m0 45h0m0-59h0m0-24h0m0 7h0m0 46h0m1-15h0m0 43h0m0-49h0m0 56h0m0-26h0m0 19h0m0-46h0m0 80h0m0-118h0m1 34h0m0 69h0m0-114h0m0 96h0m0-8h0m0 14h0m0-57h0m0 75h0m0-49h0m1-34h0m0 7h0m0 53h0m0 13h0m0-32h0m0 25h0m1 30h0m0-97h0m0 65h0m0-6h0m0 20h0m0-55h0m0 79h0m0-110h0m0 33h0m0-37h0m0 101h0m0 2h0m0-22h0m0-25h0m0-17h0m1-20h0m0 90h0m0-55h0m0 48h0m0-98h0m0 69h0m1 15h0m0-78h0m0 65h0m1 20h0m0-85h0m0 31h0m0-28h0m0 54h0m0-21h0m0 38h0m0 7h0m1 0h0m0-42h0m0 24h0m0-34h0m0-13h0m0 46h0m0-70h0m0 68h0m0-18h0m1-73h0m0 22h0m0 4h0m0 58h0m0-107h0m0 115h0m0-52h0m0 47h0m1-102h0m0 47h0m0-60h0m0 36h0m0 55h0m0-47h0m0 27h0m0 55h0m1-106h0m0-44h0m0 53h0m0-19h0m0 58h0m0-51h0m0 16h0m0 8h0m0 13h0m0 6h0m1 29h0m0-88h0m0 113h0m0-94h0m0 84h0m0-49h0m0 34h0m0 2h0m0 22h0m0-134h0m0 51h0m0 84h0m1-48h0m0 53h0m0 2h0m0-62h0m0-31h0m0 1h0m0 20h0m0-68h0m0 142h0m1-40h0m0-17h0m0 3h0m0 19h0m0 20h0m0-25h0m1-57h0m0 69h0m0-14h0m0 17h0m0 7h0m0-34h0m0 34h0m0-14h0m1 1h0m0-66h0m0 41h0m0 10h0m1 30h0m0-47h0m0 18h0m0-29h0m0 41h0m0-53h0m0-30h0m0 44h0m0-38h0m1-7h0m0 79h0m0-72h0m0-19h0m0 101h0m0-49h0m1-82h0m0 40h0m0 26h0m0-40h0m0 21h0m0 42h0m1 56h0m0-37h0m0-108h0m0 122h0m0-88h0m0 94h0m1-62h0m0 2h0m0-14h0m0 72h0m0-112h0m0-8h0m0 107h0m0-24h0m0 4h0m0 4h0m0-61h0m0 29h0m0 58h0m0-66h0m0 67h0m1-72h0m0 63h0m0-52h0m0 6h0m0-27h0m0 34h0m0-80h0m0 12h0m0 47h0m0 61h0m1-41h0m0 18h0m0 25h0m0-40h0m0 55h0m0-50h0m0-16h0m0 69h0m0-20h0m0 26h0m0-22h0m0 25h0m1-19h0m0-81h0m0 68h0m0-92h0m0 107h0m0-13h0m1-106h0m0 109h0m0-5h0m0 15h0m0-22h0m0-30h0m0-63h0m0 3h0m0 94h0m0-27h0m0 53h0m1-60h0m0 57h0m0-66h0m0 29h0m0 23h0m0-52h0m0 49h0m0-9h0m0 21h0m0 9h0m0 15h0m0-127h0m1 22h0m0 52h0m0 12h0m0-29h0m0 48h0m0-62h0m0-1h0m0-46h0m1 21h0m0 114h0m0 1h0m0-96h0m0-14h0m0 81h0m0-23h0m0 59h0m0-28h0m0-69h0m1 90h0m0-82h0m0-54h0m0 71h0m0 42h0m0-8h0m0-6h0m0-15h0m0-32h0m0 56h0m1-92h0m0 51h0m0 71h0m0-126h0m0-4h0m0 7h0m0 73h0m0-41h0m0 40h0m0 5h0m0-68h0m1 7h0m0 45h0m0 31h0m0 34h0m0 2h0m0-58h0m1 25h0m0-54h0m0-10h0m0 74h0m0 14h0m0-127h0m0 22h0m0 82h0m0 36h0m1-143h0m0 62h0m0 25h0m0 6h0m0 19h0m0-16h0m0 36h0m0-56h0m0-5h0m0-1h0m1 65h0m0-33h0m0 32h0m0-81h0m0 59h0m0 6h0m0-11h0m0-66h0m0 97h0m1 21h0m0-73h0m0 75h0m0-67h0m0 40h0m0 28h0m0-45h0m0-49h0m1 67h0m0-21h0m0-68h0m0 36h0m0 87h0m0-104h0m0 75h0m0-56h0m0 91h0m1-63h0m0-54h0m0 16h0m0 19h0m0 87h0m0-106h0m0 89h0m0-22h0m0-91h0m0 22h0m0 14h0m0 46h0m0-20h0m0 2h0m1 10h0m0-38h0m0 60h0m0 28h0m0-100h0m0 125h0m0-120h0m0 100h0m0-67h0m0-70h0m0 74h0m0 2h0m0 62h0m0-118h0m1 68h0m0-54h0m0 11h0m0 85h0m0 17h0m0-46h0m0-63h0m1 91h0m0-78h0m0 0h0m0-5h0m0 86h0m0-81h0m0 42h0m1 40h0m0-15h0m0-25h0m0 36h0m0 13h0m0-116h0m0 50h0m0-43h0m0 56h0m0-30h0m0-16h0m1 93h0m0-6h0m0-48h0m0 57h0m0-94h0m0 44h0m0-30h0m0-39h0m0-6h0m0 7h0m0 0h0m0 16h0m0 110h0m1-44h0m0 10h0m0-53h0m0-20h0m0 108h0m0-35h0m0-74h0m1 33h0m0-40h0m0 2h0m0 0h0m0-25h0m0 76h0m0-51h0m0-23h0m0 35h0m0 100h0m0-69h0m0 33h0m0 25h0m0-91h0m0-11h0m1-7h0m0-7h0m0 19h0m0 29h0m0 66h0m0-16h0m0-73h0m0-28h0m0 110h0m0-68h0m0-33h0m0 16h0m0 47h0m0-85h0m0 20h0m0 127h0m1-98h0m0-17h0m0 140h0m0-123h0m0 42h0m0 32h0m0 7h0m0-4h0m1-38h0m0 35h0m0 18h0m0-125h0m0 74h0m0-8h0m0-74h0m0 110h0m0-48h0m0-55h0m0 123h0m1-3h0m0-89h0m0 123h0m0-78h0m0-96h0m0 38h0m0 8h0m0 90h0m0-67h0m1-93h0m0 128h0m0-78h0m0 29h0m0 63h0m0-91h0m0 24h0m1-5h0m0-35h0m0 35h0m0-6h0m0 15h0m0 49h0m0-37h0m0 26h0m1-66h0m0 94h0m0-30h0m0-103h0m0 39h0m0 21h0m0-68h0m1-29h0m0 52h0m0-6h0m0 106h0m0 7h0m0-34h0m0-122h0m0 43h0m0 38h0m0 34h0m0-119h0m0 151h0m0-49h0m0-13h0m0 46h0m1 21h0m0-11h0m0 15h0m0-55h0m0 4h0m0-116h0m0 72h0m0-6h0m0 166h0m0-67h0m0-37h0m0-16h0m0-5h0m0-35h0m0 11h0m0-58h0m0 94h0m0-27h0m1-88h0m0 90h0m0-63h0m0 78h0m0-4h0m0 8h0m0 2h0m0 27h0m1-81h0m0-5h0m0 74h0m0 21h0m0-90h0m0 58h0m0-22h0m0 36h0m1-71h0m0 59h0m0 1h0m0-17h0m0 22h0m0-84h0m0 50h0m0-34h0m0 48h0m0-14h0m0-2h0m0-32h0m0-33h0m0 25h0m0 83h0m1 13h0m0-61h0m0-13h0m0 21h0m0 13h0m0-20h0m0-42h0m0 86h0m0-71h0m0 68h0m1 15h0m0-106h0m0 80h0m0-114h0m0 97h0m0 50h0m1-93h0m0 15h0m0-16h0m0 49h0m0 23h0m0-34h0m0 13h0m0-108h0m0 58h0m0-63h0m1 65h0m0 72h0m0-86h0m0 100h0m0-138h0m0 17h0m0 63h0m0 30h0m0-9h0m0-50h0m1-16h0m0-46h0m0 72h0m0 56h0m0-3h0m0-12h0m0 49h0m1-55h0m0 25h0m0-69h0m0-6h0m0 67h0m0-15h0m0 7h0m0-58h0m0 69h0m0-32h0m1-48h0m0 68h0m0-59h0m0 56h0m0-99h0m0 2h0m0 110h0m0-59h0m1 60h0m0-3h0m0-15h0m0 38h0m0-74h0m0 54h0m0-14h0m0-74h0m0-24h0m1-9h0m0 108h0m0-51h0m0-66h0m0 68h0m1 46h0m0-7h0m0 8h0m0-16h0m0 45h0m0-28h0m1 34h0m0-60h0m0-18h0m0 29h0m0 29h0m0-23h0m1 49h0m0-24h0m0-25h0m0 20h0m0-35h0m0 31h0m0 20h0m0-9h0m0-54h0m1 65h0m0-23h0m0-14h0m0-61h0m0 115h0m0-74h0m1 68h0m0-53h0m0-28h0m0 56h0m0 3h0m0-48h0m0-6h0m0 26h0m1-100h0m0 119h0m0-19h0m1 47h0m0-54h0m0 45h0m0-86h0m0 105h0m0-70h0m0 19h0m0 30h0m0-38h0m0 18h0m1-29h0m0 44h0m0 20h0m0-41h0m0-3h0m0-28h0m0 86h0m1-40h0m0 40h0m0-9h0m0-135h0m0 122h0m0 13h0m0-74h0m0 59h0m0-6h0m0-72h0m0 96h0m1-60h0m0 15h0m0-6h0m0 61h0m0-44h0m0 13h0m0-68h0m0 50h0m0-28h0m0 38h0m0-38h0m0 64h0m1 12h0m0-15h0m0-78h0m0 13h0m1-14h0m0 50h0m0 48h0m0-98h0m0 12h0m0 44h0m0-31h0m0 72h0m0-95h0m0 77h0m1-65h0m0-11h0m0-22h0m0 84h0m0-42h0m0 65h0m0-46h0m0 36h0m0-50h0m0 71h0m0-31h0m1 19h0m0-11h0m0-59h0m0 30h0m1-22h0m0-3h0m0 66h0m0-76h0m0 24h0m0-40h0m1-10h0m0 46h0m0 16h0m0-15h0m0 70h0m0-81h0m0-69h0m0 41h0m1 41h0m0-82h0m0 21h0m0 87h0m0 49h0m0-126h0m0 23h0m0-60h0m0 156h0m0-114h0m0-44h0m1 96h0m0 35h0m0-131h0m0 69h0m0 53h0m0-97h0m0 108h0m0-150h0m0 118h0m0 20h0m0-79h0m0 65h0m0-11h0m0-67h0m0 57h0m0 38h0m0 8h0m0 0h0m1 14h0m0-106h0m0-10h0m0 13h0m0 68h0m0-86h0m0 130h0m1-24h0m0 39h0m0-183h0m0 42h0m0 10h0m0 65h0m1-27h0m0-35h0m0 40h0m0 19h0m0-15h0m0 26h0m0-31h0m0-70h0m0 90h0m0 32h0m0 17h0m0 18h0m1-138h0m0-46h0m0 55h0m0-6h0m0-6h0m0 79h0m0-14h0m0 28h0m0-6h0m0-5h0m0 15h0m0-47h0m0 5h0m1 30h0m0-14h0m0-46h0m0 83h0m0-45h0m0-10h0m0-35h0m1 63h0m0-76h0m0-5h0m0-5h0m0 121h0m0-22h0m0-49h0m0 48h0m0-95h0m0 72h0m1 77h0m0-31h0m0-60h0m0 51h0m0-2h0m0-42h0m0-35h0m1-70h0m0 177h0m0-116h0m0 52h0m1-21h0m0 10h0m0 5h0m0-29h0m0 42h0m0 43h0m0-6h0m0-10h0m0-71h0m0 44h0m1-10h0m0-51h0m0 32h0m0 70h0m0-56h0m0 63h0m0-1h0m1-79h0m0 78h0m0-91h0m0 58h0m0-8h0m0-45h0m0 10h0m0 72h0m1-43h0m0-56h0m0-6h0m0 76h0m0-44h0m0 36h0m1 54h0m0-60h0m0-17h0m0-1h0m0 22h0m0 61h0m0-94h0m0-20h0m0 76h0m0 4h0m1-68h0m0 20h0m0-13h0m0 73h0m0 11h0m0-64h0m0-19h0m0-18h0m0 35h0m1 10h0m0-18h0m0 41h0m0-140h0m1 158h0m0 27h0m0-2h0m0-5h0m0 1h0m0-87h0m0 28h0m0 24h0m1 31h0m0-65h0m0-106h0m0 149h0m0 42h0m0-139h0m0 20h0m0-76h0m0 157h0m0 20h0m0-50h0m0 41h0m1-37h0m0-75h0m0 67h0m0-16h0m0-1h0m0-52h0m0-30h0m0 75h0m0 21h0m1-73h0m0 57h0m0-23h0m0 91h0m0-122h0m0 125h0m0-164h0m0 110h0m0 49h0m0-12h0m0-103h0m0-17h0m0 71h0m0-82h0m1 70h0m0 63h0m0 25h0m0-15h0m0-97h0m0 72h0m0-90h0m0 98h0m0-99h0m0 112h0m0-112h0m0-14h0m1 41h0m0-23h0m0 43h0m1 0h0m0-30h0m0-19h0m0 85h0m0-9h0m0-112h0m0-11h0m1 97h0m0 27h0m0 26h0m0-23h0m0-14h0m0-107h0m0 68h0m0 30h0m1-53h0m0-24h0m0-23h0m0 83h0m0-80h0m0 114h0m0-14h0m0-82h0m1 138h0m0-170h0m0 70h0m0 80h0m0-48h0m0-55h0m0 22h0m0 23h0m0-1h0m0-54h0m0 51h0m1-28h0m0 51h0m0 7h0m0 30h0m0-68h0m0-24h0m0-11h0m0 115h0m0-120h0m0 161h0m1-65h0m0-41h0m0-36h0m0 32h0m0 53h0m0-77h0m0 28h0m0-82h0m0 94h0m0 18h0m0-22h0m0 6h0m0-11h0m0 14h0m0 1h0m0-47h0m1 22h0m0-5h0m0 70h0m0-47h0m0-11h0m0 11h0m0 45h0m0-84h0m0 38h0m1-33h0m0 5h0m0 121h0m0-62h0m0-50h0m0 13h0m0 28h0m0-11h0m0-44h0m1 16h0m0 22h0m0-25h0m0 21h0m0 25h0m0-14h0m0-28h0m1-23h0m0 100h0m0-56h0m0 61h0m0-76h0m1-15h0m0 11h0m0 59h0m0-19h0m0-36h0m0-5h0m0-10h0m1 31h0m0-9h0m0-16h0m0-14h0m0 69h0m0-23h0m0-26h0m0 51h0m0-54h0m1-70h0m0 103h0m0 23h0m0-32h0m0-3h0m0 11h0m0 24h0m0-36h0m0-36h0m1 34h0m0-19h0m0 1h0m0 61h0m0-8h0m0-18h0m0-53h0m1 7h0m0 44h0m1-39h0m0-5h0m0 26h0m0 9h0m0-32h0m0 25h0m1 29h0m0-35h0m0 28h0m0-32h0m0-12h0m0 70h0m0-10h0m0-17h0m1 3h0m0-12h0m1-92h0m0 34h0m0 61h0m0-102h0m0 88h0m0-83h0m0 118h0m1-19h0m0-20h0m0-11h0m0-36h0m0-67h0m0 53h0m0 66h0m0-12h0m1-38h0m0 83h0m0-138h0m0 177h0m0-67h0m0 36h0m0-8h0m0-70h0m0 63h0m1-128h0m0 173h0m0-121h0m1 63h0m0 26h0m0-90h0m0 73h0m0-131h0m0 106h0m0 27h0m0 16h0m0-163h0m0 59h0m0 75h0m0 13h0m0-72h0m0 39h0m0-107h0m0 99h0m1 10h0m0-43h0m0-14h0m0 3h0m0-34h0m0 97h0m0-18h0m0 60h0m0-27h0m0-54h0m0-15h0m0 60h0m0-32h0m0-54h0m0 30h0m0 110h0m0-149h0m0 65h0m0 64h0m1-28h0m0 30h0m0-63h0m0 4h0m0 19h0m0-86h0m0 21h0m0-37h0m0 45h0m0 102h0m0-31h0m0-39h0m0-74h0m1 69h0m0 103h0m0-52h0m0 44h0m0-58h0m0-82h0m0 23h0m0-46h0m0 79h0m0-5h0m0 34h0m0-30h0m0 0h0m0-18h0m1 79h0m0-95h0m0 81h0m0-105h0m0 106h0m0-42h0m0 7h0m0 1h0m0-43h0m0 96h0m1-6h0m0-50h0m0 19h0m0-24h0m0 66h0m0-3h0m0-73h0m0 2h0m0-10h0m1 73h0m0-70h0m0 32h0m0 8h0m0 45h0m0 30h0m0-115h0m0 32h0m0 37h0m0-49h0m0-10h0m0 39h0m0 47h0m1 58h0m0-182h0m0 52h0m0 4h0m0 2h0m0-33h0m0 15h0m0-10h0m0 118h0m0-22h0m0-119h0m1 51h0m0-26h0m0-22h0m0 78h0m0 17h0m0 3h0m0-59h0m0 44h0m0 46h0m0-121h0m0 124h0m1-90h0m0 12h0m0 13h0m0-32h0m0-20h0m0 27h0m0-32h0m0 18h0m0 90h0m1-25h0m0-40h0m0-3h0m0-34h0m0 126h0m0-4h0m0-135h0m0 18h0m0 108h0m1 29h0m0-59h0m0 43h0m0-7h0m0-23h0m0-98h0m0 35h0m0-29h0m0 73h0m0-77h0m0 10h0m0-10h0m0 94h0m0-75h0m0 6h0m1 95h0m0 10h0m0-112h0m0 39h0m0 21h0m0 41h0m0-3h0m0-75h0m0 26h0m0-53h0m1 28h0m0-34h0m0 112h0m0-5h0m0-75h0m0 44h0m0 27h0m1-98h0m0-7h0m0 94h0m0-14h0m1 25h0m0-40h0m0-72h0m0 25h0m0 1h0m0-31h0m1 89h0m0-61h0m0 11h0m1-9h0m0-3h0m0 75h0m0 14h0m0 36h0m0-53h0m1 35h0m0-27h0m0-25h0m0-26h0m0 21h0m0-8h0m1 5h0m0-51h0m0 80h0m0 9h0m0-44h0m0-40h0m0 4h0m0 45h0m0-45h0m1 78h0m0-13h0m0-24h0m0-73h0m0 11h0m0 11h0m0 99h0m0-92h0m0 80h0m0 3h0m1-62h0m0-7h0m0-63h0m0 132h0m0 14h0m0-79h0m0-1h0m0 61h0m1-106h0m0 38h0m0-84h0m0 106h0m0-41h0m0-39h0m0 14h0m0 24h0m1 47h0m0-47h0m0-25h0m0 86h0m0-65h0m0-33h0m1 115h0m0-2h0m0-74h0m0 53h0m0-54h0m0 12h0m0 27h0m1-40h0m0-19h0m0 36h0m1 119h0m0-128h0m0 72h0m0-101h0m0 50h0m0 15h0m0-16h0m0 49h0m1-51h0m0-17h0m0 65h0m1-24h0m0-20h0m0 37h0m0-4h0m0-67h0m0 24h0m0-3h0m0 44h0m0-64h0m0 13h0m1-2h0m0-9h0m0 22h0m0-7h0m0-16h0m0-16h0m0 72h0m0-58h0m0 55h0m0-34h0m0 40h0m1-74h0m0 9h0m0 41h0m0-16h0m0-11h0m0-50h0m0 11h0m0 91h0m0 4h0m0-100h0m0 94h0m0-132h0m0 97h0m0 15h0m0-32h0m1-6h0m0 10h0m0-46h0m0 65h0m0-62h0m0 88h0m0 3h0m0 0h0m0-49h0m0-72h0m0 31h0m0 92h0m0-1h0m1-101h0m0 74h0m0-33h0m0 63h0m0-93h0m0-53h0m0 43h0m0 86h0m0-28h0m0-71h0m0 9h0m1 111h0m0-52h0m0-77h0m0 69h0m0-30h0m0 74h0m0-30h0m0 18h0m0-15h0m1 13h0m0-43h0m0 76h0m0-104h0m0-40h0m0 49h0m0 48h0m0-28h0m0 31h0m0-34h0m1 3h0m0 0h0m0 25h0m0-7h0m0-88h0m0 108h0m0-123h0m0 56h0m0-2h0m0-42h0m0-10h0m0 164h0m0-162h0m0 56h0m0 40h0m1-32h0m0 16h0m0-92h0m0 199h0m0-132h0m0 35h0m0 61h0m0-98h0m0 112h0m1-59h0m0 2h0m0 12h0m0-7h0m0-111h0m0 99h0m0 19h0m0-15h0m0-9h0m0 69h0m0-97h0m0 23h0m0 85h0m1-144h0m0 140h0m0-160h0m0 179h0m0-154h0m0 129h0m0-72h0m0 19h0m0 2h0m0 31h0m0-46h0m0-38h0m0 75h0m0 30h0m0 10h0m1-134h0m0 7h0m0 127h0m0-12h0m0-68h0m0 35h0m0-7h0m0 22h0m0-70h0m0-7h0m0 74h0m0-91h0m0-18h0m0 53h0m0-77h0m0 140h0m1-61h0m0-1h0m0 0h0m0-9h0m0 75h0m0-105h0m0 111h0m0-109h0m0 47h0m0-62h0m1 64h0m0-6h0m0 19h0m0-110h0m0 44h0m0-6h0m1 90h0m0-114h0m0 34h0m0 33h0m0-67h0m0 139h0m0 27h0m0-3h0m0-5h0m0-29h0m0-153h0m0 110h0m1-51h0m0 50h0m0-3h0m0-69h0m0 160h0m0-100h0m0-41h0m0 17h0m1-9h0m0 38h0m0 51h0m0 33h0m0-134h0m0 47h0m0-55h0m0 139h0m0-124h0m0-45h0m0 83h0m0-2h0m0-56h0m1-12h0m0 32h0m0 27h0m0 38h0m0-76h0m0-6h0m0 19h0m0 111h0m0-144h0m1 141h0m0-76h0m0-33h0m0-34h0m0 110h0m0 34h0m0-70h0m0 50h0m0-116h0m1 109h0m0 8h0m0-65h0m0 30h0m0 56h0m0-48h0m0 27h0m0-58h0m1-30h0m0-54h0m0 60h0m0 10h0m0 26h0m0-8h0m0-38h0m0 78h0m0-4h0m1-45h0m0 36h0m0-67h0m0 83h0m0-24h0m0 22h0m1 4h0m0-89h0m0 58h0m0-55h0m0-60h0m0 22h0m0 134h0m1-36h0m0-109h0m0 128h0m0-82h0m0 42h0m1-13h0m0-30h0m0 40h0m0 11h0m0-69h0m0 91h0m0-77h0m0 50h0m0-18h0m0 16h0m0 86h0m0 17h0m1-113h0m0-27h0m0 76h0m0-34h0m0 49h0m0-26h0m0 28h0m0-17h0m0-17h0m0-60h0m1 69h0m0-6h0m0 1h0m0-42h0m0 53h0m1 1h0m0 3h0m0-45h0m0-16h0m1 44h0m0 4h0m0 18h0m0-13h0m0 24h0m0-5h0m0-50h0m0 2h0m1-1h0m0 68h0m0-91h0m0 22h0m0-8h0m1 10h0m0 67h0m0-55h0m0-30h0m0 7h0m0-12h0m0-5h0m0 48h0m0 34h0m1-24h0m0-50h0m0 28h0m0 61h0m0-94h0m0 4h0m0 55h0m0-53h0m0 41h0m0 17h0m1 21h0m0-105h0m0 54h0m0 47h0m0 48h0m1-143h0m0 70h0m0 37h0m0-84h0m0 35h0m1-108h0m0 125h0m0-39h0m0 52h0m0-3h0m1-49h0m0 13h0m0 11h0m0 54h0m0-82h0m0-11h0m0 3h0m0 66h0m1-58h0m0 69h0m0-22h0m1 44h0m0 5h0m0-25h0m0-30h0m0-58h0m0 9h0m0 21h0m0 60h0m0 9h0m1-62h0m0 44h0m0 5h0m0-62h0m0-28h0m1 70h0m0 40h0m0-66h0m0 55h0m0-36h0m0 54h0m0-35h0m0-49h0m0 90h0m1-11h0m0-91h0m1 110h0m0-59h0m0 51h0m0-6h0m0-102h0m0-79h0m0 91h0m1 42h0m1-10h0m0 12h0m0 24h0m0 17h0m0-80h0m0 33h0m0-43h0m0-22h0m0 57h0m0 67h0m1-108h0m0 74h0m0-87h0m0 50h0m0-61h0m0 115h0m0-22h0m0-3h0m1-46h0m0 61h0m0 16h0m0 6h0m1-43h0m0-53h0m0 73h0m0-60h0m0-44h0m0 16h0m0 113h0m0 0h0m0-5h0m0-29h0m1-64h0m0 33h0m0 50h0m0-70h0m0 62h0m0-60h0m1 11h0m0-29h0m0 10h0m0-40h0m0 26h0m0 83h0m0-69h0m0 21h0m0-27h0m0 120h0m0-102h0m0-22h0m0 18h0m1 38h0m0 10h0m0-74h0m0 72h0m0-73h0m0 17h0m0 69h0m0-103h0m0 73h0m0-17h0m0 37h0m0-85h0m0-15h0m1-3h0m0 139h0m1-81h0m0 34h0m0-18h0m0-27h0m0 20h0m0-27h0m0 62h0m0-47h0m1 78h0m0-89h0m0 74h0m0 11h0m1-127h0m0 74h0m0-83h0m0 18h0m0 47h0m0 68h0m0-12h0m0-142h0m0 160h0m0-26h0m0 18h0m0-140h0m1 86h0m0-71h0m0 52h0m0 45h0m0-167h0m1 50h0m0-57h0m0 129h0m0-75h0m0 74h0m0-10h0m0-92h0m0 136h0m0-96h0m0 1h0m0 59h0m0 32h0m0-28h0m0-7h0m0-53h0m1-8h0m0-33h0m0-14h0m0 32h0m0-6h0m0-3h0m0 125h0m0 18h0m1-169h0m0 23h0m0 159h0m0-153h0m0 35h0m0 37h0m0 84h0m0-23h0m0 8h0m0-125h0m1-26h0m0 51h0m0 61h0m0 40h0m0-102h0m0 105h0m0-54h0m0-49h0m0 41h0m0-57h0m0-49h0m0 46h0m1 67h0m0-18h0m0 9h0m0-47h0m0 54h0m0-128h0m0 174h0m0-84h0m0 20h0m0-91h0m1 30h0m0 196h0m0-169h0m0 24h0m0 7h0m0 78h0m0-76h0m1 37h0m0-13h0m0-61h0m0 90h0m0-138h0m0 133h0m0-91h0m0 67h0m1-16h0m0 42h0m0-136h0m0 41h0m0-59h0m0 47h0m0 88h0m0 35h0m1-97h0m0 55h0m0-4h0m0 0h0m0-12h0m1 19h0m0-61h0m0 77h0m0-2h0m0-141h0m0 91h0m1 70h0m0-164h0m0 141h0m0-67h0m1 90h0m0-121h0m0 26h0m0 51h0m0-5h0m0 35h0m1-85h0m0 99h0m0-136h0m0 15h0m0 81h0m0 20h0m0-18h0m0-13h0m1-32h0m0 85h0m0-168h0m0 145h0m0-9h0m0-79h0m0 39h0m0-18h0m0 43h0m1-25h0m0-42h0m0 27h0m0-77h0m0 172h0m0-98h0m0-70h0m0 151h0m0-74h0m0 19h0m1-100h0m0 118h0m0 25h0m0-67h0m0 52h0m0 23h0m0-40h0m0-31h0m0-61h0m1 70h0m0-31h0m0 77h0m0-3h0m0-76h0m0 10h0m0 14h0m0 59h0m0 11h0m0-20h0m0 4h0m0-65h0m0-7h0m1-44h0m0 124h0m0-52h0m0-92h0m0 135h0m0-60h0m0 76h0m0-145h0m0-13h0m0 69h0m0 86h0m0 7h0m1-78h0m0 85h0m0-132h0m0 19h0m1 22h0m0 98h0m0-37h0m0-127h0m0 26h0m0 112h0m0-144h0m0 74h0m0-24h0m1 80h0m0-39h0m0-85h0m0 35h0m0 104h0m0 3h0m0-51h0m0 1h0m0-22h0m0 53h0m0-53h0m0 51h0m1-62h0m0-51h0m0 10h0m0 25h0m0 81h0m0-75h0m0 67h0m0 24h0m0-127h0m0 116h0m1-56h0m0 86h0m0-20h0m0-91h0m0 98h0m0-147h0m0 160h0m0-139h0m0-2h0m0 48h0m0 90h0m1-24h0m0-33h0m0 5h0m0 28h0m1 28h0m0-57h0m0-34h0m0 96h0m1-87h0m0 78h0m0 9h0m0-16h0m1 20h0m0-74h0m0-11h0m0 52h0m0 0h0m0-11h0m1 29h0m0 13h0m0-93h0m0-6h0m1 83h0m0-63h0m0-1h0m0 69h0m1 6h0m0-47h0m0 14h0m0 54h0m0-9h0m0-56h0m0-9h0m0 73h0m1-102h0m0 79h0m0-11h0m0-48h0m0-20h0m1 45h0m0-15h0m1 39h0m0-13h0m0-22h0m0 49h0m0 3h0m0-91h0m1 116h0m0-90h0m0 2h0m0 0h0m0 29h0m0-31h0m0 60h0m1-44h0m0 85h0m0-54h0m0-53h0m0 79h0m0 18h0m1-32h0m0-50h0m0 35h0m0 45h0m0-111h0m0 123h0m0-132h0m1 112h0m0-44h0m0-50h0m0 33h0m0-22h0m0 64h0m0 34h0m0-35h0m0-78h0m1 96h0m0-71h0m0 78h0m0-9h0m0-36h0m1 50h0m0-43h0m0-28h0m0-15h0m0 103h0m0-30h0m0-60h0m0-2h0m0 9h0m0 35h0m1-26h0m0-47h0m0 36h0m0 69h0m0 17h0m0-22h0m0 17h0m0-43h0m0-14h0m1-33h0m0-12h0m0 87h0m0-60h0m0-2h0m0 72h0m0-3h0m0 13h0m0-123h0m1 97h0m0-18h0m0 13h0m0-57h0m0 15h0m0 68h0m0-21h0m1-13h0m0 24h0m0-100h0m0 118h0m0-37h0m0-159h0m1 188h0m0 3h0m0-117h0m0-3h0m0 11h0m1 7h0m0 21h0m0 46h0m0-86h0m0 59h0m0-95h0m0 112h0m0 33h0m0-111h0m0 63h0m0 52h0m0-44h0m0-68h0m0 1h0m1 54h0m0 63h0m0-66h0m0-3h0m0-38h0m1 11h0m0 48h0m0-67h0m0 0h0m0 81h0m0-13h0m0 41h0m0-77h0m1-58h0m0 136h0m0-44h0m0-14h0m0 26h0m1 22h0m0-91h0m0-7h0m0 29h0m0-16h0m0 72h0m0-20h0m0-47h0m0 14h0m0-39h0m0 60h0m1 29h0m0-39h0m0-11h0m0-8h0m0-27h0m0 84h0m0-24h0m0-44h0m1 3h0m0 62h0m0-43h0m0-19h0m1-6h0m0 79h0m0-85h0m0 35h0m0-49h0m0 99h0m0-99h0m1 39h0m0-12h0m1-1h0m0-43h0m0 28h0m0 35h0m0 29h0m0-7h0m1-80h0m0 51h0m0-3h0m0-30h0m0 37h0m0 43h0m0-7h0m0-22h0m0-9h0m1-23h0m0-9h0m0 19h0m0 14h0m0 30h0m0-68h0m0-21h0m0-7h0m1 33h0m0 61h0m0-111h0m0 30h0m0 59h0m0-58h0m1 44h0m0 29h0m0-48h0m0-67h0m0 26h0m1 38h0m0-23h0m0-54h0m0 42h0m0 51h0m0 3h0m0 18h0m0-69h0m0 39h0m0-3h0m1-89h0m0 103h0m0-111h0m0 141h0m0-36h0m0 10h0m0-27h0m0 32h0m0-59h0m1-38h0m0 80h0m0 9h0m0 40h0m0-136h0m0-7h0m0 95h0m0-87h0m0 73h0m0 10h0m0-84h0m0 47h0m0 8h0m1-29h0m0 79h0m0-52h0m0 81h0m0-86h0m0-13h0m0 58h0m0 6h0m0-102h0m0 106h0m1-52h0m0-7h0m0-18h0m0 90h0m0-71h0m0 7h0m1 42h0m0-56h0m0 15h0m0-13h0m0 24h0m0 56h0m0-78h0m0 41h0m0-14h0m0 36h0m1-12h0m0-14h0m0-83h0m0 45h0m0 5h0m0 1h0m0-42h0m0 116h0m0-112h0m0-3h0m0 71h0m1-38h0m0 42h0m0 32h0m0-52h0m0 35h0m0-36h0m0-62h0m0 28h0m0 53h0m0-80h0m0 8h0m0 16h0m0 21h0m1 53h0m0-103h0m0 104h0m0 24h0m0-28h0m0-3h0m0 41h0m1-85h0m0 27h0m0 53h0m0-122h0m1 86h0m0-46h0m0-21h0m0-7h0m0 99h0m0-9h0m0-42h0m1-50h0m0 119h0m0-53h0m0-47h0m0 13h0m0-55h0m0 133h0m0-41h0m0-71h0m0 32h0m0 56h0m1 24h0m0-85h0m0 116h0m0-143h0m0 61h0m0 68h0m0-88h0m0 74h0m0-5h0m0-88h0m0 54h0m0-38h0m1-41h0m0 93h0m0-65h0m0 8h0m0 10h0m0 42h0m0-50h0m1-27h0m0 80h0m0 21h0m0-37h0m0-99h0m0 110h0m0 38h0m0-16h0m0-45h0m1 32h0m0-60h0m0 84h0m0-11h0m0 16h0m0-63h0m1 31h0m0-15h0m0 63h0m0-45h0m0-25h0m0-2h0m0 2h0m0 102h0m0-47h0m0-33h0m0 13h0m0-4h0m0 17h0m0-27h0m0 29h0m0-71h0m1 95h0m0-79h0m0 2h0m0-25h0m0 7h0m0 62h0m0-68h0m0 6h0m0-9h0m1 127h0m0-92h0m0 76h0m0-25h0m0-46h0m0 77h0m0-54h0m1 52h0m0-86h0m0 92h0m0-13h0m0-52h0m0-18h0m0 23h0m0 12h0m0 10h0m0-80h0m0 117h0m0-126h0m0 109h0m0-26h0m0 13h0m1-95h0m0 36h0m0 15h0m0-37h0m0 82h0m0-37h0m0-47h0m0 97h0m0 8h0m0-46h0m0-11h0m1 0h0m0-9h0m0 20h0m0-10h0m0 96h0m1-71h0m0 17h0m0-78h0m0 23h0m0 21h0m0-49h0m0 58h0m0-53h0m0 8h0m0 14h0m1 19h0m0-69h0m0 27h0m0 48h0m0 45h0m0-66h0m0-44h0m0 8h0m1 16h0m0 4h0m0 105h0m0-124h0m0 34h0m0-21h0m0-11h0m0 9h0m0 33h0m0 55h0m1-72h0m0 8h0m0 68h0m1-56h0m0-3h0m0-38h0m0 58h0m0-35h0m0 83h0m0-52h0m0 81h0m1-66h0m0-46h0m0 48h0m0-26h0m0-62h0m0 24h0m0 3h0m0 22h0m0-46h0m0 115h0m0-30h0m1-60h0m0 62h0m0 4h0m1-86h0m0 21h0m0 60h0m0-53h0m0-15h0m0 34h0m0-31h0m0 2h0m0 31h0m0 27h0m0-84h0m1 45h0m0 0h0m0-21h0m0 80h0m0-107h0m0 43h0m0 50h0m1-87h0m0-4h0m0 49h0m0-17h0m0-16h0m0 63h0m0-16h0m1-1h0m0-3h0m0-58h0m0 99h0m0-74h0m0 104h0m0-32h0m0 0h0m0-72h0m1 45h0m0 14h0m0 11h0m0-49h0m0-16h0m0 23h0m0 26h0m0-18h0m1-31h0m0 53h0m0-78h0m0-12h0m0 91h0m1 22h0m0-45h0m0-15h0m1 10h0m0-87h0m0 93h0m0-14h0m0-19h0m0-16h0m0 33h0m0-81h0m0 77h0m1 15h0m0-25h0m0 17h0m0-55h0m0 61h0m0-9h0m0-26h0m0 47h0m0-43h0m1-2h0m0 22h0m0 2h0m0 20h0m0 11h0m1-38h0m0 17h0m0-22h0m0-89h0m0 94h0m0-66h0m0 83h0m0-18h0m0 10h0m0-50h0m1 24h0m0 20h0m0-91h0m0 136h0m0-146h0m0 99h0m1 45h0m0-54h0m0 35h0m0-7h0m0-70h0m0 60h0m0-45h0m0-13h0m0-20h0m0 0h0m0 12h0m0 42h0m1-67h0m0-22h0m0 71h0m0-53h0m0 143h0m0-131h0m0 38h0m0-8h0m1-11h0m0 21h0m0 92h0m0-103h0m0 16h0m0 16h0m0-44h0m0 49h0m0 11h0m1 12h0m0-3h0m0-11h0m0-29h0m0 30h0m0 9h0m1-21h0m0-40h0m0 35h0m0-16h0m0 24h0m0-108h0m0 43h0m0 59h0m0 36h0m0-83h0m0-21h0m1 31h0m0 5h0m0-1h0m0-40h0m0 90h0m0 35h0m0-56h0m0-28h0m0 68h0m1-70h0m0 31h0m0-89h0m0 67h0m0 3h0m0-43h0m0 39h0m0-11h0m0 69h0m1-16h0m0 15h0m0-40h0m0 26h0m0-56h0m0 43h0m0 12h0m0-23h0m0-52h0m0 25h0m0 50h0m1 50h0m0-43h0m0-55h0m1 53h0m0-64h0m0 82h0m0-108h0m0 31h0m0 6h0m0-21h0m0 21h0m0 131h0m1-190h0m0 51h0m0 71h0m0-124h0m0 60h0m0-6h0m0-4h0m0 76h0m0-9h0m0 26h0m0-50h0m1 13h0m0-81h0m0 128h0m0-26h0m0-80h0m0-13h0m1 44h0m0 26h0m0-11h0m0 22h0m0-48h0m0-8h0m0-5h0m0 63h0m1-91h0m0 58h0m0-74h0m0 133h0m0-106h0m0 83h0m0-54h0m0 54h0m1-3h0m0 22h0m0-51h0m0 24h0m0-27h0m0 32h0m1-24h0m0-7h0m1-18h0m0-11h0m0-40h0m1 48h0m0 36h0m0-47h0m0 71h0m1-8h0m0 105h0m0-122h0m0-35h0m0 86h0m0-107h0m1 105h0m0-44h0m0 61h0m0-91h0m0 67h0m0-45h0m0 29h0m0 17h0m1-58h0m0 26h0m0-6h0m0-13h0m0 44h0m0-9h0m1 43h0m0-64h0m0 62h0m0-99h0m1 28h0m0 62h0m0-66h0m0 30h0m0-79h0m0 78h0m0-52h0m0 60h0m0-19h0m0 43h0m1-37h0m0-43h0m0 80h0m0-72h0m1 81h0m0 4h0m0-87h0m0 77h0m0-52h0m0 14h0m0 0h0m0 74h0m1-42h0m0 32h0m0 14h0m0-28h0m0-13h0m0-24h0m0 46h0m1-49h0m0 96h0m0-70h0m0-32h0m0 70h0m0-45h0m0 58h0m0-118h0m0 36h0m0-17h0m0 47h0m0-44h0m0 19h0m0 54h0m0-85h0m1 104h0m0-95h0m0 89h0m0 16h0m0-113h0m0-2h0m0 24h0m1 34h0m0 8h0m0-66h0m0 58h0m0-73h0m0 108h0m0 26h0m0-64h0m1-17h0m0-44h0m0 0h0m0 108h0m0 17h0m0-43h0m0 2h0m0-65h0m1 34h0m0-41h0m0 16h0m0 4h0m0 103h0m0-85h0m0 81h0m0-79h0m0 41h0m1 26h0m0-109h0m0 114h0m0-109h0m0 15h0m0-24h0m0 52h0m0-69h0m0 52h0m1 79h0m0-96h0m0 65h0m1-29h0m0 3h0m0 21h0m0-11h0m0 44h0m1-45h0m0-72h0m0 100h0m0-100h0m0 73h0m0-49h0m0 5h0m0 96h0m1-16h0m0-91h0m0 42h0m0-39h0m1 89h0m0-33h0m0 36h0m0-127h0m0-28h0m0 156h0m0 14h0m0-54h0m0-65h0m1 99h0m0-122h0m0 27h0m0 75h0m0-138h0m0 100h0m0-6h0m0-31h0m0 77h0m0 11h0m0 3h0m1 12h0m0-93h0m0 46h0m0-37h0m0-39h0m0 108h0m0-75h0m0 83h0m0-60h0m0 32h0m0 13h0m0 29h0m0-114h0m1 106h0m0-59h0m0-18h0m0 25h0m0-13h0m0 35h0m0-14h0m0 42h0m0-22h0m0-21h0m1-11h0m0-59h0m0 63h0m0-40h0m0-97h0m0 179h0m0-44h0m0 34h0m0-82h0m0 22h0m1 35h0m0-53h0m0 34h0m0-57h0m0 82h0m0 26h0m1-43h0m0-26h0m0 33h0m0-59h0m0 16h0m0 52h0m1-12h0m0 30h0m0-87h0m0 8h0m0 12h0m0 15h0m0-68h0m1 77h0m0-16h0m0 8h0m0 16h0m0 7h0m0-36h0m0 58h0m0-29h0m1-18h0m0 16h0m0-13h0m0-37h0m1 19h0m0 74h0m0-131h0m1 71h0m0 25h0m1-33h0m0 23h0m0 5h0m1-83h0m0 89h0m0-62h0m1 16h0m0 14h0m0 18h0m0 19h0m0-49h0m0 15h0m0-54h0m1 95h0m0-34h0m0 23h0m0-59h0m1 65h0m0-46h0m0 47h0m0-33h0m1-6h0m0 14h0m0-7h0m0 1h0m0-34h0m0 72h0m1-5h0m0-26h0m0 13h0m0-63h0m0 6h0m0 15h0m1 4h0m0 48h0m0 27h0m0-85h0m0 2h0m1 13h0m0 55h0m0-65h0m0 24h0m1-1h0m0-8h0m0-11h0m0 67h0m0-43h0m1-29h0m0 61h0m0-40h0m0 19h0m0-39h0m0-108h0m0 164h0m0-125h0m0 112h0m0-38h0m0 11h0m0-38h0m1-2h0m0 35h0m0 7h0m0 8h0m0 22h0m0-71h0m0 40h0m0-69h0m1 68h0m0-13h0m0 56h0m0-78h0m0 53h0m0-28h0m0-42h0m0 79h0m0 12h0m1 23h0m0-70h0m0 10h0m0 23h0m0 1h0m1 31h0m0-86h0m0 20h0m0-11h0m0-2h0m0-22h0m0 58h0m1-17h0m0 7h0m0-24h0m0-25h0m1 10h0m0 28h0m0-11h0m0 21h0m0-15h0m0 39h0m0-41h0m0 7h0m0-19h0m1 15h0m0 36h0m0-42h0m0-29h0m0 25h0m1 17h0m0 41h0m0-48h0m0-39h0m0 10h0m0 29h0m0-31h0m1 18h0m0 1h0m0 19h0m0-8h0m0 0h0m0-27h0m1 47h0m1-15h0m0 12h0m0-4h0m0-86h0m0 97h0m0-15h0m1-7h0m0 14h0m1-60h0m0 103h0m0-122h0m0 69h0m0-95h0m0 75h0m0-1h0m1-36h0m0-14h0m0-37h0m0-13h0m0 48h0m0 29h0m0 25h0m0-36h0m0 39h0m1 16h0m0 3h0m0-1h0m0-90h0m0 37h0m0 58h0m0-5h0m0-4h0m1-60h0m0 46h0m0-17h0m0-25h0m0 46h0m0-62h0m0 59h0m0 13h0m0-87h0m1 83h0m0 48h0m0-115h0m1 2h0m0 13h0m0 86h0m0-139h0m0 31h0m0 4h0m0-20h0m0 100h0m0-12h0m1-57h0m0 6h0m0-37h0m0 154h0m0 19h0m0-75h0m0-120h0m1 41h0m0 18h0m0 76h0m0-77h0m0 89h0m0 13h0m0-101h0m1 68h0m0-29h0m0-77h0m0 126h0m0-52h0m0-87h0m0 5h0m0 136h0m1-95h0m0 39h0m0-99h0m0 96h0m0-32h0m0-57h0m0 138h0m0-42h0m1 95h0m0-114h0m0 9h0m0 44h0m0-84h0m0 29h0m0-16h0m0 15h0m0 73h0m0-92h0m1 18h0m0-17h0m0 100h0m0-114h0m0 49h0m0-18h0m0 77h0m0-145h0m0-10h0m0 56h0m0 58h0m0 7h0m0-122h0m0 153h0m0-2h0m1-94h0m0 7h0m0 37h0m0-44h0m0 123h0m0-101h0m0 32h0m0 4h0m1 11h0m0 42h0m0 14h0m0-5h0m0-94h0m0 24h0m1-20h0m0 53h0m0 21h0m0-42h0m0 6h0m0 31h0m1 8h0m0-142h0m0 136h0m0-76h0m0 16h0m0 64h0m0-54h0m0 17h0m0 44h0m0-64h0m0-5h0m0 19h0m1-29h0m0 90h0m0-26h0m0-94h0m0 57h0m0-56h0m0 44h0m0-73h0m0 84h0m1 46h0m0 33h0m0-77h0m0-8h0m0 41h0m0 5h0m0-35h0m0 40h0m0-27h0m0-36h0m1 84h0m0-67h0m0 9h0m0-28h0m0 74h0m0-47h0m1-16h0m0 16h0m0-24h0m0 87h0m0-59h0m0 35h0m0-36h0m0-8h0m0 75h0m0-117h0m0 26h0m0 36h0m0 2h0m1 19h0m0 32h0m0-107h0m0-5h0m0-23h0m0 67h0m0-19h0m0 60h0m0-51h0m0 68h0m0-98h0m1 1h0m0 27h0m0-30h0m0 27h0m0 14h0m0 42h0m0-41h0m0 62h0m0 10h0m0-95h0m0-5h0m0 58h0m0-36h0m0-12h0m0-17h0m1 106h0m0-109h0m0 0h0m0 10h0m0 45h0m0-76h0m0 27h0m0 3h0m0 28h0m0-17h0m1 72h0m0-47h0m0-12h0m0 35h0m0 32h0m0 20h0m0-87h0m0-27h0m0 30h0m0 8h0m0 60h0m1-69h0m0 59h0m0-24h0m0 49h0m0-50h0m0-66h0m0 54h0m1 16h0m0-66h0m0-15h0m1 42h0m0 53h0m0-81h0m0 89h0m0-84h0m0 19h0m0 26h0m1-2h0m0 30h0m0-50h0m0-26h0m0 28h0m1-11h0m0 61h0m0-48h0m0-5h0m0-2h0m0 10h0m0 32h0m1-59h0m0 12h0m0-26h0m0 37h0m0 14h0m1-39h0m0 15h0m0 0h0m0 42h0m0-8h0m0-78h0m1 29h0m0 32h0m0-57h0m0 15h0m0 33h0m0-56h0m0-2h0m1 66h0m0-103h0m0 172h0m0-120h0m0-35h0m0-3h0m0 4h0m0-10h0m0-19h0m0 100h0m0 7h0m0-74h0m0 23h0m0 87h0m0-40h0m1-62h0m0 74h0m0-75h0m0 71h0m0-12h0m1-102h0m0 74h0m0-6h0m0 26h0m0 33h0m0-98h0m0 114h0m0-91h0m1 29h0m0-33h0m0 55h0m0 6h0m0-67h0m0-50h0m0 91h0m0 15h0m0-35h0m1 34h0m0-27h0m0 55h0m0-41h0m0-31h0m1 47h0m0-54h0m0 3h0m0 35h0m0-8h0m0 15h0m0-12h0m0-67h0m1 45h0m0 45h0m0-48h0m0 50h0m0-62h0m0-12h0m1 6h0m0-43h0m0 59h0m0 3h0m0 66h0m0-103h0m0 61h0m0-29h0m0-20h0m0 53h0m0-29h0m1 45h0m0 21h0m0-3h0m0-25h0m0-38h0m0-68h0m0 114h0m0-7h0m0 9h0m0-5h0m0-98h0m0 7h0m1 79h0m0-47h0m0-9h0m0 76h0m0-57h0m0 6h0m0-4h0m1-48h0m0 47h0m1-4h0m0 11h0m0-7h0m0 31h0m1 28h0m0-69h0m0 66h0m0-79h0m0-29h0m0-14h0m0 67h0m0 73h0m0-83h0m0 70h0m0-104h0m0 51h0m1-54h0m0 50h0m0-47h0m1 129h0m0-1h0m0-93h0m0 69h0m0-121h0m1 111h0m0 2h0m1-37h0m0 50h0m0-2h0m0 28h0m1-88h0m0 59h0m0-20h0m1 14h0m0-4h0m0 14h0m0 12h0m0-53h0m1 46h0m0-66h0m1 6h0m0 60h0m0-57h0m0 54h0m1 40h0m1-40h0m0-65h0m0-4h0m0 105h0m1-19h0m0 7h0m0-83h0m0 63h0m0-29h0m1-33h0m0 47h0m0 52h0m0-12h0m0-66h0m0 31h0m0 6h0m0 71h0m1-32h0m0-39h0m0 4h0m0 48h0m0-15h0m0 18h0m1-114h0m0 86h0m0 8h0m1-40h0m0-23h0m0 53h0m0-29h0m0 12h0m1 5h0m0 29h0m0-35h0m0-15h0m0 63h0m0-66h0m0-18h0m0 53h0m0-24h0m0 57h0m1-93h0m0 66h0m0-28h0m1-14h0m0-21h0m0 17h0m0 31h0m0 7h0m0-64h0m0 64h0m0 1h0m0-31h0m0 66h0m0-16h0m1 14h0m0-92h0m0 84h0m0-68h0m0 70h0m0 6h0m0-85h0m1 24h0m0-26h0m0-4h0m0 94h0m1-36h0m0-56h0m0 76h0m0-42h0m1 9h0m0-6h0m0-11h0m0-5h0m0 57h0m0-45h0m0-13h0m0-19h0m0-3h0m1 26h0m0-95h0m1 61h0m0 14h0m0 5h0m0-6h0m0 57h0m0-60h0m0 32h0m0-18h0m0 80h0m0-81h0m0 62h0m1-47h0m0 32h0m0-89h0m0 58h0m0-2h0m0-45h0m0 22h0m0 38h0m0-26h0m1 31h0m0-44h0m0-6h0m0 20h0m0-101h0m0 59h0m0 93h0m0 4h0m0-18h0m1-15h0m0 19h0m0-21h0m0 26h0m0-44h0m0 1h0m0 26h0m0-19h0m0 39h0m1-42h0m0-9h0m0 38h0m0-137h0m0 142h0m0-21h0m0-39h0m0 0h0m1 63h0m0-39h0m0-26h0m0 16h0m0-12h0m0 1h0m0 10h0m0 13h0m1 33h0m0-53h0m0-26h0m0-9h0m1 55h0m0-36h0m0 72h0m0-18h0m0-12h0m0-49h0m0 33h0m0 29h0m1-34h0m0 21h0m0-12h0m1-22h0m0 45h0m0-44h0m0-28h0m0-2h0m0 27h0m0 6h0m0 3h0m0 59h0m0-22h0m1-30h0m0-38h0m0 19h0m0 18h0m0 26h0m1-53h0m0 39h0m0-52h0m0 66h0m1-81h0m0 1h0m0 25h0m0 42h0m0 15h0m0-83h0m1-37h0m0 111h0m0-37h0m0 51h0m0-143h0m0 144h0m0-6h0m0-62h0m0-21h0m1 15h0m0 75h0m0-26h0m0-52h0m0 74h0m0-77h0m0-33h0m0 82h0m0-29h0m0 61h0m0-18h0m0-6h0m0-64h0m0-24h0m1 89h0m0-30h0m0 16h0m0 28h0m0-22h0m0-98h0m0 184h0m0-50h0m0-136h0m0 57h0m0 51h0m0-3h0m0-4h0m1-49h0m0 2h0m0-12h0m0 27h0m1 68h0m0-25h0m0 25h0m0-80h0m0 26h0m0-15h0m0 73h0m0-45h0m0-79h0m0 96h0m0-77h0m1-8h0m0 118h0m0-93h0m0-11h0m0 63h0m1-34h0m0 23h0m0-54h0m0 47h0m0 30h0m0-98h0m0 41h0m0 71h0m0-11h0m0-16h0m0-4h0m1-49h0m0 45h0m0-41h0m0 78h0m0-27h0m0-4h0m0 22h0m0-84h0m0 12h0m0-11h0m0 68h0m0 28h0m1 5h0m0-91h0m0 48h0m0-93h0m0-30h0m0 33h0m0 122h0m0-140h0m0 110h0m0 41h0m1-31h0m0 40h0m0-57h0m0 48h0m0-126h0m0 61h0m0 12h0m0-50h0m1 18h0m0 51h0m0 21h0m0-42h0m0-38h0m0 53h0m0 48h0m0-41h0m0-101h0m1 89h0m0 16h0m0 31h0m0-33h0m0 29h0m0 5h0m0-80h0m1 42h0m0 11h0m0 46h0m0-81h0m0 71h0m0 3h0m0-11h0m0-90h0m0 20h0m1 26h0m0 20h0m0 33h0m0-48h0m0-7h0m0-24h0m0 4h0m1 50h0m0-26h0m0-21h0m0 6h0m0-32h0m1 22h0m0-14h0m0 102h0m0 8h0m0-118h0m0 17h0m0 69h0m0-31h0m0-6h0m1 83h0m0-41h0m0-51h0m0 21h0m0 56h0m0-83h0m0 36h0m1-13h0m0-18h0m0 1h0m0-5h0m0 13h0m1 21h0m0-35h0m0 2h0m0-23h0m0 33h0m0-22h0m0 48h0m0-13h0m0 59h0m1-83h0m0-104h0m0 195h0m0-50h0m0-77h0m0-17h0m0 103h0m0-83h0m1 35h0m0 14h0m0-29h0m0 69h0m0-108h0m0 146h0m0-75h0m0-70h0m0 95h0m0 37h0m0-102h0m0-77h0m0 52h0m1 5h0m0 19h0m0 74h0m0-94h0m0 46h0m0-5h0m0-42h0m0 31h0m0-44h0m0 19h0m1 116h0m0-81h0m0 96h0m0-79h0m0 70h0m0-9h0m0-97h0m0 34h0m0 70h0m0-164h0m0 171h0m0-126h0m0 1h0m1 81h0m0-16h0m0-46h0m0 24h0m0-1h0m0-15h0m0 53h0m0-118h0m0 27h0m0 99h0m0-98h0m1 63h0m0-69h0m0 144h0m0-128h0m0 103h0m0-178h0m0 114h0m0-85h0m0 156h0m0-80h0m0 95h0m0-14h0m1-49h0m0 41h0m0-2h0m0-21h0m0 50h0m0-80h0m0 5h0m0 12h0m0-39h0m0 37h0m0-47h0m0-64h0m1 100h0m0-54h0m0 119h0m0-128h0m0-48h0m0 104h0m0 68h0m0-87h0m0 28h0m0-24h0m0 56h0m1-45h0m0-48h0m0 127h0m0-124h0m0 124h0m0-113h0m0 0h0m0 120h0m0-128h0m0 43h0m0-34h0m0 88h0m0 28h0m0-111h0m0 101h0m0-150h0m0 28h0m1 6h0m0 108h0m0-170h0m0 96h0m0 3h0m0 117h0m0-133h0m0 37h0m0 31h0m1-40h0m0 50h0m0-66h0m0-34h0m0-56h0m0 55h0m0 75h0m0 23h0m0-145h0m0 172h0m0-124h0m0 29h0m0 69h0m0-24h0m0-60h0m0 11h0m1 104h0m0-67h0m0-23h0m0 16h0m0-19h0m0 99h0m0-103h0m1-17h0m0 22h0m0 50h0m0-30h0m0 61h0m0-28h0m0-36h0m0-51h0m0 60h0m0 1h0m1 58h0m0-3h0m0-31h0m0 2h0m0-48h0m0 46h0m0-40h0m0 75h0m1-43h0m0 44h0m0 6h0m0-2h0m0-96h0m0 83h0m0-77h0m1-22h0m0-12h0m0-6h0m0 103h0m0 5h0m0-17h0m0 37h0m0-90h0m0 23h0m0 46h0m1 17h0m0-34h0m0-18h0m0-54h0m0 88h0m1-56h0m0 15h0m0 46h0m0 7h0m0 3h0m0-61h0m0-24h0m0 69h0m1-48h0m0-25h0m0 24h0m0 3h0m0-23h0m0 3h0m0 11h0m0-16h0m1-24h0m0 20h0m0 23h0m0 10h0m0 110h0m0-137h0m1 7h0m0-16h0m0 85h0m0-59h0m0-17h0m1-2h0m0 68h0m0-68h0m0 69h0m1-102h0m0 87h0m0-4h0m0-58h0m0 90h0m0-98h0m1 19h0m0 52h0m0-38h0m0-29h0m0 71h0m0-35h0m1-8h0m0 47h0m0-6h0m0-6h0m0-25h0m0-22h0m1 66h0m0-68h0m0 59h0m0-47h0m0 55h0m0-96h0m0 9h0m1 29h0m1-3h0m0 50h0m0-147h0m0 107h0m0-71h0m0 64h0m0-37h0m0 35h0m0 3h0m0 43h0m1-39h0m0 41h0m0-40h0m0 19h0m0-23h0m0 43h0m0-27h0m1-33h0m0 9h0m0 13h0m1 30h0m0-7h0m0-12h0m0-19h0m1 31h0m0 27h0m0-82h0m0-8h0m0 13h0m0 15h0m0 1h0m0-1h0m1 23h0m0-17h0m1 10h0m0-20h0m0-17h0m1 61h0m0-42h0m0-8h0m0 17h0m0 14h0m1 69h0m0-114h0m0 0h0m1 120h0m0-66h0m0-22h0m0 24h0m0-23h0m0-6h0m0-44h0m1 54h0m0-56h0m0 71h0m0-36h0m0-6h0m0-7h0m0-76h0m0 59h0m1-29h0m0 83h0m0-21h0m0 47h0m0-32h0m0-91h0m0 176h0m0-132h0m0-10h0m0 77h0m0-27h0m0 7h0m0-66h0m1 39h0m0 54h0m0-75h0m0 30h0m0 27h0m0-7h0m0-108h0m0 56h0m0 118h0m0-102h0m1 48h0m0 6h0m0-103h0m0 14h0m0 40h0m0 52h0m0-68h0m1-7h0m0 93h0m0-115h0m0 7h0m0 59h0m0 0h0m1-56h0m0 96h0m0-133h0m0 42h0m0 5h0m0 84h0m0-25h0m0-120h0m1 68h0m0 22h0m0-64h0m0 104h0m0-128h0m0 154h0m0-7h0m0-147h0m0 14h0m0 51h0m0-1h0m1 98h0m0-99h0m0 30h0m0-28h0m0-8h0m0 0h0m0 1h0m0-54h0m0 107h0m0-51h0m1 94h0m0-148h0m0 94h0m0-42h0m0-30h0m0 60h0m0 12h0m0-21h0m1-91h0m0 125h0m0-15h0m0 11h0m0-82h0m0 70h0m0-2h0m0-30h0m0 87h0m0-165h0m0 28h0m1 92h0m0-42h0m0-36h0m0 114h0m0 9h0m0-111h0m0 73h0m1-55h0m0 99h0m0-75h0m0-19h0m0-3h0m0-19h0m0 24h0m0 58h0m0 40h0m1-35h0m0 0h0m0-31h0m0-76h0m0 31h0m0 106h0m0-111h0m1 124h0m0-109h0m0 96h0m0-99h0m0 32h0m1-62h0m0 23h0m0-57h0m0 19h0m0 66h0m0-20h0m1 44h0m0 18h0m0-37h0m0 18h0m0 8h0m0 67h0m1-15h0m0-59h0m0 48h0m0-45h0m0-41h0m0-67h0m0 21h0m0 38h0m1 48h0m0 10h0m0-61h0m0 9h0m0 31h0m0 81h0m0-5h0m0-100h0m0 111h0m0-53h0m0-35h0m0 58h0m1-37h0m0-10h0m0 37h0m0 31h0m0-140h0m0 145h0m0-138h0m1 24h0m0 49h0m0-129h0m0 75h0m0-27h0m0 26h0m0 69h0m0 56h0m0-124h0m0 58h0m0-92h0m1 40h0m0-20h0m0 29h0m0 48h0m0-2h0m0 11h0m0 32h0m0 18h0m1-62h0m0-38h0m1 61h0m0 18h0m0-18h0m0 3h0m0 45h0m0-130h0m0 109h0m0-14h0m0 35h0m1-80h0m0 75h0m1-50h0m0 21h0m0-94h0m0 57h0m1-7h0m0 48h0m0 3h0m0-47h0m0 14h0m0-62h0m0 48h0m0 21h0m0-58h0m1 40h0m0 28h0m0-8h0m0-73h0m0 91h0m1 29h0m0-107h0m0 62h0m0 8h0m0 38h0m0-67h0m0-6h0m1 55h0m0 20h0m0-34h0m0-36h0m0 51h0m0-3h0m0 1h0m0-108h0m0 130h0m1-37h0m1 46h0m0-13h0m1-60h0m0-1h0m0 35h0m0 23h0m0-60h0m0 58h0m0-48h0m1-33h0m0 79h0m0-95h0m0 17h0m0 1h0m0 27h0m0 24h0m1-73h0m0 71h0m0 53h0m0-83h0m0-36h0m0 71h0m0-46h0m0 59h0m1 1h0m0-61h0m0 44h0m0-1h0m0 28h0m0-105h0m1 51h0m0-48h0m0 16h0m0-35h0m0 16h0m0-23h0m0 162h0m0-152h0m0 92h0m0-38h0m0-5h0m0 48h0m1-14h0m0 20h0m0-83h0m0 82h0m0-70h0m1 62h0m0-2h0m0-26h0m0 44h0m0-54h0m0 64h0m0-30h0m0-18h0m1-29h0m0-19h0m0 90h0m0-71h0m0 70h0m0-88h0m0 11h0m1 5h0m0-28h0m0 39h0m0 16h0m0-43h0m0 72h0m1 10h0m0-65h0m0 19h0m0-3h0m0-32h0m0-16h0m0 87h0m0 0h0m1-14h0m0-30h0m0 40h0m0-63h0m0-29h0m0 14h0m0 7h0m0 40h0m0 37h0m0-53h0m0 57h0m1-22h0m0-43h0m0-9h0m0 8h0m0-22h0m0 72h0m0-22h0m0-17h0m1 13h0m0 31h0m0-84h0m0 64h0m0 27h0m0-15h0m1-36h0m0-19h0m0 22h0m0-4h0m0-4h0m0-29h0m0 83h0m0-88h0m0 28h0m0-28h0m1 34h0m0-18h0m0 45h0m0-103h0m0 83h0m0-50h0m0 74h0m0-7h0m1-89h0m0 75h0m0-31h0m0-31h0m0-1h0m0 59h0m0-24h0m0 22h0m0-34h0m0 155h0m0-88h0m1-77h0m0 59h0m0-43h0m0-72h0m0-16h0m0 158h0m0-67h0m0 34h0m0-36h0m0 79h0m0-8h0m1-87h0m0-31h0m0 45h0m0-6h0m0-46h0m0 37h0m0 0h0m1 71h0m0-83h0m0-73h0m0 45h0m0 74h0m0-68h0m1 15h0m0 52h0m0 42h0m0 4h0m0-50h0m0 43h0m1 38h0m0-164h0m0 28h0m0-48h0m0 100h0m0-64h0m0-45h0m0 128h0m0-104h0m0 90h0m0 1h0m0-1h0m1-44h0m0-13h0m0 21h0m0-1h0m0-13h0m0 42h0m0 59h0m0-126h0m0 65h0m1 3h0m0-27h0m0 2h0m0 3h0m0 48h0m1-81h0m0 22h0m0 31h0m1 39h0m0-78h0m0 81h0m0-110h0m0 8h0m0-17h0m0 47h0m0 22h0m0 54h0m0-68h0m1 80h0m0-25h0m0-46h0m0 27h0m0-86h0m0 138h0m0-138h0m0 46h0m0-65h0m0 106h0m0-100h0m0 29h0m0-34h0m1 63h0m0 21h0m0 50h0m0-137h0m0 32h0m0 127h0m0-35h0m1-14h0m0 51h0m0-86h0m0 45h0m0-5h0m0-6h0m0 22h0m0-1h0m0-8h0m0-21h0m1-7h0m0 36h0m0-44h0m0 4h0m1 3h0m0 58h0m0-13h0m0 16h0m0-36h0m0 126h0m0-133h0m1-28h0m0-13h0m0 25h0m0 58h0m0-18h0m0 6h0m1-70h0m0 28h0m0 60h0m0-90h0m0 8h0m1-31h0m0 29h0m0 40h0m0-16h0m0-12h0m0-4h0m0-6h0m1 31h0m0 16h0m0-14h0m0 17h0m0-16h0m0-28h0m0 56h0m0 22h0m0-4h0m0-30h0m0-56h0m0 98h0m0 7h0m1-45h0m0 28h0m0-48h0m0 61h0m0-54h0m0 41h0m1-76h0m0-15h0m0 18h0m0 55h0m0-21h0m0-51h0m0 137h0m0-53h0m0-55h0m0 27h0m0-5h0m0 8h0m0 31h0m1-8h0m0 20h0m0-13h0m0-11h0m0-68h0m0 13h0m0-1h0m0-43h0m1 60h0m0 11h0m0-59h0m0 75h0m1 27h0m0-155h0m0 111h0m0 6h0m0-21h0m0-78h0m0 101h0m0-8h0m0-68h0m0 75h0m0-19h0m0-76h0m0 2h0m0 82h0m1-44h0m0 111h0m0-4h0m0-96h0m0 67h0m0-53h0m0-25h0m0-72h0m0 146h0m0-7h0m0-103h0m0 125h0m0-41h0m1-75h0m0 21h0m0 59h0m0 37h0m0-109h0m0 14h0m0 65h0m0-93h0m0 55h0m1-81h0m0-6h0m0 54h0m0-3h0m0 69h0m0-4h0m0-126h0m0 157h0m0 41h0m1-85h0m0 51h0m0-86h0m0-6h0m0-27h0m0 89h0m0-53h0m0 99h0m0-68h0m0-42h0m0 118h0m0-99h0m0 76h0m0-64h0m1 73h0m0-46h0m0 8h0m0 61h0m0-54h0m0-116h0m0 155h0m0-18h0m0-22h0m1 24h0m0-42h0m0 76h0m0-111h0m0 36h0m0 48h0m0 4h0m0-115h0m0-32h0m0 36h0m1-15h0m0 97h0m0 45h0m0-63h0m0-63h0m0-11h0m0 117h0m0-67h0m0-41h0m0 119h0m1 15h0m0-2h0m0-48h0m0-17h0m0 28h0m0-88h0m0 73h0m0-66h0m0 113h0m0-55h0m0-32h0m1 45h0m0-155h0m0 134h0m0 51h0m0-43h0m0 48h0m0-116h0m1 61h0m0 71h0m0-155h0m0 151h0m0-54h0m0-18h0m0-45h0m0-12h0m0 31h0m1-36h0m0 131h0m0-95h0m0-102h0m0 126h0m0 76h0m0-53h0m0-35h0m0 22h0m1-66h0m0 8h0m0 89h0m0-91h0m0 61h0m0 49h0m0-85h0m0 93h0m0-54h0m0 33h0m0-87h0m0-7h0m0-7h0m1-54h0m0 96h0m0-81h0m0 22h0m0-52h0m0 110h0m0 84h0m0-123h0m0 57h0m1-116h0m0 23h0m0 28h0m0 12h0m0 28h0m0-2h0m0 47h0m0-10h0m0-5h0m1-78h0m0 108h0m0-58h0m0 89h0m0-1h0m0-123h0m0 112h0m0-3h0m0-88h0m0 59h0m0 12h0m0 2h0m0 25h0m1 20h0m0-72h0m0 27h0m0-31h0m0-9h0m0-8h0m0 69h0m1-139h0m0 74h0m0 9h0m0 56h0m0-7h0m0-32h0m1 19h0m0 33h0m0-83h0m0-9h0m0 65h0m0 22h0m1-53h0m0-36h0m0-22h0m1 73h0m0-27h0m0 6h0m0-41h0m0 39h0m1-26h0m0 93h0m0-69h0m0 32h0m0-88h0m0 126h0m1-37h0m0-72h0m0 96h0m0-71h0m0 50h0m0-77h0m0 108h0m0-83h0m0 35h0m0-72h0m0 77h0m0-37h0m0-28h0m1 90h0m0 8h0m0-74h0m0 88h0m0-44h0m0-47h0m0 57h0m0-59h0m0 57h0m0-3h0m0 1h0m0-84h0m1 124h0m0-30h0m0 15h0m0-78h0m0-12h0m1-25h0m0 121h0m0-76h0m0 75h0m0-72h0m0 65h0m0-4h0m1-32h0m0 0h0m0-64h0m0 93h0m0-61h0m1 72h0m0-89h0m0 79h0m0-61h0m0 55h0m0-35h0m0-17h0m1 46h0m0-21h0m0-40h0m0 58h0m0 21h0m1-55h0m0-5h0m0 19h0m0-40h0m1-19h0m0 11h0m0 81h0m0-16h0m0-69h0m1 62h0m0 26h0m1-15h0m0-37h0m1 24h0m0-35h0m0-10h0m0 73h0m1 34h0m0-39h0m0-73h0m0 23h0m0 40h0m1-22h0m0-34h0m0 1h0m0-3h0m0 1h0m1 17h0m0 7h0m0-44h0m0 77h0m0-7h0m1 4h0m0-92h0m0 6h0m0 68h0m1-50h0m0 70h0m0-6h0m0-8h0m0-22h0m0-34h0m1 10h0m0-60h0m0 30h0m0 32h0m0 60h0m0-94h0m1 89h0m0-44h0m0 45h0m0-23h0m0-19h0m0 28h0m0-94h0m1 127h0m0-42h0m0-31h0m0-43h0m0 105h0m0-139h0m0 47h0m0 6h0m0-64h0m0-9h0m0 124h0m0-96h0m0-21h0m1 168h0m0-138h0m0 97h0m0-43h0m0 12h0m0 31h0m0-35h0m1-65h0m0-16h0m0 136h0m0-44h0m0-73h0m0 92h0m0 17h0m0-97h0m0 9h0m0 78h0m0-158h0m0 65h0m0 34h0m0 26h0m0 32h0m0-71h0m0 79h0m1-70h0m0 42h0m0-119h0m0 45h0m0-64h0m0 143h0m0-125h0m1-7h0m0 135h0m0-62h0m0 48h0m0-17h0m0 47h0m0 5h0m0-13h0m0-63h0m1-32h0m0 46h0m0-18h0m0 24h0m0-24h0m0 2h0m0-30h0m0 80h0m1-1h0m0-7h0m0 33h0m0-3h0m0-78h0m1 82h0m0-20h0m0-119h0m0 5h0m0 12h0m0 45h0m0 0h0m0 54h0m0 32h0m0-16h0m0-37h0m1 36h0m0-134h0m0 122h0m0 10h0m0-8h0m0-66h0m0 19h0m0 48h0m1-67h0m0 39h0m0 64h0m0-80h0m0 20h0m0-6h0m0-1h0m1 30h0m0-61h0m0 52h0m0-101h0m0 42h0m0 7h0m0 28h0m1-41h0m0-1h0m0-8h0m0 38h0m0-22h0m0 77h0m0-75h0m0 72h0m0-33h0m0 56h0m0-172h0m0 140h0m0-10h0m0-104h0m1-28h0m0-3h0m0 154h0m0-41h0m0-102h0m0 110h0m0-6h0m0-50h0m0 94h0m0-70h0m0-4h0m1 62h0m0 28h0m0-69h0m0 53h0m0-46h0m1-36h0m0 63h0m0-38h0m1 30h0m0 24h0m0-56h0m0 62h0m0-42h0m1 25h0m0-18h0m0 13h0m0-16h0m0 66h0m0 46h0m1-46h0m0-108h0m0-7h0m0 112h0m0-67h0m0 11h0m0-41h0m0-3h0m0 107h0m1-67h0m0 16h0m0-4h0m0-36h0m0 78h0m0-80h0m1 105h0m0-96h0m0 68h0m0-17h0m0-13h0m0-1h0m0 41h0m0-71h0m1 26h0m0-80h0m0 52h0m0 16h0m0 41h0m1-33h0m0-1h0m0 2h0m0 40h0m0 22h0m0-84h0m0 32h0m1 56h0m0 6h0m0-93h0m0 41h0m0 9h0m0-92h0m1 81h0m0 74h0m0-26h0m0-10h0m0 19h0m0-118h0m0 72h0m0-38h0m0 29h0m1-37h0m0 70h0m0-21h0m0-51h0m0-8h0m0 14h0m0-21h0m0 61h0m0 33h0m0-75h0m0 50h0m0-12h0m0-24h0m0 9h0m0-49h0m0 27h0m1 85h0m0-92h0m0 131h0m0-75h0m0-42h0m0 5h0m0 70h0m0-95h0m0 18h0m0-8h0m0 74h0m0-84h0m1 27h0m0 8h0m0 68h0m0-51h0m0 10h0m0 65h0m0-98h0m1 33h0m0-99h0m0 69h0m1 65h0m0-96h0m0 22h0m0 11h0m0-66h0m0 56h0m0-30h0m0 55h0m1 21h0m0-75h0m0 13h0m0 74h0m0-83h0m0 92h0m0 12h0m0-111h0m0 39h0m0-46h0m1 78h0m0-56h0m0 71h0m0 24h0m1-61h0m0 15h0m0-26h0m0 44h0m0-62h0m0 63h0m0-38h0m0 0h0m0-42h0m0 23h0m1-9h0m0 72h0m0-39h0m0 52h0m0-50h0m0-112h0m0 131h0m0 15h0m0-36h0m0 33h0m0-61h0m1-10h0m0 18h0m0-23h0m0 64h0m0-74h0m0 43h0m1 18h0m0 10h0m0-82h0m0 75h0m0-85h0m0 48h0m0 64h0m0-40h0m0 26h0m0-79h0m0-2h0m1-29h0m0 37h0m0 90h0m0-66h0m0 8h0m0 9h0m0 25h0m0-68h0m0 87h0m0-50h0m1 1h0m0 14h0m0 20h0m0 7h0m0-6h0m0-77h0m0 37h0m0 5h0m0-17h0m1 52h0m0-4h0m0-46h0m0-10h0m0 12h0m0-26h0m0 61h0m0-10h0m0-16h0m0-37h0m0 56h0m0-58h0m0 57h0m0-32h0m1 50h0m0 2h0m0 0h0m0 27h0m0-69h0m0-6h0m1-47h0m0 53h0m0 39h0m0-90h0m0-64h0m0 119h0m0-3h0m0-66h0m0 78h0m0-64h0m0-18h0m0 8h0m0-27h0m1 46h0m0 39h0m0-6h0m0-40h0m0 14h0m0 74h0m0-43h0m0 42h0m1-102h0m0-61h0m0 77h0m0 77h0m0 1h0m0-2h0m0 14h0m0-70h0m0 3h0m0-67h0m0 107h0m0-98h0m0 34h0m0-7h0m0-13h0m1 49h0m0 53h0m0-121h0m0 111h0m0-10h0m0-20h0m0-19h0m0-25h0m0 2h0m1 36h0m0 8h0m0 43h0m0-117h0m0 61h0m0-55h0m0 128h0m0-105h0m0 88h0m0-129h0m0 86h0m1-43h0m0 113h0m0-92h0m0-97h0m0 132h0m1 19h0m0-14h0m0-41h0m0 38h0m0-19h0m0-81h0m0 94h0m0-91h0m0-24h0m1 16h0m0 52h0m0 49h0m0-23h0m0-2h0m0-4h0m0-45h0m0 47h0m0-27h0m1-35h0m0 100h0m0 29h0m0-147h0m0 101h0m0-7h0m0-41h0m0-4h0m0 57h0m0 41h0m0-120h0m0 116h0m0-85h0m0 59h0m0-78h0m1-27h0m0-35h0m0 76h0m0 3h0m0-19h0m0-2h0m0-54h0m0 113h0m0 36h0m0-43h0m0-99h0m0 36h0m1 121h0m0-55h0m0 51h0m0-66h0m0 66h0m0-10h0m0-49h0m1 14h0m0 70h0m0-122h0m0 60h0m0-5h0m0 44h0m0-25h0m1-11h0m0-14h0m0 8h0m0-9h0m0-5h0m0 18h0m0 20h0m1-29h0m0-54h0m0 55h0m1 6h0m0 50h0m0-8h0m0 8h0m1-68h0m0-34h0m0 59h0m0 26h0m0-14h0m0-44h0m0 35h0m0 41h0m1-4h0m0-47h0m0-23h0m0 29h0m1 40h0m0-48h0m0 71h0m0-116h0m0 24h0m1 28h0m0-39h0m0-30h0m0 56h0m0-36h0m0 85h0m0-57h0m1 77h0m0-55h0m0-5h0m0 1h0m1-13h0m0 33h0m0 18h0m1-9h0m0 65h0m0-41h0m0-156h0m0 72h0m0-1h0m1 65h0m0 28h0m0-64h0m0 37h0m0 29h0m0-68h0m0-23h0m1-8h0m0 7h0m0 51h0m0 6h0m0-46h0m0-2h0m0 73h0m0-16h0m0 19h0m0-18h0m1-46h0m0 76h0m0-52h0m0-49h0m0 74h0m0-27h0m1-65h0m0 56h0m0 38h0m0-21h0m0-12h0m1-3h0m0 41h0m0-5h0m0-36h0m0-18h0m1 62h0m0-63h0m0 43h0m0 22h0m0-14h0m1-15h0m0 2h0m0-11h0m0-73h0m0 25h0m1 86h0m0-17h0m0 23h0m0-11h0m1-23h0m0-87h0m0 82h0m0 43h0m0-43h0m0-44h0m0 23h0m0-30h0m1 68h0m0 34h0m0-22h0m0-12h0m0-17h0m0 63h0m1-94h0m0 94h0m0-47h0m0 9h0m1-47h0m0 69h0m0 9h0m0-89h0m0 29h0m0 59h0m0-41h0m1-43h0m0 84h0m1-86h0m0 74h0m0 24h0m0-98h0m0 1h0m1 69h0m0-98h0m0-30h0m0 76h0m0 10h0m0 34h0m1-40h0m0 44h0m0-18h0m0 9h0m0-87h0m0 49h0m0 75h0m0-41h0m0-49h0m0-2h0m0 22h0m0-3h0m0 74h0m0-113h0m0 61h0m1 4h0m0-20h0m0 65h0m0-80h0m0 81h0m0-88h0m0 51h0m0-135h0m1 158h0m0-31h0m0-47h0m0-12h0m0 48h0m0-48h0m1 85h0m0-16h0m0-24h0m0-70h0m1 128h0m0-77h0m0 32h0m0 20h0m1-61h0m0-10h0m0 52h0m0-42h0m0-18h0m0 103h0m0-63h0m0 72h0m0-98h0m0 44h0m0-67h0m0 6h0m1 53h0m0 64h0m0-58h0m0-11h0m0 31h0m1 29h0m0-30h0m0 5h0m0 32h0m0-31h0m0-45h0m0-6h0m0 32h0m0 1h0m0 31h0m0-78h0m1 38h0m0 9h0m0-47h0m0 95h0m0-138h0m1 54h0m0 81h0m0-4h0m0-154h0m0 147h0m0-39h0m1-52h0m0 101h0m0-127h0m0 68h0m0-41h0m0 89h0m1-114h0m0 78h0m0-17h0m1 48h0m0-19h0m0-60h0m0-27h0m0 127h0m0-94h0m1 48h0m0-47h0m0-8h0m0-6h0m0 12h0m0 83h0m0-39h0m0-48h0m0-33h0m1 7h0m0 26h0m1 51h0m0-1h0m0 14h0m0 43h0m0-97h0m1 28h0m0 10h0m0-42h0m0 48h0m0-54h0m0 26h0m1-27h0m0 9h0m0-7h0m0 8h0m0 77h0m1-9h0m0-66h0m0-39h0m0 75h0m1-1h0m0 42h0m0-7h0m0-86h0m0 55h0m0 34h0m1-32h0m0-56h0m0-25h0m0 105h0m0-80h0m1 11h0m0 39h0m0-18h0m0-37h0m0 89h0m0-29h0m0 19h0m1-6h0m0-13h0m0-8h0m0 7h0m0 15h0m0-19h0m0 38h0m0-39h0m0-42h0m0 6h0m0 50h0m1-10h0m0-11h0m0-40h0m1-40h0m0 22h0m0 75h0m0-8h0m0-42h0m0 45h0m0-77h0m0 51h0m0-42h0m1 65h0m0-36h0m0 34h0m0-52h0m1 1h0m0 32h0m0-72h0m0 78h0m0-27h0m0 3h0m0 46h0m1-4h0m0-85h0m0 82h0m0-37h0m1-57h0m0 47h0m0 55h0m1-102h0m0 28h0m0 60h0m0-69h0m0 6h0m0 21h0m0-51h0m0 113h0m0-27h0m1-76h0m0 2h0m0-55h0m0 104h0m0-51h0m0 20h0m0 17h0m0-6h0m0-15h0m0-20h0m0 48h0m0-14h0m0-47h0m1 112h0m1-98h0m0 72h0m0-68h0m0 64h0m0-47h0m0-31h0m0 45h0m0 50h0m0-38h0m1-69h0m0 23h0m0 3h0m0-46h0m0 17h0m0 75h0m1 30h0m0-17h0m0-28h0m0 15h0m0 34h0m0-83h0m0 55h0m1 0h0m0-63h0m0 55h0m0-74h0m1 80h0m0-74h0m0 104h0m0-81h0m0 10h0m0 57h0m0-41h0m0 19h0m0 4h0m1-22h0m0-45h0m0 18h0m0 12h0m0-50h0m0 104h0m1 20h0m0-39h0m0-52h0m0 92h0m0-94h0m0 7h0m0 70h0m0-108h0m0 139h0m0-16h0m0-62h0m0 42h0m0-45h0m1 70h0m0-92h0m0 52h0m0-50h0m0-52h0m0 44h0m0 53h0m1-21h0m0 1h0m0 26h0m0 5h0m0 3h0m0 11h0m0 19h0m0-43h0m0-17h0m1 15h0m0 43h0m0-46h0m0 10h0m0-28h0m0 0h0m0 47h0m0-6h0m0-63h0m1 63h0m0-83h0m0 57h0m0-92h0m0 161h0m0-64h0m0-73h0m1 125h0m0-45h0m0-75h0m0 5h0m0 33h0m0 66h0m0-129h0m0 48h0m0 77h0m0-69h0m0 98h0m1-66h0m0-38h0m0 47h0m0 110h0m0-161h0m0 91h0m0 21h0m0-136h0m0 18h0m0 74h0m0 35h0m0-28h0m0 6h0m0 10h0m1 19h0m0-81h0m0 22h0m0 54h0m0-98h0m1 59h0m0 53h0m0-67h0m0 75h0m0-77h0m0 73h0m0-28h0m0-68h0m0 31h0m0 40h0m1 12h0m0-69h0m0-38h0m0 91h0m0 12h0m0 13h0m0-126h0m0 27h0m1 94h0m0-72h0m0 5h0m0-12h0m1-21h0m0 65h0m0-71h0m0 22h0m0 130h0m0-16h0m0-95h0m0 76h0m0-88h0m0-7h0m0 72h0m0 13h0m1-102h0m0 130h0m0-105h0m0-35h0m0 88h0m0-63h0m0 67h0m0 25h0m0-1h0m0-127h0m0 133h0m1-169h0m0 157h0m0-29h0m0-40h0m0-40h0m0 21h0m0 33h0m0 2h0m1 30h0m0-66h0m0 5h0m0 50h0m0-5h0m0 69h0m0-109h0m0 11h0m0 31h0m1-52h0m0 101h0m0 5h0m0 42h0m0-130h0m0 66h0m1-91h0m0-8h0m0 21h0m0 19h0m0 95h0m0-105h0m0-10h0m0 109h0m0-91h0m0 92h0m1-7h0m0-85h0m0 34h0m0 17h0m0-40h0m0-44h0m0 104h0m0-106h0m0 146h0m0-83h0m0-26h0m0 91h0m0-15h0m1-33h0m0 28h0m0-101h0m0 16h0m0 81h0m0 23h0m0-112h0m1 17h0m0 86h0m0 12h0m0-116h0m0 51h0m0 65h0m0-49h0m1-39h0m0-47h0m0 76h0m0 53h0m0-87h0m0 18h0m0-35h0m0 147h0m1-152h0m0 92h0m0 8h0m0-100h0m0 33h0m0-12h0m0 8h0m0-26h0m0 109h0m0-22h0m1-10h0m0-48h0m0 24h0m0-10h0m0-37h0m0 98h0m0-108h0m0 67h0m1-62h0m0 37h0m0 8h0m0-59h0m0 23h0m0 60h0m0-4h0m1-21h0m0 47h0m0-36h0m0 0h0m0-30h0m0 54h0m1 15h0m0-117h0m0 0h0m0 51h0m0-57h0m0 9h0m1-1h0m0 35h0m0 25h0m0-67h0m1 24h0m0-3h0m0-20h0m0 23h0m0-46h0m0 30h0m0 30h0m0-45h0m0 4h0m0-12h0m1 53h0m0 66h0m0-19h0m0 5h0m0 11h0m0-94h0m0 50h0m0-37h0m0-26h0m1 7h0m0 93h0m0-105h0m0 64h0m0-51h0m0-26h0m1 17h0m0 131h0m0-138h0m0 105h0m0-89h0m0-13h0m0 49h0m0 23h0m1-4h0m0-58h0m0 92h0m0-111h0m0 37h0m0 15h0m0-36h0m0-1h0m0 78h0m1-77h0m0 38h0m0-71h0m0 108h0m0-75h0m0 28h0m0-24h0m1 89h0m0-116h0m0 74h0m0 1h0m0-1h0m0-9h0m0-9h0m0-29h0m0-6h0m0 27h0m0-43h0m1-10h0m0 21h0m0 32h0m0 38h0m0-36h0m0 45h0m0-1h0m0-32h0m0 35h0m1 11h0m0-3h0m0-34h0m0-42h0m1 74h0m0-87h0m0 50h0m0 15h0m1-97h0m0-13h0m0 118h0m0-102h0m0 67h0m0 14h0m0-17h0m0-2h0m0-4h0m0 14h0m1 32h0m0 0h0m0-54h0m0 41h0m0-79h0m0 63h0m0-52h0m0-1h0m0 5h0m0 68h0m0 8h0m1-71h0m0 5h0m0-5h0m0 109h0m1-29h0m0-76h0m0 3h0m0 77h0m0-37h0m0 12h0m0-13h0m0 32h0m0-9h0m1 73h0m0-134h0m0-34h0m0 96h0m0-27h0m0 0h0m0-41h0m0 14h0m0 85h0m0-95h0m1 35h0m0 39h0m0-36h0m0-5h0m0-27h0m1 3h0m0 19h0m0 16h0m0-4h0m0 91h0m0-73h0m0-3h0m1-26h0m0 28h0m0 6h0m0 32h0m1-43h0m0-70h0m1 125h0m0-17h0m0-48h0m0-12h0m0-88h0m0 75h0m0 69h0m1-47h0m0 7h0m0-32h0m0 16h0m0-30h0m0 24h0m0 129h0m1-81h0m0-47h0m0-24h0m0 100h0m1-62h0m0 42h0m0-67h0m1 49h0m0-33h0m0 18h0m0 32h0m0-32h0m0-1h0m0 31h0m1 10h0m0-60h0m1-12h0m0-27h0m0 37h0m0 12h0m1 38h0m0 8h0m0-44h0m0 104h0m0-81h0m1-6h0m0 88h0m0-53h0m1-26h0m0 28h0m0-57h0m1-35h0m0 112h0m0-98h0m0 14h0m0 88h0m0-20h0m1 5h0m0-73h0m0 62h0m0-11h0m0 49h0m1-91h0m0 77h0m1-56h0m0 87h0m0-62h0m0-60h0m0 104h0m0-86h0m0 61h0m0 25h0m0-96h0m0 63h0m1 29h0m0 4h0m0-44h0m0 37h0m0-84h0m1 0h0m0 44h0m0 28h0m1-54h0m0-14h0m0 58h0m0 24h0m0-10h0m0-13h0m0-58h0m0 75h0m0-3h0m1-58h0m0-22h0m0 21h0m0 7h0m0 29h0m0-72h0m1 28h0m0 76h0m0-79h0m0-3h0m0 40h0m0 30h0m0-52h0m0 42h0m1-25h0m0-44h0m0 59h0m0 4h0m0-8h0m0-50h0m0-14h0m0 73h0m0 31h0m0-21h0m0-24h0m0-76h0m1 96h0m0-50h0m0-16h0m0 39h0m0-4h0m1-16h0m0-19h0m0 22h0m0 20h0m0-39h0m1 15h0m0 39h0m0-29h0m0-48h0m0 89h0m0-21h0m0 9h0m1 8h0m0-70h0m0 32h0m0-38h0m0-16h0m0 83h0m0-49h0m0 16h0m0-40h0m0 10h0m0 9h0m1 56h0m0-52h0m0 3h0m0 20h0m0-11h0m0 14h0m0 31h0m1-46h0m0-39h0m0 49h0m0-117h0m0 79h0m0 21h0m0-39h0m1 84h0m0-78h0m0 56h0m0-36h0m0 2h0m0-12h0m0 10h0m1-16h0m0 36h0m0 45h0m0-71h0m0 29h0m0 39h0m0-3h0m0 12h0m1-60h0m0-4h0m0 34h0m0 18h0m0-84h0m0 33h0m1 59h0m0-32h0m0-38h0m0-39h0m0 74h0m0-62h0m0 88h0m0-48h0m0-48h0m0 76h0m0-139h0m0 112h0m0-10h0m0-64h0m0 69h0m1-10h0m0-76h0m0 107h0m0 12h0m0-140h0m0 69h0m0-42h0m0 101h0m0-134h0m0 100h0m0 58h0m0 6h0m1-75h0m0-76h0m0 110h0m0 41h0m0-92h0m0 0h0m0-24h0m0 42h0m0 15h0m0 64h0m0-29h0m1 3h0m0-26h0m0 15h0m0-65h0m0-41h0m0 57h0m0-79h0m0 78h0m0 89h0m0-8h0m0-123h0m1 101h0m0 14h0m0-89h0m0 87h0m0-66h0m0 32h0m0 44h0m0-91h0m0 49h0m1 33h0m0-27h0m0 1h0m0 24h0m0-74h0m0 38h0m0 4h0m0 15h0m0-65h0m0 82h0m0-116h0m0-4h0m1 81h0m0 24h0m0-67h0m1 70h0m0-22h0m0-81h0m0 75h0m0-56h0m0 114h0m0-83h0m0 60h0m0-74h0m0 62h0m0-99h0m0 75h0m0-28h0m0-69h0m1 108h0m0 9h0m0-28h0m0 47h0m0-83h0m1 34h0m0-28h0m0 47h0m0-45h0m0 88h0m0-40h0m0-6h0m0-105h0m0 137h0m0-104h0m0 68h0m0-87h0m0 166h0m0-161h0m0 94h0m0-113h0m0 131h0m0-59h0m0 17h0m0-27h0m0 71h0m0-88h0m1 80h0m0 2h0m0-4h0m0-17h0m0 18h0m0 33h0m1-65h0m0 7h0m0 16h0m0 36h0m1-47h0m0-35h0m0 41h0m0 34h0m0 7h0m0-44h0m0-3h0m0-10h0m1 64h0m0-44h0m0 51h0m0-38h0m0 2h0m0-18h0m1-17h0m0 5h0m0 62h0m0-69h0m1 73h0m0-8h0m0-18h0m0 0h0m0-10h0m0 23h0m0-53h0m0 59h0m0-83h0m0 42h0m1 20h0m0-46h0m0 8h0m0 73h0m0-74h0m0 34h0m0-57h0m1 24h0m0 76h0m0-73h0m0-8h0m0 0h0m0-17h0m0 57h0m0-30h0m0 63h0m0-64h0m0-4h0m1 57h0m0-52h0m0 49h0m0-1h0m0-85h0m0 99h0m0-74h0m1 1h0m0 39h0m0-49h0m0 18h0m0 74h0m0-110h0m0-6h0m0 6h0m1 102h0m0-103h0m0 83h0m0-53h0m0 73h0m0 11h0m0 3h0m0-91h0m1 13h0m0 77h0m0-23h0m0-19h0m0 45h0m0-80h0m0 19h0m1 50h0m0-82h0m0 46h0m0-103h0m0 136h0m0 1h0m0-63h0m0 8h0m0 107h0m0-221h0m1 84h0m0-76h0m0 86h0m0-70h0m0 29h0m0 128h0m1-180h0m0 61h0m0 103h0m0-65h0m0-70h0m0 121h0m1-60h0m0 10h0m0-80h0m0 16h0m0 24h0m0 3h0m0 160h0m0-36h0m0-30h0m0-25h0m1-73h0m0 1h0m0 136h0m0-8h0m0-66h0m0-65h0m0 64h0m0-29h0m0 0h0m0 86h0m1-102h0m0-7h0m0 108h0m0 18h0m0 8h0m0-51h0m0 50h0m0-162h0m0 127h0m0-105h0m1 30h0m0 2h0m0-93h0m0 61h0m0 13h0m0 20h0m0-92h0m0 79h0m1 73h0m0 30h0m0-29h0m0 44h0m0-46h0m1 1h0m0 29h0m0-83h0m0-1h0m0 4h0m0 101h0m1-2h0m0-112h0m0 99h0m0-94h0m0 55h0m0 4h0m1 19h0m0-60h0m0 68h0m0 3h0m0-37h0m0-30h0m0 76h0m0-88h0m1 42h0m0-83h0m0 33h0m0-7h0m0 29h0m0 76h0m0-97h0m0 2h0m0 81h0m0-144h0m1 153h0m0-103h0m0 59h0m0 20h0m0 44h0m0-96h0m0 18h0m0-46h0m0 8h0m0 9h0m1-32h0m0 79h0m0 18h0m0-14h0m0-57h0m0-8h0m0 32h0m0-33h0m0 31h0m0-90h0m1 94h0m0-32h0m0 44h0m0-27h0m1 79h0m0 22h0m0-59h0m0-70h0m0 124h0m0 18h0m1-115h0m0 93h0m0-131h0m0 139h0m0-3h0m1-78h0m0-17h0m0 40h0m0 57h0m0-67h0m1 33h0m0-96h0m0 126h0m0-81h0m0-17h0m0 85h0m1-28h0m0-13h0m0-4h0m0 9h0m0 22h0m1-19h0m0 36h0m0 13h0m0-166h0m0 169h0m0-156h0m0 89h0m0-25h0m1 38h0m0-43h0m0-53h0m0 77h0m0 23h0m0-60h0m0-16h0m0 120h0m1-19h0m0-5h0m0-132h0m0 145h0m0-97h0m0 0h0m0 115h0m1-145h0m0 121h0m0-22h0m0 23h0m0-20h0m0-16h0m0-71h0m0 40h0m0 76h0m0-87h0m1 8h0m0 56h0m0-67h0m0 1h0m0-47h0m0 39h0m0 103h0m0-40h0m0-69h0m0 106h0m0 1h0m0-35h0m1-159h0m0 182h0m0-25h0m0-36h0m0-19h0m0-46h0m1 117h0m0 39h0m0-36h0m0-77h0m1-82h0m0 128h0m0-2h0m0-23h0m0 66h0m1-41h0m0-1h0m0 5h0m0-67h0m0-2h0m1 82h0m0 16h0m0-65h0m1-16h0m0-6h0m0 66h0m1 5h0m0 2h0m0 3h0m0-46h0m0 22h0m0 20h0m0-18h0m0-8h0m0-7h0m0 11h0m1 13h0m0 25h0m0-95h0m0-64h0m0 157h0m0-34h0m0 27h0m1 12h0m0-88h0m0 18h0m0 66h0m0-37h0m0 18h0m0-66h0m0 87h0m0-6h0m1-68h0m0-11h0m0-17h0m0 55h0m1-35h0m0-6h0m0 58h0m0 6h0m0-40h0m0 55h0m0-68h0m1-12h0m0 80h0m0-69h0m0 8h0m0-32h0m0 23h0m0 70h0m1-52h0m0-52h0m0 17h0m0 25h0m0-27h0m0 50h0m1-17h0m0 37h0m0-59h0m0 6h0m0-71h0m0 98h0m1 36h0m0-71h0m0 32h0m0 12h0m0 19h0m0-70h0m0 66h0m0-12h0m1-28h0m0-10h0m0-3h0m0 63h0m1-5h0m0-21h0m0-26h0m0 0h0m0-33h0m0 40h0m1 6h0m0-2h0m0-9h0m0 26h0m0-68h0m0-1h0m1 57h0m0-2h0m0-22h0m0-3h0m0-41h0m0 31h0m1-23h0m0 6h0m0-11h0m0 86h0m0-49h0m0 6h0m0 5h0m0 29h0m0-52h0m1-18h0m0 24h0m0 18h0m0-38h0m0-15h0m0 27h0m1-3h0m0 30h0m0-21h0m0 50h0m0 5h0m0-41h0m0-49h0m0 95h0m0-88h0m0 67h0m0-74h0m0 44h0m1-9h0m0 19h0m0-41h0m0 34h0m1 15h0m0-110h0m0 90h0m0-103h0m0 11h0m0 134h0m0-1h0m0-28h0m1-38h0m0 43h0m0-27h0m0-77h0m0 30h0m0 39h0m0-54h0m0 93h0m0-27h0m0-84h0m0 71h0m1-15h0m0 42h0m0-73h0m0 72h0m0 6h0m0 1h0m0-54h0m0 0h0m0 66h0m0-31h0m0-9h0m0 13h0m1 6h0m0-71h0m0 61h0m0-9h0m0 37h0m0-53h0m0 74h0m0-88h0m0 82h0m0 12h0m0-60h0m0 26h0m1-24h0m0-1h0m0 22h0m0-29h0m0-66h0m0 79h0m0 46h0m0 3h0m0-100h0m0 87h0m1-21h0m0-113h0m0 97h0m0 8h0m0-20h0m0 9h0m0 43h0m0-80h0m0 73h0m0-11h0m0-12h0m0-96h0m0 62h0m1-77h0m0 139h0m0-91h0m0 92h0m0-4h0m0-5h0m0-15h0m0-76h0m0 22h0m0 0h0m0 11h0m0 117h0m0-160h0m1 27h0m0 59h0m0 0h0m0-24h0m0 100h0m0-136h0m0-11h0m0 53h0m0-37h0m0 35h0m0 61h0m0-94h0m0-19h0m1 159h0m0-30h0m0-137h0m0 98h0m0-134h0m0 109h0m0-9h0m0 71h0m0-18h0m0-138h0m0 99h0m0-37h0m0 91h0m0-17h0m0-128h0m1 3h0m0 22h0m0 104h0m0 43h0m0-179h0m1 83h0m0-33h0m0 40h0m0 0h0m0-119h0m0 76h0m0 2h0m0 14h0m0-15h0m0 37h0m0-40h0m0 2h0m0-69h0m0 167h0m0-69h0m1 90h0m0-67h0m0-31h0m0 82h0m0 32h0m0-98h0m0 36h0m1-45h0m0 13h0m0 65h0m0 1h0m0-109h0m0 20h0m0-27h0m1 115h0m0 14h0m0-69h0m0 51h0m0-7h0m0 12h0m0-57h0m0 13h0m0 42h0m1 26h0m0-108h0m0 32h0m1-44h0m0 78h0m0 4h0m0-6h0m0-50h0m0 15h0m0 36h0m1-47h0m0 8h0m0 58h0m0-42h0m0 6h0m0-50h0m0 68h0m0 20h0m0 33h0m0-125h0m1 18h0m0 103h0m0-90h0m0-27h0m0-28h0m0 102h0m0-55h0m1 22h0m0 34h0m0-59h0m1 17h0m0 5h0" stroke="#000" stroke-width="7.2" stroke-linecap="round" fill="none"/>
<rect x="162.3" y="498.9" width="1141.34" height="49" fill="#ffa500" fill-opacity="0.1"/>
<rect x="105.5" y="498.9" width="1255.5" height="49" fill="#ff0000" fill-opacity="0.114"/>
<path transform="scale(0.5)" d="M366 900h0m1 7h0m-6 8h0m36-4h0m46-24h0m6 20h0m64 0h0m2 8h0m8-2h0m72-36h0m0 32h0m24-5h0m30-19h0m2 0h0m-2 22h0m0 4h0m48 2h0m18-12h0m0 8h0m2 4h0m48-14h0m0 10h0m36-22h0m0 16h0m68-4h0m2 10h0m-2 6h0m34-24h0m48-10h0m2 24h0m18 8h0m28-2h0m50-2h0m24-16h0m-2 20h0m48-14h0m36 14h0m100-16h0m0 6h0m0 9h0m72-67h0m0 44h0m30 22h0m46-10h0m4-2h0m0 8h0m20-2h0m52 4h0m28-26h0m2 26h0m228-10h0m24 6h0m-4 8h0m3-5h0m67 5h0m6-2h0m82-2h0m14 6h0m6 0h0m82-2h0m70-40h0m30 24h0m-2 10h0m0 8h0m54 0h0m20-28h0m0 10h0m32 18h0m46-18h0m4 16h0m20 2h0m50-14h0m134-12h0m-1786 300h0m16 51h0m16 2h0m-72 43h0m-26 25h0m570-123h0m56-4h0m86 6h0m107 53h0m105-59h0m52 74h0m166 5h0m382-39h0m4-5h0m244 57h0m157-78h0m11-12h0" stroke="#ffa500" stroke-width="7.2" stroke-linecap="round" fill="none"/>
<path d="M181.35 660.8h5.9l-2.95 5.1zM183.35 660.8h5.9l-2.95 5.1zM229.35 660.8h5.9l-2.95 5.1zM261.35 660.8h5.9l-2.95 5.1zM304.35 660.8h5.9l-2.95 5.1zM313.35 660.8h5.9l-2.95 5.1zM411.35 660.8h5.9l-2.95 5.1zM522.35 660.8h5.9l-2.95 5.1zM644.35 660.8h5.9l-2.95 5.1zM840.35 660.8h5.9l-2.95 5.1zM847.35 660.8h5.9l-2.95 5.1zM910.35 660.8h5.9l-2.95 5.1zM1017.35 660.8h5.9l-2.95 5.1zM1128.35 660.8h5.9l-2.95 5.1zM1208.35 660.8h5.9l-2.95 5.1zM1225.35 660.8h5.9l-2.95 5.1zM1229.35 660.8h5.9l-2.95 5.1z" fill="#ffa500"/>
<line x1="162.3" y1="524.3" x2="1303.64" y2="524.3" stroke="#ffa500" stroke-width="2.08"/>
<line x1="105.5" y1="523" x2="1361" y2="523" stroke="#ff0000" stroke-width="2.08"/>
<line x1="162.3" y1="665.9" x2="162.3" y2="380.5" stroke="#800080" stroke-width="2.08" stroke-dasharray="2.08 3.44"/>
<line x1="1302.77" y1="665.9" x2="1302.77" y2="380.5" stroke="#800080" stroke-width="2.08" stroke-dasharray="2.08 3.44"/>
</g>
<text x="711.38" y="656.9" font-size="14.3" textLength="44" lengthAdjust="spacingAndGlyphs">15132</text>
<rect x="105.5" y="380.5" width="1380" height="286" fill="none" stroke="#000" stroke-width="1.11"/>
<line x1="162.5" y1="666.5" x2="162.5" y2="671.36" stroke="#000" stroke-width="1.11"/>
<text x="162.5" y="687" font-size="14.3" text-anchor="middle" textLength="8.75" lengthAdjust="spacingAndGlyphs">0</text>
<line x1="345.5" y1="666.5" x2="345.5" y2="671.36" stroke="#000" stroke-width="1.11"/>
<text x="345.5" y="687" font-size="14.3" text-anchor="middle" textLength="35" lengthAdjust="spacingAndGlyphs">2500</text>
<line x1="528.5" y1="666.5" x2="528.5" y2="671.36" stroke="#000" stroke-width="1.11"/>
<text x="528.5" y="687" font-size="14.3" text-anchor="middle" textLength="35" lengthAdjust="spacingAndGlyphs">5000</text>
<line x1="711.5" y1="666.5" x2="711.5" y2="671.36" stroke="#000" stroke-width="1.11"/>
<text x="711.5" y="687" font-size="14.3" text-anchor="middle" textLength="35" lengthAdjust="spacingAndGlyphs">7500</text>
<line x1="894.5" y1="666.5" x2="894.5" y2="671.36" stroke="#000" stroke-width="1.11"/>
<text x="894.5" y="687" font-size="14.3" text-anchor="middle" textLength="43.88" lengthAdjust="spacingAndGlyphs">10000</text>
<line x1="1077.5" y1="666.5" x2="1077.5" y2="671.36" stroke="#000" stroke-width="1.11"/>
<text x="1077.5" y="687" font-size="14.3" text-anchor="middle" textLength="43.88" lengthAdjust="spacingAndGlyphs">12500</text>
<line x1="1260.5" y1="666.5" x2="1260.5" y2="671.36" stroke="#000" stroke-width="1.11"/>
<text x="1260.5" y="687" font-size="14.3" text-anchor="middle" textLength="43.88" lengthAdjust="spacingAndGlyphs">15000</text>
<line x1="1443.5" y1="666.5" x2="1443.5" y2="671.36" stroke="#000" stroke-width="1.11"/>
<text x="1443.5" y="687" font-size="14.3" text-anchor="middle" textLength="43.88" lengthAdjust="spacingAndGlyphs">17500</text>
<line x1="100.64" y1="388.5" x2="105.5" y2="388.5" stroke="#000" stroke-width="1.11"/>
<text x="95" y="394" font-size="14.3" text-anchor="end" textLength="30.75" lengthAdjust="spacingAndGlyphs">9.24</text>
<line x1="100.64" y1="428.5" x2="105.5" y2="428.5" stroke="#000" stroke-width="1.11"/>
<text x="95" y="433" font-size="14.3" text-anchor="end" textLength="30.75" lengthAdjust="spacingAndGlyphs">9.22</text>
<line x1="100.64" y1="467.5" x2="105.5" y2="467.5" stroke="#000" stroke-width="1.11"/>
<text x="95" y="472" font-size="14.3" text-anchor="end" textLength="30.75" lengthAdjust="spacingAndGlyphs">9.20</text>
<line x1="100.64" y1="506.5" x2="105.5" y2="506.5" stroke="#000" stroke-width="1.11"/>
<text x="95" y="511" font-size="14.3" text-anchor="end" textLength="31" lengthAdjust="spacingAndGlyphs">9.18</text>
<line x1="100.64" y1="545.5" x2="105.5" y2="545.5" stroke="#000" stroke-width="1.11"/>
<text x="95" y="551" font-size="14.3" text-anchor="end" textLength="31" lengthAdjust="spacingAndGlyphs">9.16</text>
<line x1="100.64" y1="584.5" x2="105.5" y2="584.5" stroke="#000" stroke-width="1.11"/>
<text x="95" y="590" font-size="14.3" text-anchor="end" textLength="30.88" lengthAdjust="spacingAndGlyphs">9.14</text>
<line x1="100.64" y1="623.5" x2="105.5" y2="623.5" stroke="#000" stroke-width="1.11"/>
<text x="95" y="629" font-size="14.3" text-anchor="end" textLength="30.88" lengthAdjust="spacingAndGlyphs">9.12</text>
<line x1="100.64" y1="663.5" x2="105.5" y2="663.5" stroke="#000" stroke-width="1.11"/>
<text x="95" y="668" font-size="14.3" text-anchor="end" textLength="30.88" lengthAdjust="spacingAndGlyphs">9.10</text>
<text x="706.77" y="372" font-size="17.1" textLength="87.97" lengthAdjust="spacingAndGlyphs" class="t">Magnitude</text>
<text x="800.03" y="372" font-size="17.1" textLength="82" lengthAdjust="spacingAndGlyphs" class="t">Estimates</text>
<rect x="1365.4" y="387.5" width="112.9" height="47.8" rx="2.8" fill="#fff" fill-opacity="0.8" stroke="#cccccc" stroke-width="1.11"/>
<line x1="1369.1" y1="399.4" x2="1399.9" y2="399.4" stroke="#ffa500" stroke-width="2.9"/>
<line x1="1369.1" y1="422" x2="1399" y2="422" stroke="#ff0000" stroke-width="2.08"/>
<text x="1410" y="403.8" font-size="14.3" textLength="31" lengthAdjust="spacingAndGlyphs">mag</text>
<text x="1440.4" y="405.7" font-size="10" textLength="31" lengthAdjust="spacingAndGlyphs" font-style="italic">OBSID</text>
<text x="1410" y="426.7" font-size="14.3" textLength="31" lengthAdjust="spacingAndGlyphs">mag</text>
<rect x="1348.5" y="613.3" width="130" height="45.9" rx="2.8" fill="#fff" fill-opacity="0.8" stroke="#cccccc" stroke-width="1.11"/>
<path transform="scale(0.5)" d="M2735 1253h0" stroke="#ffa500" stroke-width="7.2" stroke-linecap="round" fill="none"/>
<path transform="scale(0.5)" d="M2735 1295h0" stroke="#000" stroke-width="7.2" stroke-linecap="round" fill="none"/>
<text x="1392.4" y="629.8" font-size="14.3" textLength="80.12" lengthAdjust="spacingAndGlyphs">Highlighted</text>
<text x="1392.4" y="650.8" font-size="14.3" textLength="19.88" lengthAdjust="spacingAndGlyphs">OK</text>
<line x1="105.5" y1="758.5" x2="1485.5" y2="758.5" stroke="#b0b0b0" stroke-width="1.11" stroke-dasharray="1.11 1.83"/>
<line x1="105.5" y1="791.5" x2="1485.5" y2="791.5" stroke="#b0b0b0" stroke-width="1.11" stroke-dasharray="1.11 1.83"/>
<line x1="105.5" y1="823.5" x2="1485.5" y2="823.5" stroke="#b0b0b0" stroke-width="1.11" stroke-dasharray="1.11 1.83"/>
<line x1="105.5" y1="856.5" x2="1485.5" y2="856.5" stroke="#b0b0b0" stroke-width="1.11" stroke-dasharray="1.11 1.83"/>
<line x1="105.5" y1="889.5" x2="1485.5" y2="889.5" stroke="#b0b0b0" stroke-width="1.11" stroke-dasharray="1.11 1.83"/>
<line x1="105.5" y1="921.5" x2="1485.5" y2="921.5" stroke="#b0b0b0" stroke-width="1.11" stroke-dasharray="1.11 1.83"/>
<line x1="105.5" y1="1009.5" x2="1485.5" y2="1009.5" stroke="#b0b0b0" stroke-width="1.11" stroke-dasharray="1.11 1.83"/>
<line x1="105.5" y1="983.5" x2="1485.5" y2="983.5" stroke="#b0b0b0" stroke-width="1.11" stroke-dasharray="1.11 1.83"/>
<line x1="105.5" y1="957.5" x2="1485.5" y2="957.5" stroke="#b0b0b0" stroke-width="1.11" stroke-dasharray="1.11 1.83"/>
<g clip-path="url(#c3)">
<path d="M760.3 790.35a1.15 1.15 0 1 0 0.01 0zM873 790.35a1.15 1.15 0 1 0 0.01 0zM924 790.35a1.15 1.15 0 1 0 0.01 0zM925.7 790.35a1.15 1.15 0 1 0 0.01 0zM948.3 790.35a1.15 1.15 0 1 0 0.01 0zM999 790.35a1.15 1.15 0 1 0 0.01 0zM1002 790.35a1.15 1.15 0 1 0 0.01 0zM1053.7 790.35a1.15 1.15 0 1 0 0.01 0zM1105 790.35a1.15 1.15 0 1 0 0.01 0zM1127.7 790.35a1.15 1.15 0 1 0 0.01 0zM1177.7 790.35a1.15 1.15 0 1 0 0.01 0zM1179.3 790.35a1.15 1.15 0 1 0 0.01 0z" fill="#777" stroke="#000" stroke-width="0.9"/>
<path d="M173.3 855.35a1.15 1.15 0 1 0 0.01 0zM184.3 855.35a1.15 1.15 0 1 0 0.01 0zM186.3 855.35a1.15 1.15 0 1 0 0.01 0zM232.3 855.35a1.15 1.15 0 1 0 0.01 0zM264.3 855.35a1.15 1.15 0 1 0 0.01 0zM283.3 855.35a1.15 1.15 0 1 0 0.01 0zM307.3 855.35a1.15 1.15 0 1 0 0.01 0zM309.3 855.35a1.15 1.15 0 1 0 0.01 0zM316.3 855.35a1.15 1.15 0 1 0 0.01 0zM324.3 855.35a1.15 1.15 0 1 0 0.01 0zM414.3 855.35a1.15 1.15 0 1 0 0.01 0zM426 855.35a1.15 1.15 0 1 0 0.01 0zM427.7 855.35a1.15 1.15 0 1 0 0.01 0zM438.3 855.35a1.15 1.15 0 1 0 0.01 0zM440 855.35a1.15 1.15 0 1 0 0.01 0zM479 855.35a1.15 1.15 0 1 0 0.01 0zM525.3 855.35a1.15 1.15 0 1 0 0.01 0zM586 855.35a1.15 1.15 0 1 0 0.01 0zM605.3 855.35a1.15 1.15 0 1 0 0.01 0zM606.7 855.35a1.15 1.15 0 1 0 0.01 0zM647.3 855.35a1.15 1.15 0 1 0 0.01 0zM656.7 855.35a1.15 1.15 0 1 0 0.01 0zM658.3 855.35a1.15 1.15 0 1 0 0.01 0zM711 855.35a1.15 1.15 0 1 0 0.01 0zM835 855.35a1.15 1.15 0 1 0 0.01 0zM837.3 855.35a1.15 1.15 0 1 0 0.01 0zM843.3 855.35a1.15 1.15 0 1 0 0.01 0zM850.3 855.35a1.15 1.15 0 1 0 0.01 0zM883.3 855.35a1.15 1.15 0 1 0 0.01 0zM913.3 855.35a1.15 1.15 0 1 0 0.01 0zM1020.3 855.35a1.15 1.15 0 1 0 0.01 0zM1108.3 855.35a1.15 1.15 0 1 0 0.01 0zM1211.3 855.35a1.15 1.15 0 1 0 0.01 0zM1228.3 855.35a1.15 1.15 0 1 0 0.01 0zM1232.3 855.35a1.15 1.15 0 1 0 0.01 0z" fill="#777" stroke="#000" stroke-width="0.9"/>
<path d="M173.3 888.35a1.15 1.15 0 1 0 0.01 0zM184.3 888.35a1.15 1.15 0 1 0 0.01 0zM186.3 888.35a1.15 1.15 0 1 0 0.01 0zM232.3 888.35a1.15 1.15 0 1 0 0.01 0zM264.3 888.35a1.15 1.15 0 1 0 0.01 0zM283.3 888.35a1.15 1.15 0 1 0 0.01 0zM307.3 888.35a1.15 1.15 0 1 0 0.01 0zM309.3 888.35a1.15 1.15 0 1 0 0.01 0zM316.3 888.35a1.15 1.15 0 1 0 0.01 0zM324.3 888.35a1.15 1.15 0 1 0 0.01 0zM414.3 888.35a1.15 1.15 0 1 0 0.01 0zM426 888.35a1.15 1.15 0 1 0 0.01 0zM427.7 888.35a1.15 1.15 0 1 0 0.01 0zM438.3 888.35a1.15 1.15 0 1 0 0.01 0zM440 888.35a1.15 1.15 0 1 0 0.01 0zM479 888.35a1.15 1.15 0 1 0 0.01 0zM525.3 888.35a1.15 1.15 0 1 0 0.01 0zM586 888.35a1.15 1.15 0 1 0 0.01 0zM605.3 888.35a1.15 1.15 0 1 0 0.01 0zM606.7 888.35a1.15 1.15 0 1 0 0.01 0zM647.3 888.35a1.15 1.15 0 1 0 0.01 0zM656.7 888.35a1.15 1.15 0 1 0 0.01 0zM658.3 888.35a1.15 1.15 0 1 0 0.01 0zM711 888.35a1.15 1.15 0 1 0 0.01 0zM760.3 888.35a1.15 1.15 0 1 0 0.01 0zM835 888.35a1.15 1.15 0 1 0 0.01 0zM837.3 888.35a1.15 1.15 0 1 0 0.01 0zM843.3 888.35a1.15 1.15 0 1 0 0.01 0zM850.3 888.35a1.15 1.15 0 1 0 0.01 0zM883.3 888.35a1.15 1.15 0 1 0 0.01 0zM913.3 888.35a1.15 1.15 0 1 0 0.01 0zM1020.3 888.35a1.15 1.15 0 1 0 0.01 0zM1108.3 888.35a1.15 1.15 0 1 0 0.01 0zM1211.3 888.35a1.15 1.15 0 1 0 0.01 0zM1228.3 888.35a1.15 1.15 0 1 0 0.01 0zM1232.3 888.35a1.15 1.15 0 1 0 0.01 0z" fill="#777" stroke="#000" stroke-width="0.9"/>
</g>
<g clip-path="url(#c4)">
<polygon points="162,1004.84 163,1005.41 164,1004.66 165,1005.93 166,1005.05 167,1005.83 168,1005.74 169,1005.78 170,1003.73 171,1005.03 172,1005.68 173,1005.81 174,1006.01 175,1005.05 176,1006.02 177,1006.04 178,1004.91 179,1005.94 180,1005.87 181,1005.29 182,1005.95 183,1006.12 184,1004.18 185,1005.78 186,1005.61 187,1005.91 188,1004.71 189,1003.87 190,1004.86 191,1005.8 192,1005.11 193,1005.41 194,1004.94 195,1006.05 196,1005.51 197,1004.61 198,1004.85 199,1005.23 200,1006 201,1006.02 202,1005.98 203,1004.73 204,1005.47 205,1004.92 206,1005.89 207,1004.66 208,1005.51 209,1005.58 210,1005.96 211,1005.06 212,1005.28 213,1005.97 214,1005.94 215,1005.68 216,1005.36 217,1006 218,1005.25 219,1005.75 220,1005.29 221,1004.79 222,1004.7 223,1005.58 224,1004.88 225,1004.76 226,1005.61 227,1004.99 228,1005.26 229,1006.12 230,1003.52 231,1004.98 232,1004.62 233,1004.85 234,1005.68 235,1004.87 236,1005.44 237,1005.61 238,1003.81 239,1005.47 240,1005.95 241,1005.39 242,1004.65 243,1005.1 244,1005.32 245,1006.01 246,1004.41 247,1004.93 248,1005.3 249,1005.35 250,1004.91 251,1004.33 252,1005.67 253,1006.14 254,1006.08 255,1005.02 256,1005.44 257,1006.06 258,1005.54 259,1006.2 260,1004.88 261,1005.03 262,1006 263,1005.05 264,1006.06 265,1005.16 266,1006.1 267,1004.99 268,1005.77 269,1005.79 270,1004.84 271,1004.78 272,1004.83 273,1005.25 274,1005.49 275,1005.69 276,1005.6 277,1005.19 278,1005.51 279,1004.91 280,1004.63 281,1005.05 282,1005.27 283,1004.76 284,1005.35 285,1004.6 286,1004.87 287,1006.19 288,1005.08 289,1006.02 290,1005.02 291,1005.65 292,1005.38 293,1004.69 294,1005.41 295,1004.8 296,1004.79 297,1005.46 298,1005.65 299,1006.11 300,1005.1 301,1006.07 302,1005.81 303,1004.68 304,1005.25 305,1005.42 306,1006.18 307,1004.77 308,1005.4 309,1005.62 310,1006.02 311,1004.91 312,1005.18 313,1005.44 314,1004.05 315,1004.66 316,1005.72 317,1004.64 318,1005.55 319,1005.15 320,1005.28 321,1005.77 322,1005.57 323,1005.11 324,1005.39 325,1005.22 326,1006.16 327,1005.93 328,1003.68 329,1004.85 330,1004.7 331,1004.92 332,1005.39 333,1005.63 334,1004.83 335,1005.6 336,1004.15 337,1005.03 338,1005.04 339,1005.43 340,1005.36 341,1004.83 342,1005.64 343,1004.25 344,1005.73 345,1005.79 346,1004.65 347,1005.91 348,1005.52 349,1006.16 350,1005.67 351,1004.76 352,1005.75 353,1004.77 354,1004.76 355,1005.9 356,1005.53 357,1005.54 358,1004.71 359,1005.06 360,1005.49 361,1005.84 362,1005.14 363,1006.09 364,1004.77 365,1004.94 366,1005.04 367,1006.13 368,1005.17 369,1006.18 370,1005.32 371,1005.81 372,1004.67 373,1005.1 374,1005.61 375,1005.17 376,1005.98 377,1005.04 378,1004.95 379,1004.47 380,1004.49 381,1005.81 382,1004.9 383,1005.93 384,1005.15 385,1005 386,1004.29 387,1005.29 388,1005.01 389,1006.11 390,1005.17 391,1005.58 392,1004.72 393,1005.99 394,1005.47 395,1005.52 396,1005.54 397,1004.31 398,1005.53 399,1005.35 400,1004.8 401,1005.51 402,1005.87 403,1005.36 404,1005.11 405,1006.13 406,1004.74 407,1005.9 408,1003.29 409,1004.98 410,1006.2 411,1005.1 412,1005.12 413,1004.26 414,1006.13 415,1004.73 416,1005.74 417,1004.6 418,1005.29 419,1005.57 420,1005.35 421,1005.36 422,1004.62 423,1004.9 424,1003.71 425,1006.14 426,1004.68 427,1004.72 428,1003.88 429,1005.03 430,1005.62 431,1006.14 432,1004.61 433,1005.87 434,1005.41 435,1005.33 436,1005.44 437,1005.76 438,1005.64 439,1004.98 440,1004.97 441,1005.92 442,1005.78 443,1005.27 444,1004.86 445,1005.36 446,1005.34 447,1004.82 448,1005.92 449,1005.94 450,1004.93 451,1004.64 452,1005.79 453,1005.21 454,1005.7 455,1003.17 456,1004.92 457,1004.22 458,1005.28 459,1005.69 460,1005.26 461,1004.63 462,1005.41 463,1006.09 464,1005.78 465,1005 466,1004.8 467,1005.96 468,1004.65 469,1005.88 470,1004.67 471,1005.28 472,1005.77 473,1006.14 474,1005.13 475,1005.38 476,1005.53 477,1004.69 478,1006.17 479,1005.88 480,1005.41 481,1005.53 482,1005.17 483,1004.65 484,1004.87 485,1005.84 486,1006.16 487,1004.61 488,1005.19 489,1005.06 490,1005.72 491,1005.54 492,1005.36 493,1005.41 494,1005.32 495,1005.62 496,1004.65 497,1006.12 498,1005.55 499,1006.1 500,1005.72 501,1004.88 502,1006.16 503,1004.53 504,1004.91 505,1005.67 506,1006.14 507,1004.76 508,1004.62 509,1005.57 510,1005.49 511,1004.6 512,1005.3 513,1005.85 514,1004.87 515,1004.5 516,1004.97 517,1005.79 518,1004.12 519,1005.94 520,1004.97 521,1005.62 522,1005.31 523,1004.88 524,1005.55 525,1005.84 526,1004.99 527,1003.11 528,1005.42 529,1005.16 530,1005.58 531,1004.77 532,1004.88 533,1005.45 534,1005.58 535,1004.82 536,1005.8 537,1004.44 538,1006.06 539,1005.16 540,1005.87 541,1005.76 542,1006.12 543,1005.37 544,1005.15 545,1005.23 546,1004.73 547,1005.82 548,1005.54 549,1004.71 550,1005.23 551,1005.09 552,1003.35 553,1005.94 554,1005.33 555,1004.96 556,1004.66 557,1005.24 558,1005.01 559,1005.5 560,1004.66 561,1005.86 562,1004.78 563,1005.93 564,1005.95 565,1005.06 566,1004.61 567,1005.13 568,1005.39 569,1004.63 570,1005.42 571,1005.12 572,1004.7 573,1006.17 574,1005.54 575,1005.25 576,1005.39 577,1006.15 578,1004.91 579,1005.29 580,1005.11 581,1006.13 582,1005.97 583,1004.91 584,1005.47 585,1005.51 586,1005.46 587,1003.72 588,1005.36 589,1006.13 590,1004.8 591,1004.66 592,1004.76 593,1005.15 594,1005.84 595,1005.25 596,1004.66 597,1003.45 598,1006.17 599,1005.65 600,1005.95 601,1005.81 602,1006.11 603,1004.74 604,1005.45 605,1004.81 606,1004.66 607,1005.19 608,1004.97 609,1005.81 610,1005.01 611,1005.79 612,1005.8 613,1006.19 614,1005.56 615,1004.78 616,1005.59 617,1005.15 618,1005.87 619,1005.87 620,1006.1 621,1004.79 622,1005.03 623,1005.42 624,1005.06 625,1005.7 626,1005.96 627,1004.84 628,1006.1 629,1005.77 630,1005.95 631,1005.44 632,1005.88 633,1005.09 634,1004.79 635,1005.85 636,1005.95 637,1006.12 638,1005.62 639,1005.33 640,1006.12 641,1005.33 642,1005.4 643,1005.51 644,1006.13 645,1005.33 646,1004.27 647,1004.83 648,1004.79 649,1004.61 650,1004.91 651,1005.84 652,1005.76 653,1005.14 654,1005.65 655,1005.14 656,1004.65 657,1005.28 658,1005.89 659,1005.49 660,1005.08 661,1005.62 662,1005.03 663,1005.53 664,1005.77 665,1004.88 666,1004.71 667,1005.58 668,1005.57 669,1005.64 670,1004.73 671,1005.54 672,1005.81 673,1004.71 674,1004.94 675,1005.06 676,1005.78 677,1006.03 678,1004.88 679,1004.88 680,1004.76 681,1006 682,1006.16 683,1006.16 684,1005.37 685,1005.39 686,1005.21 687,1005.21 688,1005.51 689,1005.75 690,1005.77 691,1005.46 692,1005.78 693,1005.89 694,1005.15 695,1005.14 696,1005.62 697,1004.75 698,1005.8 699,1005.56 700,1005.89 701,1005.93 702,1005.38 703,1005.16 704,1005.82 705,1005.38 706,1005.18 707,1004.66 708,1005.16 709,1005.84 710,1005.22 711,1005.92 712,1004.97 713,1006.09 714,1005.88 715,1005.48 716,1005.42 717,1005.22 718,1005.08 719,1005.06 720,1005.26 721,1005.76 722,1005.16 723,1006.1 724,1003.38 725,1006.01 726,1005.66 727,1005.36 728,1005.88 729,1006.17 730,1005.95 731,1005.91 732,1005.95 733,1005.47 734,1005.57 735,1005.34 736,1005.56 737,1004.89 738,1005.85 739,1004.84 740,1005.63 741,1005.54 742,1005.18 743,1005.66 744,1004.86 745,1004.1 746,1005.2 747,1004.97 748,1004.7 749,1005.85 750,1005.18 751,1004.78 752,1004.71 753,1004.87 754,1004.68 755,1006.03 756,1005.64 757,1005.26 758,1005.83 759,1005.24 760,1006.08 761,1005.26 762,1004.9 763,1005.44 764,1004.75 765,1003.54 766,1006.04 767,1004.73 768,1005.06 769,1005.21 770,1005.87 771,1006.18 772,1005.38 773,1005.39 774,1005.11 775,1005.45 776,1005.52 777,1006.17 778,1005.31 779,1006.18 780,1006.01 781,1005.1 782,1005.81 783,1005.35 784,1005.09 785,1005.89 786,1005.75 787,1003.17 788,1005.69 789,1005.71 790,1005.76 791,1005.15 792,1003.89 793,1005.54 794,1005.49 795,1005.98 796,1005.71 797,1004.78 798,1004.84 799,1005.96 800,1005.14 801,1005.4 802,1006.15 803,1005.04 804,1005.19 805,1005.62 806,1006.16 807,1005.83 808,1004.82 809,1005.34 810,1004.96 811,1004.73 812,1004.81 813,1004.65 814,1006.18 815,1005.72 816,1005.87 817,1005.62 818,1005.97 819,1005.99 820,1005.72 821,1005.31 822,1004.95 823,1005.45 824,1005.07 825,1006.14 826,1005.78 827,1004.94 828,1005.85 829,1006.06 830,1005.46 831,1004.88 832,1006.2 833,1006.17 834,1005.24 835,1005.25 836,1005.36 837,1005.12 838,1005.11 839,1006.11 840,1004.39 841,1006.12 842,1005.15 843,1005.99 844,1005.12 845,1005.19 846,1005.03 847,1005.37 848,1004.66 849,1004.7 850,1005.25 851,1005.69 852,1006.12 853,1004.67 854,1005.55 855,1003.68 856,1005.18 857,1005.3 858,1004.61 859,1005.11 860,1005.48 861,1005.59 862,1005.71 863,1005.93 864,1004.7 865,1005.78 866,1004.8 867,1006.05 868,1006.1 869,1005.99 870,1006.09 871,1006.16 872,1004.83 873,1005.28 874,1005.19 875,1005.5 876,1005.23 877,1004.74 878,1005.92 879,1005.32 880,1006.17 881,1005.33 882,1004.98 883,1006.2 884,1005.7 885,1005.34 886,1005.47 887,1005.83 888,1006.08 889,1005.3 890,1005.53 891,1006.2 892,1005.43 893,1005.03 894,1005.82 895,1005.06 896,1004.93 897,1005.25 898,1005.74 899,1005.15 900,1005.98 901,1006 902,1005.25 903,1005.87 904,1004.69 905,1004.78 906,1004.88 907,1005.46 908,1005.09 909,1005.94 910,1005.27 911,1005.17 912,1005.03 913,1005.7 914,1005.85 915,1005.68 916,1006.16 917,1005.84 918,1005.06 919,1004.87 920,1006.03 921,1005.65 922,1005.36 923,1005.21 924,1005 925,1005.14 926,1006.1 927,1003.14 928,1004.95 929,1005.27 930,1004.77 931,1006.18 932,1004.9 933,1005.65 934,1006.19 935,1003.91 936,1005.8 937,1004.82 938,1006.07 939,1005.58 940,1005.57 941,1005.86 942,1005.74 943,1005.62 944,1005.18 945,1004.91 946,1005.93 947,1005.25 948,1004.85 949,1005.85 950,1005.52 951,1004.72 952,1005.19 953,1005.75 954,1005.49 955,1004.63 956,1003.98 957,1005.67 958,1004.63 959,1005.21 960,1005.86 961,1005.99 962,1005.64 963,1004.47 964,1006.1 965,1005.21 966,1005.53 967,1005.76 968,1005.94 969,1005.79 970,1005.16 971,1005.39 972,1006.17 973,1006.16 974,1005.47 975,1005.19 976,1004.71 977,1005.58 978,1005.7 979,1005.17 980,1005.06 981,1005.62 982,1005.69 983,1005.35 984,1004.15 985,1004.83 986,1004.01 987,1004.82 988,1005.8 989,1004.67 990,1006.08 991,1005.94 992,1005.55 993,1005.62 994,1004.84 995,1005.88 996,1004.71 997,1005.09 998,1005.11 999,1005.45 1000,1005.09 1001,1005.35 1002,1004.6 1003,1006.05 1004,1003.36 1005,1005.51 1006,1006.16 1007,1005.53 1008,1005.15 1009,1006.09 1010,1005.17 1011,1005.11 1012,1004.79 1013,1004.9 1014,1004.97 1015,1005.01 1016,1005.77 1017,1003.13 1018,1005.94 1019,1005.77 1020,1004.12 1021,1005.4 1022,1005.48 1023,1004.83 1024,1005.18 1025,1005.16 1026,1005.78 1027,1004.6 1028,1004.79 1029,1006.12 1030,1004.63 1031,1005.48 1032,1005.18 1033,1004.81 1034,1005.37 1035,1004.64 1036,1005.07 1037,1006.15 1038,1006.07 1039,1005.43 1040,1005.65 1041,1005.15 1042,1006.01 1043,1006.16 1044,1004.65 1045,1005.03 1046,1004.93 1047,1004.61 1048,1004.99 1049,1005.28 1050,1006.15 1051,1004.63 1052,1004.77 1053,1005.07 1054,1005.51 1055,1005.56 1056,1006.17 1057,1005.79 1058,1006.04 1059,1005.97 1060,1005.65 1061,1006.07 1062,1006.2 1063,1005.42 1064,1004.5 1065,1006.19 1066,1005.43 1067,1006.01 1068,1004.79 1069,1005.32 1070,1005.76 1071,1005.16 1072,1005.76 1073,1005.89 1074,1006.05 1075,1005.43 1076,1005.73 1077,1004.96 1078,1005.28 1079,1005.57 1080,1005.58 1081,1005.53 1082,1004.71 1083,1006.03 1084,1004.76 1085,1005.55 1086,1005.97 1087,1005.18 1088,1006.16 1089,1005.17 1090,1005.27 1091,1004.79 1092,1005.59 1093,1005.57 1094,1005.4 1095,1005 1096,1005.18 1097,1005.35 1098,1004.66 1099,1005.06 1100,1005.86 1101,1004.82 1102,1005.3 1103,1005.35 1104,1006.15 1105,1005.34 1106,1004.71 1107,1006.05 1108,1005.08 1109,1005.1 1110,1005.96 1111,1005.25 1112,1005.8 1113,1005.25 1114,1005.07 1115,1005.57 1116,1004.74 1117,1004.85 1118,1005.25 1119,1005.47 1120,1004.89 1121,1004.89 1122,1005.13 1123,1005.7 1124,1004.83 1125,1004.99 1126,1005.77 1127,1006.19 1128,1005.12 1129,1005.74 1130,1005.32 1131,1006.02 1132,1006.07 1133,1005.54 1134,1005.11 1135,1005.04 1136,1005.32 1137,1004.63 1138,1005.07 1139,1005.24 1140,1005.44 1141,1006.17 1142,1006.17 1143,1003.4 1144,1005.01 1145,1005.12 1146,1005.18 1147,1006.09 1148,1006.09 1149,1005.17 1150,1005.64 1151,1005.25 1152,1005.29 1153,1004.66 1154,1005.13 1155,1004.84 1156,1005.99 1157,1004.97 1158,1006.08 1159,1004.7 1160,1005.56 1161,1004.98 1162,1004.74 1163,1005.42 1164,1005.83 1165,1004.94 1166,1005.34 1167,1004.9 1168,1004.66 1169,1006.14 1170,1004.26 1171,1005.89 1172,1005 1173,1006.13 1174,1004.71 1175,1004.79 1176,1005.9 1177,1005.26 1178,1004.89 1179,1004.95 1180,1004.75 1181,1005.34 1182,1004.61 1183,1006.05 1184,1005.12 1185,1004.31 1186,1005.24 1187,1005.81 1188,1006.15 1189,1004.8 1190,1005.43 1191,1005.03 1192,1005.71 1193,1005.49 1194,1005.82 1195,1005.11 1196,1004.99 1197,1006.1 1198,1006.02 1199,1005.58 1200,1005.37 1201,1005.37 1202,1005.39 1203,1005.35 1204,1005.37 1205,1004.86 1206,1005.04 1207,1005.27 1208,1005.4 1209,1006.01 1210,1005.65 1211,1006.09 1212,1005.18 1213,1005.6 1214,1005.33 1215,1003.6 1216,1005.28 1217,1005.88 1218,1005.83 1219,1005.01 1220,1005.24 1221,1005 1222,1004.82 1223,1006.16 1224,1005.62 1225,1005.93 1226,1005.64 1227,1005.21 1228,1005.39 1229,1005.53 1230,1005.81 1231,1003.29 1232,1005.16 1233,1005.15 1234,1005.6 1235,1005.3 1236,1004.99 1237,1005 1238,1004.61 1239,1005.18 1240,1005.82 1241,1005.85 1242,1005.14 1243,1005.22 1244,1005.43 1245,1005.49 1246,1005.97 1247,1005.45 1248,1006.12 1249,1004.74 1250,1005.55 1251,1005.86 1252,1004.87 1253,1004.67 1254,1005.6 1255,1004.72 1256,1005.16 1257,1006.14 1258,1006.17 1259,1005.03 1260,1004.87 1261,1004.67 1262,1005.33 1263,1005.61 1264,1003.77 1265,1006.03 1266,1005.84 1267,1006.1 1268,1005.32 1269,1005.82 1270,1005.97 1271,1005.66 1272,1004.2 1273,1005.47 1274,1005.05 1275,1004.97 1276,1005.49 1277,1006.15 1278,1003.12 1279,1005.71 1280,1005.48 1281,1004.73 1282,1006.02 1283,1005.35 1284,1006.05 1285,1004.97 1286,1006.03 1287,1005.62 1288,1005.51 1289,1005.11 1290,1005.69 1291,1005.64 1292,1005.09 1293,1006.07 1294,1005.7 1295,1005.73 1296,1005.98 1297,1005.22 1298,1005.46 1299,1005.04 1300,1004.82 1301,1004.87 1302,1006.05 1303,1004.87 1303,1010.42 1302,1010.75 1301,1010.21 1300,1009.94 1299,1009.95 1298,1010.37 1297,1010.09 1296,1010.88 1295,1010.06 1294,1010.23 1293,1010.22 1292,1010.66 1291,1010.05 1290,1010.82 1289,1010.27 1288,1010.6 1287,1010.01 1286,1010.45 1285,1010.24 1284,1010.7 1283,1010.85 1282,1010.29 1281,1010.71 1280,1010 1279,1010.5 1278,1010 1277,1010.05 1276,1009.92 1275,1010.11 1274,1009.97 1273,1010.43 1272,1010.06 1271,1010.5 1270,1010.1 1269,1010.12 1268,1010.61 1267,1010.22 1266,1010.77 1265,1010.27 1264,1009.94 1263,1010.04 1262,1010.27 1261,1010.6 1260,1010.2 1259,1009.97 1258,1010.46 1257,1010.87 1256,1010.86 1255,1010.77 1254,1010.47 1253,1010.52 1252,1010.02 1251,1010.62 1250,1010.39 1249,1010.89 1248,1010.25 1247,1010.49 1246,1009.93 1245,1010.69 1244,1010.78 1243,1010.76 1242,1010.84 1241,1010.84 1240,1010.69 1239,1010.26 1238,1010.19 1237,1010.09 1236,1010.02 1235,1010.43 1234,1010.57 1233,1010.8 1232,1009.93 1231,1010.62 1230,1009.94 1229,1010.8 1228,1010.25 1227,1009.94 1226,1010.14 1225,1010.79 1224,1010.66 1223,1010.51 1222,1010.03 1221,1010.07 1220,1010.17 1219,1010.69 1218,1010.79 1217,1010.26 1216,1010.15 1215,1010.87 1214,1009.92 1213,1010.66 1212,1010.59 1211,1010.03 1210,1010.22 1209,1010.84 1208,1010.3 1207,1010.39 1206,1009.91 1205,1010.5 1204,1010.18 1203,1010.54 1202,1010.21 1201,1010.56 1200,1010.84 1199,1010.79 1198,1010.43 1197,1010.69 1196,1010.13 1195,1010.41 1194,1010.81 1193,1010.39 1192,1010.02 1191,1010.32 1190,1010.22 1189,1010.64 1188,1010.67 1187,1010.24 1186,1010.33 1185,1010.6 1184,1010.15 1183,1010.1 1182,1010.47 1181,1010.85 1180,1010 1179,1010.82 1178,1010.41 1177,1010.29 1176,1010.17 1175,1010.78 1174,1010.3 1173,1010.19 1172,1010.53 1171,1010.37 1170,1010.63 1169,1010.67 1168,1010.21 1167,1010.47 1166,1010.56 1165,1010.63 1164,1010.22 1163,1010.18 1162,1010.46 1161,1010.55 1160,1009.91 1159,1010.11 1158,1010.16 1157,1009.9 1156,1010.31 1155,1010.63 1154,1009.93 1153,1010.23 1152,1010.57 1151,1010.14 1150,1010.57 1149,1010.6 1148,1010.89 1147,1010.1 1146,1010.32 1145,1010.31 1144,1010.69 1143,1010.58 1142,1010.63 1141,1010.82 1140,1009.91 1139,1010.48 1138,1010.53 1137,1010.12 1136,1009.93 1135,1010.37 1134,1010.31 1133,1010.49 1132,1010.56 1131,1009.99 1130,1010.58 1129,1010.59 1128,1010.15 1127,1010.26 1126,1010.07 1125,1009.95 1124,1010.84 1123,1010.89 1122,1010.76 1121,1010.02 1120,1010.56 1119,1010.86 1118,1010.68 1117,1010.07 1116,1010.24 1115,1010.13 1114,1010.82 1113,1010.55 1112,1010.66 1111,1010 1110,1010.43 1109,1010.38 1108,1010.66 1107,1010.74 1106,1010.38 1105,1010.29 1104,1010.06 1103,1010.84 1102,1010.03 1101,1010.87 1100,1010.77 1099,1010.43 1098,1010.47 1097,1010.53 1096,1010.68 1095,1010.26 1094,1010.52 1093,1010.8 1092,1010.46 1091,1010.74 1090,1010.39 1089,1010.29 1088,1010.74 1087,1010.4 1086,1010.75 1085,1010.79 1084,1010.32 1083,1010.68 1082,1010.69 1081,1010.47 1080,1010.35 1079,1010.33 1078,1010.37 1077,1010.55 1076,1010.16 1075,1010.61 1074,1010.36 1073,1010.01 1072,1009.95 1071,1010.23 1070,1010.88 1069,1010.56 1068,1010.23 1067,1010.52 1066,1010.56 1065,1010 1064,1010.9 1063,1010.63 1062,1010.05 1061,1010.31 1060,1010.44 1059,1010.68 1058,1010.28 1057,1010.35 1056,1010.24 1055,1010.09 1054,1010.54 1053,1009.98 1052,1010.64 1051,1009.99 1050,1009.98 1049,1010.03 1048,1010.29 1047,1010.66 1046,1010.01 1045,1010.58 1044,1010.76 1043,1010.75 1042,1010.38 1041,1010.85 1040,1010.09 1039,1010.56 1038,1009.98 1037,1010.03 1036,1010.03 1035,1009.98 1034,1010.65 1033,1010.27 1032,1010.1 1031,1010.17 1030,1010.17 1029,1010.09 1028,1010.46 1027,1010.67 1026,1010.43 1025,1010.37 1024,1010.8 1023,1010.32 1022,1010.66 1021,1010.26 1020,1010.14 1019,1010.89 1018,1010.71 1017,1010.48 1016,1010.7 1015,1010.34 1014,1009.96 1013,1010.68 1012,1010.9 1011,1010.22 1010,1010.15 1009,1010.34 1008,1010.37 1007,1010.59 1006,1010.22 1005,1010.57 1004,1009.97 1003,1010.52 1002,1010.13 1001,1010.63 1000,1010.75 999,1010.56 998,1010.32 997,1010.51 996,1009.9 995,1010.47 994,1010.7 993,1010.78 992,1010.89 991,1010.02 990,1010.22 989,1010.57 988,1010.32 987,1010.06 986,1010.28 985,1010.85 984,1010.77 983,1010.46 982,1010.85 981,1010.8 980,1010.8 979,1010.48 978,1010.66 977,1010.48 976,1010.34 975,1010.46 974,1010.7 973,1010.16 972,1010.8 971,1010.07 970,1010.31 969,1010.45 968,1010.21 967,1010.89 966,1010.26 965,1010.82 964,1010.56 963,1010.57 962,1010.53 961,1010.22 960,1010.59 959,1010.78 958,1010.19 957,1010.88 956,1010.47 955,1010.56 954,1010.52 953,1010.3 952,1010.52 951,1010.42 950,1010.07 949,1010.68 948,1010.33 947,1010.88 946,1010.33 945,1010.62 944,1010.23 943,1010.83 942,1009.96 941,1010.78 940,1010.17 939,1010.85 938,1010.78 937,1010.77 936,1010.17 935,1010.48 934,1010.66 933,1010.47 932,1009.94 931,1010.66 930,1010.2 929,1010.52 928,1010 927,1010.52 926,1010.02 925,1010.81 924,1010.22 923,1010.48 922,1010.42 921,1009.91 920,1010.34 919,1010.57 918,1010.75 917,1010.71 916,1010.48 915,1010.65 914,1009.99 913,1010.62 912,1010.16 911,1010.12 910,1010.2 909,1010.33 908,1010.82 907,1010.06 906,1010.29 905,1010.89 904,1010.14 903,1010.06 902,1010.17 901,1009.97 900,1010.37 899,1010 898,1010.61 897,1010.48 896,1009.9 895,1010.62 894,1010.56 893,1009.97 892,1010.47 891,1010.73 890,1010.89 889,1010.51 888,1010.16 887,1010.7 886,1010.28 885,1010.06 884,1010.04 883,1010.55 882,1010.17 881,1010.86 880,1010.34 879,1010.52 878,1010.59 877,1010.14 876,1010.87 875,1010.1 874,1010.39 873,1010.42 872,1010.59 871,1010.72 870,1010.28 869,1010.07 868,1010.54 867,1010.41 866,1010.42 865,1010.6 864,1010.68 863,1010.86 862,1010.55 861,1010.8 860,1010.73 859,1010.5 858,1010.32 857,1010.24 856,1010.12 855,1010.2 854,1010.08 853,1010.34 852,1010.12 851,1010.84 850,1010.61 849,1010.8 848,1010.66 847,1010.01 846,1009.9 845,1010.54 844,1010.46 843,1009.96 842,1010.06 841,1010.42 840,1010.12 839,1010.8 838,1010.72 837,1010.31 836,1010.87 835,1009.9 834,1009.91 833,1010.63 832,1010.68 831,1010.16 830,1010.09 829,1010.13 828,1010.25 827,1010.83 826,1010.4 825,1010.22 824,1010.59 823,1009.94 822,1009.98 821,1009.94 820,1010.33 819,1009.95 818,1010.66 817,1010.76 816,1010.1 815,1010.13 814,1010.87 813,1010.64 812,1010.85 811,1010.09 810,1010.35 809,1010.5 808,1010.31 807,1010.28 806,1010.25 805,1010.21 804,1010.38 803,1010.23 802,1010.16 801,1010.84 800,1010.21 799,1010.9 798,1010.42 797,1010.32 796,1010.08 795,1010.66 794,1010.66 793,1010.2 792,1010.65 791,1010.52 790,1010.14 789,1010.45 788,1010.46 787,1010.34 786,1010.76 785,1010.71 784,1010.45 783,1010.07 782,1010.79 781,1009.91 780,1010.77 779,1010.3 778,1010.45 777,1010.31 776,1010.74 775,1010.86 774,1010.85 773,1010.83 772,1010.69 771,1010.36 770,1010.81 769,1010.4 768,1009.91 767,1010.4 766,1010.58 765,1010.04 764,1010.51 763,1009.96 762,1010.01 761,1010.85 760,1010.89 759,1010.83 758,1009.92 757,1010.05 756,1010.52 755,1010.43 754,1010.89 753,1009.9 752,1010.45 751,1010.28 750,1010.76 749,1010.73 748,1010.3 747,1010.3 746,1010.17 745,1010.67 744,1010.37 743,1010.41 742,1010.8 741,1010.11 740,1010.57 739,1010.48 738,1010.31 737,1009.93 736,1010.11 735,1010.61 734,1009.94 733,1010.19 732,1010.78 731,1010.87 730,1010.65 729,1010.65 728,1010.23 727,1009.97 726,1010.51 725,1010.27 724,1010.53 723,1010.42 722,1010.51 721,1010.38 720,1010.51 719,1010.86 718,1010.5 717,1010.44 716,1010.55 715,1010.12 714,1010.29 713,1009.99 712,1010.05 711,1010.62 710,1010.67 709,1009.91 708,1010.23 707,1010.3 706,1010.2 705,1010.05 704,1010.13 703,1010.14 702,1010.57 701,1010.59 700,1010.72 699,1010.41 698,1010.37 697,1010.2 696,1010.46 695,1010.33 694,1010.09 693,1010.75 692,1010.11 691,1010.56 690,1010.26 689,1010.7 688,1010.08 687,1009.97 686,1010.08 685,1010.47 684,1010.57 683,1010.67 682,1010.76 681,1010.28 680,1010.58 679,1010.45 678,1010.31 677,1010.27 676,1010.64 675,1009.99 674,1010.64 673,1010.17 672,1010.31 671,1010.28 670,1010.8 669,1010.71 668,1010.61 667,1010.82 666,1010.85 665,1009.92 664,1010.88 663,1010.11 662,1010.33 661,1010.59 660,1010.31 659,1010.71 658,1010.08 657,1010.27 656,1010.28 655,1010.24 654,1010.9 653,1010.17 652,1010.17 651,1009.98 650,1010.8 649,1010.02 648,1010.26 647,1010.9 646,1010.32 645,1010.25 644,1010.36 643,1010.86 642,1010.42 641,1009.97 640,1010.31 639,1010.34 638,1010.17 637,1010.5 636,1010.87 635,1009.92 634,1010.28 633,1010.3 632,1010.21 631,1010.5 630,1010.05 629,1010.15 628,1010.27 627,1010.19 626,1009.97 625,1010.26 624,1010.78 623,1010.07 622,1010.23 621,1010.74 620,1010.26 619,1009.96 618,1010 617,1010.68 616,1010.4 615,1010.56 614,1010.59 613,1010.74 612,1010.66 611,1010.26 610,1010.49 609,1010.09 608,1010.08 607,1010.49 606,1010.4 605,1010.1 604,1010.11 603,1010.18 602,1010.7 601,1010.53 600,1010.54 599,1010.28 598,1010.11 597,1010 596,1010.88 595,1010.1 594,1009.92 593,1009.92 592,1010.6 591,1010.52 590,1010.06 589,1009.91 588,1010.22 587,1010.62 586,1010.63 585,1010.78 584,1010.65 583,1010.59 582,1010.15 581,1010.3 580,1010.81 579,1010.39 578,1010.59 577,1010.19 576,1010.18 575,1010.51 574,1010.6 573,1010.11 572,1010.81 571,1010.74 570,1010.33 569,1010.67 568,1010.7 567,1010.33 566,1010.7 565,1010.1 564,1010.25 563,1010.04 562,1010.12 561,1010.25 560,1010.52 559,1010.5 558,1010.67 557,1010.22 556,1010.13 555,1010.4 554,1010.43 553,1010.77 552,1010.44 551,1010.05 550,1010.26 549,1010.84 548,1010.41 547,1009.99 546,1010.14 545,1010.5 544,1010.3 543,1010.29 542,1010.81 541,1010.18 540,1010.54 539,1010.85 538,1010.86 537,1009.96 536,1010.31 535,1010.39 534,1010.43 533,1010.72 532,1010.37 531,1010.16 530,1010.72 529,1010.47 528,1010.86 527,1010.9 526,1010.88 525,1010.57 524,1010.12 523,1010.79 522,1010.68 521,1010.56 520,1010.1 519,1010.01 518,1010.41 517,1010.13 516,1010.86 515,1010.08 514,1010.81 513,1010.35 512,1010.22 511,1010.24 510,1010.09 509,1010.89 508,1010.27 507,1010.2 506,1010.28 505,1010.65 504,1010.64 503,1010.77 502,1010.8 501,1010.23 500,1010.42 499,1010.08 498,1010.13 497,1010.28 496,1010.36 495,1010.11 494,1010.74 493,1010.65 492,1010.32 491,1010.21 490,1010.25 489,1009.91 488,1010.81 487,1010.64 486,1010.13 485,1010.11 484,1009.99 483,1010.56 482,1010.29 481,1010.57 480,1010.68 479,1010.27 478,1010.14 477,1010.83 476,1009.95 475,1010 474,1010.39 473,1010.82 472,1010.58 471,1010.27 470,1010.55 469,1010.09 468,1010.24 467,1010.74 466,1010.32 465,1010.23 464,1010.29 463,1009.99 462,1009.93 461,1009.99 460,1010.11 459,1010.86 458,1010.5 457,1010.51 456,1010.3 455,1010.23 454,1010.22 453,1010.89 452,1010.46 451,1010.32 450,1009.91 449,1010.35 448,1010.34 447,1010.6 446,1010.09 445,1010.24 444,1010.03 443,1010.42 442,1010.25 441,1010.58 440,1009.91 439,1010.68 438,1009.93 437,1010.11 436,1010.43 435,1010.03 434,1010.8 433,1010.1 432,1010.09 431,1010.02 430,1010.69 429,1010.51 428,1010.75 427,1010.54 426,1010.62 425,1010.82 424,1010.12 423,1010.42 422,1010.7 421,1010.08 420,1009.94 419,1010.83 418,1010.26 417,1010.44 416,1010.41 415,1010.12 414,1010.2 413,1010.77 412,1010.15 411,1009.96 410,1010.65 409,1010.59 408,1010.74 407,1010.62 406,1010.69 405,1010.37 404,1010.08 403,1010.2 402,1010.27 401,1010.79 400,1010.59 399,1010.24 398,1010.85 397,1010.67 396,1009.98 395,1010.72 394,1010.57 393,1010.07 392,1010.45 391,1010.64 390,1010.53 389,1010.42 388,1010.63 387,1009.97 386,1010.65 385,1010.09 384,1010.03 383,1010.53 382,1010.41 381,1010.68 380,1010.14 379,1010.75 378,1010.87 377,1009.97 376,1010.69 375,1010.88 374,1010.56 373,1009.93 372,1010.34 371,1010.09 370,1010.28 369,1010.47 368,1010.22 367,1010.36 366,1010.82 365,1010.39 364,1010.83 363,1010.73 362,1009.91 361,1010.16 360,1010.27 359,1010.84 358,1010.89 357,1010.29 356,1010.55 355,1010.89 354,1010.62 353,1010.49 352,1010.45 351,1010.52 350,1010.87 349,1010.67 348,1009.96 347,1010.11 346,1010.87 345,1010.24 344,1009.95 343,1010.1 342,1009.96 341,1010.38 340,1010.68 339,1010.55 338,1009.93 337,1010.36 336,1010.58 335,1010.03 334,1010.07 333,1010.03 332,1010.54 331,1010.57 330,1010.26 329,1010.23 328,1010.19 327,1010.18 326,1010.54 325,1010.05 324,1010.72 323,1010.09 322,1009.98 321,1010.05 320,1010.49 319,1010.18 318,1009.97 317,1010.43 316,1010.57 315,1010.56 314,1010.55 313,1010.31 312,1010.15 311,1010.09 310,1010.15 309,1010.7 308,1010.32 307,1010.07 306,1010.09 305,1010.57 304,1010.86 303,1010.34 302,1010.86 301,1009.97 300,1010.35 299,1010.41 298,1010.06 297,1010.81 296,1010.52 295,1010.33 294,1010.37 293,1010.32 292,1010.54 291,1010.03 290,1010.16 289,1010.37 288,1010.04 287,1010.75 286,1009.9 285,1010.35 284,1010.79 283,1010.01 282,1010.68 281,1010.59 280,1010.33 279,1010.4 278,1010.8 277,1010.38 276,1009.94 275,1010.85 274,1010.14 273,1010.25 272,1009.95 271,1010.39 270,1010.84 269,1010.41 268,1010.43 267,1010.01 266,1010.12 265,1010.49 264,1010.34 263,1010.78 262,1010.03 261,1010.36 260,1010.4 259,1010.34 258,1010.89 257,1009.97 256,1010.06 255,1009.99 254,1009.97 253,1010.57 252,1010.55 251,1010.54 250,1010.73 249,1010.79 248,1010.71 247,1010.41 246,1010.47 245,1010.28 244,1010.29 243,1010.3 242,1010.75 241,1010.48 240,1010.37 239,1010.82 238,1010.4 237,1010.02 236,1010.11 235,1010.77 234,1010.15 233,1010.48 232,1010.89 231,1010.58 230,1010.74 229,1010.51 228,1010.2 227,1010.58 226,1010.88 225,1010.43 224,1010.2 223,1010.61 222,1010.11 221,1010.7 220,1010.67 219,1010.3 218,1009.93 217,1010.76 216,1010.44 215,1009.95 214,1010.72 213,1009.92 212,1010.79 211,1010.44 210,1010.1 209,1010.65 208,1009.98 207,1010.29 206,1010.64 205,1010.9 204,1010.66 203,1010.6 202,1010.1 201,1010.21 200,1010.41 199,1010.75 198,1010.67 197,1010.59 196,1010.1 195,1010.8 194,1010.33 193,1010.46 192,1010.35 191,1010 190,1010.52 189,1010.7 188,1010.68 187,1009.99 186,1010.04 185,1010.48 184,1010.55 183,1009.99 182,1010.33 181,1010.54 180,1010.83 179,1010.36 178,1010.39 177,1010.37 176,1010.46 175,1010.57 174,1010.6 173,1010.53 172,1010.08 171,1009.93 170,1010.08 169,1010.9 168,1010.51 167,1010.15 166,1010.36 165,1010.81 164,1010.07 163,1010.06 162,1010.68" fill="#000"/>
<path transform="scale(0.5)" d="M1294 2001h0m393 4h0m59 2h0m154-17h0m0 12h0m141 3h0m219 2h0m135-2h0m62-10h0m-2085 8h0m93 2h0m150 0h0m214-4h0m-109 5h0m18 0h0" stroke="#000" stroke-width="5.2" stroke-linecap="round" fill="none"/>
<path transform="scale(0.5)" d="M1051 1967h0m470-12h0m225 33h0m81-5h0m70 4h0m360 0h0m208-18h0" stroke="#ff0000" stroke-width="5.6" stroke-linecap="round" fill="none"/>
<path d="M171 959.9h4.6l-2.3-4.6zM182 959.9h4.6l-2.3-4.6zM184 959.9h4.6l-2.3-4.6zM230 959.9h4.6l-2.3-4.6zM262 959.9h4.6l-2.3-4.6zM281 959.9h4.6l-2.3-4.6zM305 959.9h4.6l-2.3-4.6zM307 959.9h4.6l-2.3-4.6zM314 959.9h4.6l-2.3-4.6zM322 959.9h4.6l-2.3-4.6zM412 959.9h4.6l-2.3-4.6zM423.7 959.9h4.6l-2.3-4.6zM425.4 959.9h4.6l-2.3-4.6zM436 959.9h4.6l-2.3-4.6zM437.7 959.9h4.6l-2.3-4.6zM476.7 959.9h4.6l-2.3-4.6zM523 959.9h4.6l-2.3-4.6zM583.7 959.9h4.6l-2.3-4.6zM603 959.9h4.6l-2.3-4.6zM604.4 959.9h4.6l-2.3-4.6zM645 959.9h4.6l-2.3-4.6zM654.4 959.9h4.6l-2.3-4.6zM656 959.9h4.6l-2.3-4.6zM708.7 959.9h4.6l-2.3-4.6zM758 959.9h4.6l-2.3-4.6zM832.7 959.9h4.6l-2.3-4.6zM835 959.9h4.6l-2.3-4.6zM841 959.9h4.6l-2.3-4.6zM848 959.9h4.6l-2.3-4.6zM870.7 959.9h4.6l-2.3-4.6zM881 959.9h4.6l-2.3-4.6zM911 959.9h4.6l-2.3-4.6zM921.7 959.9h4.6l-2.3-4.6zM923.4 959.9h4.6l-2.3-4.6zM946 959.9h4.6l-2.3-4.6zM996.7 959.9h4.6l-2.3-4.6zM999.7 959.9h4.6l-2.3-4.6zM1018 959.9h4.6l-2.3-4.6zM1051.4 959.9h4.6l-2.3-4.6zM1102.7 959.9h4.6l-2.3-4.6zM1106 959.9h4.6l-2.3-4.6zM1125.4 959.9h4.6l-2.3-4.6zM1175.4 959.9h4.6l-2.3-4.6zM1177 959.9h4.6l-2.3-4.6zM1209 959.9h4.6l-2.3-4.6zM1226 959.9h4.6l-2.3-4.6zM1230 959.9h4.6l-2.3-4.6z" fill="#ff0000" stroke="#ff0000" stroke-width="0.5" stroke-linejoin="round"/>
</g>
<g clip-path="url(#c34)">
<line x1="162.3" y1="953.9" x2="162.3" y2="725.5" stroke="#800080" stroke-width="2.08" stroke-dasharray="2.08 3.44"/>
<line x1="1302.77" y1="953.9" x2="1302.77" y2="725.5" stroke="#800080" stroke-width="2.08" stroke-dasharray="2.08 3.44"/>
<line x1="162.3" y1="1010.9" x2="162.3" y2="954.5" stroke="#800080" stroke-width="2.08" stroke-dasharray="2.08 3.44"/>
<line x1="1302.77" y1="1010.9" x2="1302.77" y2="954.5" stroke="#800080" stroke-width="2.08" stroke-dasharray="2.08 3.44"/>
</g>
<rect x="105.5" y="725.5" width="1380" height="286" fill="none" stroke="#000" stroke-width="1.11"/>
<line x1="105.5" y1="954.5" x2="1485.5" y2="954.5" stroke="#000" stroke-width="1.11"/>
<line x1="162.5" y1="1011.5" x2="162.5" y2="1016.36" stroke="#000" stroke-width="1.11"/>
<text x="162.5" y="1032" font-size="14.3" text-anchor="middle" textLength="8.75" lengthAdjust="spacingAndGlyphs">0</text>
<line x1="345.5" y1="1011.5" x2="345.5" y2="1016.36" stroke="#000" stroke-width="1.11"/>
<text x="345.5" y="1032" font-size="14.3" text-anchor="middle" textLength="35" lengthAdjust="spacingAndGlyphs">2500</text>
<line x1="528.5" y1="1011.5" x2="528.5" y2="1016.36" stroke="#000" stroke-width="1.11"/>
<text x="528.5" y="1032" font-size="14.3" text-anchor="middle" textLength="35" lengthAdjust="spacingAndGlyphs">5000</text>
<line x1="711.5" y1="1011.5" x2="711.5" y2="1016.36" stroke="#000" stroke-width="1.11"/>
<text x="711.5" y="1032" font-size="14.3" text-anchor="middle" textLength="35" lengthAdjust="spacingAndGlyphs">7500</text>
<line x1="894.5" y1="1011.5" x2="894.5" y2="1016.36" stroke="#000" stroke-width="1.11"/>
<text x="894.5" y="1032" font-size="14.3" text-anchor="middle" textLength="43.88" lengthAdjust="spacingAndGlyphs">10000</text>
<line x1="1077.5" y1="1011.5" x2="1077.5" y2="1016.36" stroke="#000" stroke-width="1.11"/>
<text x="1077.5" y="1032" font-size="14.3" text-anchor="middle" textLength="43.88" lengthAdjust="spacingAndGlyphs">12500</text>
<line x1="1260.5" y1="1011.5" x2="1260.5" y2="1016.36" stroke="#000" stroke-width="1.11"/>
<text x="1260.5" y="1032" font-size="14.3" text-anchor="middle" textLength="43.88" lengthAdjust="spacingAndGlyphs">15000</text>
<line x1="1443.5" y1="1011.5" x2="1443.5" y2="1016.36" stroke="#000" stroke-width="1.11"/>
<text x="1443.5" y="1032" font-size="14.3" text-anchor="middle" textLength="43.88" lengthAdjust="spacingAndGlyphs">17500</text>
<line x1="100.64" y1="758.5" x2="105.5" y2="758.5" stroke="#000" stroke-width="1.11"/>
<text x="15.75" y="764" font-size="14.3" textLength="22.75" lengthAdjust="spacingAndGlyphs">not</text>
<text x="42.92" y="764" font-size="14.3" textLength="52.08" lengthAdjust="spacingAndGlyphs">Kalman</text>
<line x1="100.64" y1="791.5" x2="105.5" y2="791.5" stroke="#000" stroke-width="1.11"/>
<text x="32.25" y="796" font-size="14.3" textLength="22.83" lengthAdjust="spacingAndGlyphs">not</text>
<text x="59.52" y="796" font-size="14.3" textLength="35.48" lengthAdjust="spacingAndGlyphs">track</text>
<line x1="100.64" y1="823.5" x2="105.5" y2="823.5" stroke="#000" stroke-width="1.11"/>
<text x="26" y="829" font-size="14.3" textLength="27.23" lengthAdjust="spacingAndGlyphs">Sat.</text>
<text x="57.65" y="829" font-size="14.3" textLength="37.35" lengthAdjust="spacingAndGlyphs">pixel.</text>
<line x1="100.64" y1="856.5" x2="105.5" y2="856.5" stroke="#000" stroke-width="1.11"/>
<text x="37.38" y="861" font-size="14.3" textLength="25.79" lengthAdjust="spacingAndGlyphs">Ion.</text>
<text x="67.57" y="861" font-size="14.3" textLength="27.43" lengthAdjust="spacingAndGlyphs">rad.</text>
<line x1="100.64" y1="889.5" x2="105.5" y2="889.5" stroke="#000" stroke-width="1.11"/>
<text x="51.25" y="894" font-size="14.3" textLength="14.5" lengthAdjust="spacingAndGlyphs">dr</text>
<text x="70.16" y="894" font-size="14.3" textLength="11.62" lengthAdjust="spacingAndGlyphs">&gt;</text>
<text x="86.18" y="894" font-size="14.3" textLength="8.82" lengthAdjust="spacingAndGlyphs">5</text>
<line x1="100.64" y1="921.5" x2="105.5" y2="921.5" stroke="#000" stroke-width="1.11"/>
<text x="14.62" y="927" font-size="14.3" textLength="28.93" lengthAdjust="spacingAndGlyphs">OBS</text>
<text x="47.96" y="927" font-size="14.3" textLength="22.67" lengthAdjust="spacingAndGlyphs">not</text>
<text x="75.03" y="927" font-size="14.3" textLength="19.97" lengthAdjust="spacingAndGlyphs">OK</text>
<line x1="100.64" y1="1009.5" x2="105.5" y2="1009.5" stroke="#000" stroke-width="1.11"/>
<text x="95" y="1014" font-size="14.3" text-anchor="end" textLength="8.75" lengthAdjust="spacingAndGlyphs">0</text>
<line x1="100.64" y1="983.5" x2="105.5" y2="983.5" stroke="#000" stroke-width="1.11"/>
<text x="95" y="988" font-size="14.3" text-anchor="end" textLength="8.75" lengthAdjust="spacingAndGlyphs">5</text>
<line x1="100.64" y1="957.5" x2="105.5" y2="957.5" stroke="#000" stroke-width="1.11"/>
<text x="95" y="962" font-size="14.3" text-anchor="end" textLength="17.62" lengthAdjust="spacingAndGlyphs">10</text>
<line x1="102.72" y1="996.5" x2="105.5" y2="996.5" stroke="#000" stroke-width="0.83"/>
<line x1="102.72" y1="970.5" x2="105.5" y2="970.5" stroke="#000" stroke-width="0.83"/>
<text x="0" y="0" font-size="14.3" text-anchor="middle" textLength="14.62" lengthAdjust="spacingAndGlyphs" transform="translate(68.6 983.3) rotate(-90)">dr</text>
</svg></body></html>
